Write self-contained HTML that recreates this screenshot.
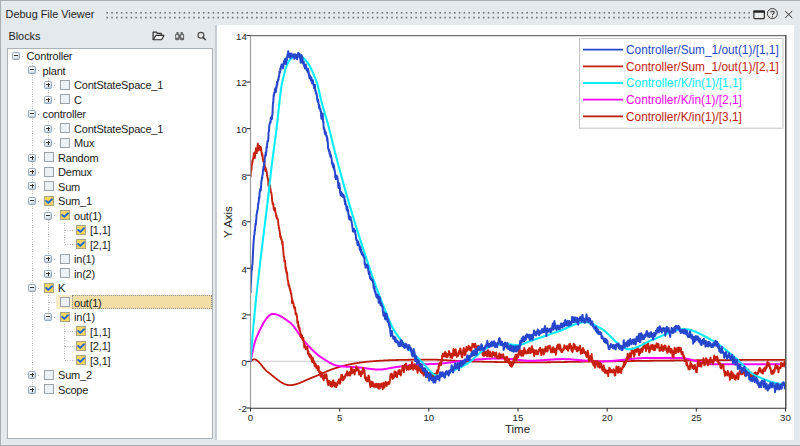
<!DOCTYPE html>
<html><head><meta charset="utf-8"><style>
html,body{margin:0;padding:0;}
body{width:800px;height:446px;position:relative;overflow:hidden;background:#e4e9ed;font-family:"Liberation Sans",sans-serif;color:#1e1e1e;}
.abs{position:absolute;}
#topb{position:absolute;left:0;top:0;width:800px;height:1.2px;background:#a9aeb3;}
#leftb{position:absolute;left:0;top:0;width:1.2px;height:446px;background:#a9aeb3;}
#botb{position:absolute;left:0;top:445px;width:800px;height:1px;background:#a9aeb3;}
#title{position:absolute;left:5.6px;top:8.3px;font-size:10.9px;line-height:13px;white-space:nowrap;}

#blocks{position:absolute;left:8.4px;top:30px;font-size:10.9px;line-height:13px;}
#tree{position:absolute;left:7px;top:48px;width:204px;height:389px;background:#fff;border:1px solid #aab2b8;}
#sep{position:absolute;left:214.6px;top:25px;width:2px;height:415px;background:#c5cbd0;}
#plot{position:absolute;left:217px;top:25px;width:577px;height:415px;background:#fff;}
.tt{position:absolute;font-size:11px;line-height:13px;white-space:nowrap;letter-spacing:-0.2px;color:#1a1a1a;}
.exp{position:absolute;width:6px;height:6px;border:1px solid #93a6ba;border-radius:1.5px;background:linear-gradient(#ffffff 30%,#cfdbe8);box-shadow:inset -0.5px -0.5px 0 #b4c4d4;}
.exp .mh{position:absolute;left:1.2px;top:2.4px;width:3.6px;height:1px;background:#333;}
.exp .mv{position:absolute;left:2.5px;top:1.1px;width:1px;height:3.6px;background:#333;}
.cb{position:absolute;width:8px;height:8px;border:1px solid #9aa3aa;background:#eef1f4;}
.cb.chk{background:#f6d660;border-color:#a6a286;}
.cb svg{position:absolute;left:-1px;top:-1px;}
.vl{position:absolute;width:1px;background-image:linear-gradient(#a8a8a8 50%,transparent 50%);background-size:1px 2.4px;}
.hl{position:absolute;height:1px;background-image:linear-gradient(90deg,#a8a8a8 50%,transparent 50%);background-size:2.4px 1px;}
.hlrow{position:absolute;background:#f8ebc8;}
.hlsel{position:absolute;box-sizing:border-box;background:#f2dea6;border:1px dotted #8a8c90;}
.chart{position:absolute;left:0;top:0;}
</style></head><body>
<div id="topb"></div><div id="leftb"></div><div id="botb"></div>
<div id="title">Debug File Viewer</div>
<svg class="abs" style="left:0;top:0" width="800" height="25"><g fill="#707478"><rect x="106.40" y="12.0" width="1.6" height="1.6"/><rect x="106.40" y="16.8" width="1.6" height="1.6"/><rect x="111.23" y="12.0" width="1.6" height="1.6"/><rect x="111.23" y="16.8" width="1.6" height="1.6"/><rect x="116.05" y="12.0" width="1.6" height="1.6"/><rect x="116.05" y="16.8" width="1.6" height="1.6"/><rect x="120.88" y="12.0" width="1.6" height="1.6"/><rect x="120.88" y="16.8" width="1.6" height="1.6"/><rect x="125.71" y="12.0" width="1.6" height="1.6"/><rect x="125.71" y="16.8" width="1.6" height="1.6"/><rect x="130.53" y="12.0" width="1.6" height="1.6"/><rect x="130.53" y="16.8" width="1.6" height="1.6"/><rect x="135.36" y="12.0" width="1.6" height="1.6"/><rect x="135.36" y="16.8" width="1.6" height="1.6"/><rect x="140.19" y="12.0" width="1.6" height="1.6"/><rect x="140.19" y="16.8" width="1.6" height="1.6"/><rect x="145.02" y="12.0" width="1.6" height="1.6"/><rect x="145.02" y="16.8" width="1.6" height="1.6"/><rect x="149.84" y="12.0" width="1.6" height="1.6"/><rect x="149.84" y="16.8" width="1.6" height="1.6"/><rect x="154.67" y="12.0" width="1.6" height="1.6"/><rect x="154.67" y="16.8" width="1.6" height="1.6"/><rect x="159.50" y="12.0" width="1.6" height="1.6"/><rect x="159.50" y="16.8" width="1.6" height="1.6"/><rect x="164.32" y="12.0" width="1.6" height="1.6"/><rect x="164.32" y="16.8" width="1.6" height="1.6"/><rect x="169.15" y="12.0" width="1.6" height="1.6"/><rect x="169.15" y="16.8" width="1.6" height="1.6"/><rect x="173.98" y="12.0" width="1.6" height="1.6"/><rect x="173.98" y="16.8" width="1.6" height="1.6"/><rect x="178.81" y="12.0" width="1.6" height="1.6"/><rect x="178.81" y="16.8" width="1.6" height="1.6"/><rect x="183.63" y="12.0" width="1.6" height="1.6"/><rect x="183.63" y="16.8" width="1.6" height="1.6"/><rect x="188.46" y="12.0" width="1.6" height="1.6"/><rect x="188.46" y="16.8" width="1.6" height="1.6"/><rect x="193.29" y="12.0" width="1.6" height="1.6"/><rect x="193.29" y="16.8" width="1.6" height="1.6"/><rect x="198.11" y="12.0" width="1.6" height="1.6"/><rect x="198.11" y="16.8" width="1.6" height="1.6"/><rect x="202.94" y="12.0" width="1.6" height="1.6"/><rect x="202.94" y="16.8" width="1.6" height="1.6"/><rect x="207.77" y="12.0" width="1.6" height="1.6"/><rect x="207.77" y="16.8" width="1.6" height="1.6"/><rect x="212.59" y="12.0" width="1.6" height="1.6"/><rect x="212.59" y="16.8" width="1.6" height="1.6"/><rect x="217.42" y="12.0" width="1.6" height="1.6"/><rect x="217.42" y="16.8" width="1.6" height="1.6"/><rect x="222.25" y="12.0" width="1.6" height="1.6"/><rect x="222.25" y="16.8" width="1.6" height="1.6"/><rect x="227.07" y="12.0" width="1.6" height="1.6"/><rect x="227.07" y="16.8" width="1.6" height="1.6"/><rect x="231.90" y="12.0" width="1.6" height="1.6"/><rect x="231.90" y="16.8" width="1.6" height="1.6"/><rect x="236.73" y="12.0" width="1.6" height="1.6"/><rect x="236.73" y="16.8" width="1.6" height="1.6"/><rect x="241.56" y="12.0" width="1.6" height="1.6"/><rect x="241.56" y="16.8" width="1.6" height="1.6"/><rect x="246.38" y="12.0" width="1.6" height="1.6"/><rect x="246.38" y="16.8" width="1.6" height="1.6"/><rect x="251.21" y="12.0" width="1.6" height="1.6"/><rect x="251.21" y="16.8" width="1.6" height="1.6"/><rect x="256.04" y="12.0" width="1.6" height="1.6"/><rect x="256.04" y="16.8" width="1.6" height="1.6"/><rect x="260.86" y="12.0" width="1.6" height="1.6"/><rect x="260.86" y="16.8" width="1.6" height="1.6"/><rect x="265.69" y="12.0" width="1.6" height="1.6"/><rect x="265.69" y="16.8" width="1.6" height="1.6"/><rect x="270.52" y="12.0" width="1.6" height="1.6"/><rect x="270.52" y="16.8" width="1.6" height="1.6"/><rect x="275.35" y="12.0" width="1.6" height="1.6"/><rect x="275.35" y="16.8" width="1.6" height="1.6"/><rect x="280.17" y="12.0" width="1.6" height="1.6"/><rect x="280.17" y="16.8" width="1.6" height="1.6"/><rect x="285.00" y="12.0" width="1.6" height="1.6"/><rect x="285.00" y="16.8" width="1.6" height="1.6"/><rect x="289.83" y="12.0" width="1.6" height="1.6"/><rect x="289.83" y="16.8" width="1.6" height="1.6"/><rect x="294.65" y="12.0" width="1.6" height="1.6"/><rect x="294.65" y="16.8" width="1.6" height="1.6"/><rect x="299.48" y="12.0" width="1.6" height="1.6"/><rect x="299.48" y="16.8" width="1.6" height="1.6"/><rect x="304.31" y="12.0" width="1.6" height="1.6"/><rect x="304.31" y="16.8" width="1.6" height="1.6"/><rect x="309.13" y="12.0" width="1.6" height="1.6"/><rect x="309.13" y="16.8" width="1.6" height="1.6"/><rect x="313.96" y="12.0" width="1.6" height="1.6"/><rect x="313.96" y="16.8" width="1.6" height="1.6"/><rect x="318.79" y="12.0" width="1.6" height="1.6"/><rect x="318.79" y="16.8" width="1.6" height="1.6"/><rect x="323.62" y="12.0" width="1.6" height="1.6"/><rect x="323.62" y="16.8" width="1.6" height="1.6"/><rect x="328.44" y="12.0" width="1.6" height="1.6"/><rect x="328.44" y="16.8" width="1.6" height="1.6"/><rect x="333.27" y="12.0" width="1.6" height="1.6"/><rect x="333.27" y="16.8" width="1.6" height="1.6"/><rect x="338.10" y="12.0" width="1.6" height="1.6"/><rect x="338.10" y="16.8" width="1.6" height="1.6"/><rect x="342.92" y="12.0" width="1.6" height="1.6"/><rect x="342.92" y="16.8" width="1.6" height="1.6"/><rect x="347.75" y="12.0" width="1.6" height="1.6"/><rect x="347.75" y="16.8" width="1.6" height="1.6"/><rect x="352.58" y="12.0" width="1.6" height="1.6"/><rect x="352.58" y="16.8" width="1.6" height="1.6"/><rect x="357.40" y="12.0" width="1.6" height="1.6"/><rect x="357.40" y="16.8" width="1.6" height="1.6"/><rect x="362.23" y="12.0" width="1.6" height="1.6"/><rect x="362.23" y="16.8" width="1.6" height="1.6"/><rect x="367.06" y="12.0" width="1.6" height="1.6"/><rect x="367.06" y="16.8" width="1.6" height="1.6"/><rect x="371.88" y="12.0" width="1.6" height="1.6"/><rect x="371.88" y="16.8" width="1.6" height="1.6"/><rect x="376.71" y="12.0" width="1.6" height="1.6"/><rect x="376.71" y="16.8" width="1.6" height="1.6"/><rect x="381.54" y="12.0" width="1.6" height="1.6"/><rect x="381.54" y="16.8" width="1.6" height="1.6"/><rect x="386.37" y="12.0" width="1.6" height="1.6"/><rect x="386.37" y="16.8" width="1.6" height="1.6"/><rect x="391.19" y="12.0" width="1.6" height="1.6"/><rect x="391.19" y="16.8" width="1.6" height="1.6"/><rect x="396.02" y="12.0" width="1.6" height="1.6"/><rect x="396.02" y="16.8" width="1.6" height="1.6"/><rect x="400.85" y="12.0" width="1.6" height="1.6"/><rect x="400.85" y="16.8" width="1.6" height="1.6"/><rect x="405.67" y="12.0" width="1.6" height="1.6"/><rect x="405.67" y="16.8" width="1.6" height="1.6"/><rect x="410.50" y="12.0" width="1.6" height="1.6"/><rect x="410.50" y="16.8" width="1.6" height="1.6"/><rect x="415.33" y="12.0" width="1.6" height="1.6"/><rect x="415.33" y="16.8" width="1.6" height="1.6"/><rect x="420.15" y="12.0" width="1.6" height="1.6"/><rect x="420.15" y="16.8" width="1.6" height="1.6"/><rect x="424.98" y="12.0" width="1.6" height="1.6"/><rect x="424.98" y="16.8" width="1.6" height="1.6"/><rect x="429.81" y="12.0" width="1.6" height="1.6"/><rect x="429.81" y="16.8" width="1.6" height="1.6"/><rect x="434.64" y="12.0" width="1.6" height="1.6"/><rect x="434.64" y="16.8" width="1.6" height="1.6"/><rect x="439.46" y="12.0" width="1.6" height="1.6"/><rect x="439.46" y="16.8" width="1.6" height="1.6"/><rect x="444.29" y="12.0" width="1.6" height="1.6"/><rect x="444.29" y="16.8" width="1.6" height="1.6"/><rect x="449.12" y="12.0" width="1.6" height="1.6"/><rect x="449.12" y="16.8" width="1.6" height="1.6"/><rect x="453.94" y="12.0" width="1.6" height="1.6"/><rect x="453.94" y="16.8" width="1.6" height="1.6"/><rect x="458.77" y="12.0" width="1.6" height="1.6"/><rect x="458.77" y="16.8" width="1.6" height="1.6"/><rect x="463.60" y="12.0" width="1.6" height="1.6"/><rect x="463.60" y="16.8" width="1.6" height="1.6"/><rect x="468.42" y="12.0" width="1.6" height="1.6"/><rect x="468.42" y="16.8" width="1.6" height="1.6"/><rect x="473.25" y="12.0" width="1.6" height="1.6"/><rect x="473.25" y="16.8" width="1.6" height="1.6"/><rect x="478.08" y="12.0" width="1.6" height="1.6"/><rect x="478.08" y="16.8" width="1.6" height="1.6"/><rect x="482.91" y="12.0" width="1.6" height="1.6"/><rect x="482.91" y="16.8" width="1.6" height="1.6"/><rect x="487.73" y="12.0" width="1.6" height="1.6"/><rect x="487.73" y="16.8" width="1.6" height="1.6"/><rect x="492.56" y="12.0" width="1.6" height="1.6"/><rect x="492.56" y="16.8" width="1.6" height="1.6"/><rect x="497.39" y="12.0" width="1.6" height="1.6"/><rect x="497.39" y="16.8" width="1.6" height="1.6"/><rect x="502.21" y="12.0" width="1.6" height="1.6"/><rect x="502.21" y="16.8" width="1.6" height="1.6"/><rect x="507.04" y="12.0" width="1.6" height="1.6"/><rect x="507.04" y="16.8" width="1.6" height="1.6"/><rect x="511.87" y="12.0" width="1.6" height="1.6"/><rect x="511.87" y="16.8" width="1.6" height="1.6"/><rect x="516.70" y="12.0" width="1.6" height="1.6"/><rect x="516.70" y="16.8" width="1.6" height="1.6"/><rect x="521.52" y="12.0" width="1.6" height="1.6"/><rect x="521.52" y="16.8" width="1.6" height="1.6"/><rect x="526.35" y="12.0" width="1.6" height="1.6"/><rect x="526.35" y="16.8" width="1.6" height="1.6"/><rect x="531.18" y="12.0" width="1.6" height="1.6"/><rect x="531.18" y="16.8" width="1.6" height="1.6"/><rect x="536.00" y="12.0" width="1.6" height="1.6"/><rect x="536.00" y="16.8" width="1.6" height="1.6"/><rect x="540.83" y="12.0" width="1.6" height="1.6"/><rect x="540.83" y="16.8" width="1.6" height="1.6"/><rect x="545.66" y="12.0" width="1.6" height="1.6"/><rect x="545.66" y="16.8" width="1.6" height="1.6"/><rect x="550.48" y="12.0" width="1.6" height="1.6"/><rect x="550.48" y="16.8" width="1.6" height="1.6"/><rect x="555.31" y="12.0" width="1.6" height="1.6"/><rect x="555.31" y="16.8" width="1.6" height="1.6"/><rect x="560.14" y="12.0" width="1.6" height="1.6"/><rect x="560.14" y="16.8" width="1.6" height="1.6"/><rect x="564.97" y="12.0" width="1.6" height="1.6"/><rect x="564.97" y="16.8" width="1.6" height="1.6"/><rect x="569.79" y="12.0" width="1.6" height="1.6"/><rect x="569.79" y="16.8" width="1.6" height="1.6"/><rect x="574.62" y="12.0" width="1.6" height="1.6"/><rect x="574.62" y="16.8" width="1.6" height="1.6"/><rect x="579.45" y="12.0" width="1.6" height="1.6"/><rect x="579.45" y="16.8" width="1.6" height="1.6"/><rect x="584.27" y="12.0" width="1.6" height="1.6"/><rect x="584.27" y="16.8" width="1.6" height="1.6"/><rect x="589.10" y="12.0" width="1.6" height="1.6"/><rect x="589.10" y="16.8" width="1.6" height="1.6"/><rect x="593.93" y="12.0" width="1.6" height="1.6"/><rect x="593.93" y="16.8" width="1.6" height="1.6"/><rect x="598.75" y="12.0" width="1.6" height="1.6"/><rect x="598.75" y="16.8" width="1.6" height="1.6"/><rect x="603.58" y="12.0" width="1.6" height="1.6"/><rect x="603.58" y="16.8" width="1.6" height="1.6"/><rect x="608.41" y="12.0" width="1.6" height="1.6"/><rect x="608.41" y="16.8" width="1.6" height="1.6"/><rect x="613.24" y="12.0" width="1.6" height="1.6"/><rect x="613.24" y="16.8" width="1.6" height="1.6"/><rect x="618.06" y="12.0" width="1.6" height="1.6"/><rect x="618.06" y="16.8" width="1.6" height="1.6"/><rect x="622.89" y="12.0" width="1.6" height="1.6"/><rect x="622.89" y="16.8" width="1.6" height="1.6"/><rect x="627.72" y="12.0" width="1.6" height="1.6"/><rect x="627.72" y="16.8" width="1.6" height="1.6"/><rect x="632.54" y="12.0" width="1.6" height="1.6"/><rect x="632.54" y="16.8" width="1.6" height="1.6"/><rect x="637.37" y="12.0" width="1.6" height="1.6"/><rect x="637.37" y="16.8" width="1.6" height="1.6"/><rect x="642.20" y="12.0" width="1.6" height="1.6"/><rect x="642.20" y="16.8" width="1.6" height="1.6"/><rect x="647.02" y="12.0" width="1.6" height="1.6"/><rect x="647.02" y="16.8" width="1.6" height="1.6"/><rect x="651.85" y="12.0" width="1.6" height="1.6"/><rect x="651.85" y="16.8" width="1.6" height="1.6"/><rect x="656.68" y="12.0" width="1.6" height="1.6"/><rect x="656.68" y="16.8" width="1.6" height="1.6"/><rect x="661.50" y="12.0" width="1.6" height="1.6"/><rect x="661.50" y="16.8" width="1.6" height="1.6"/><rect x="666.33" y="12.0" width="1.6" height="1.6"/><rect x="666.33" y="16.8" width="1.6" height="1.6"/><rect x="671.16" y="12.0" width="1.6" height="1.6"/><rect x="671.16" y="16.8" width="1.6" height="1.6"/><rect x="675.99" y="12.0" width="1.6" height="1.6"/><rect x="675.99" y="16.8" width="1.6" height="1.6"/><rect x="680.81" y="12.0" width="1.6" height="1.6"/><rect x="680.81" y="16.8" width="1.6" height="1.6"/><rect x="685.64" y="12.0" width="1.6" height="1.6"/><rect x="685.64" y="16.8" width="1.6" height="1.6"/><rect x="690.47" y="12.0" width="1.6" height="1.6"/><rect x="690.47" y="16.8" width="1.6" height="1.6"/><rect x="695.29" y="12.0" width="1.6" height="1.6"/><rect x="695.29" y="16.8" width="1.6" height="1.6"/><rect x="700.12" y="12.0" width="1.6" height="1.6"/><rect x="700.12" y="16.8" width="1.6" height="1.6"/><rect x="704.95" y="12.0" width="1.6" height="1.6"/><rect x="704.95" y="16.8" width="1.6" height="1.6"/><rect x="709.77" y="12.0" width="1.6" height="1.6"/><rect x="709.77" y="16.8" width="1.6" height="1.6"/><rect x="714.60" y="12.0" width="1.6" height="1.6"/><rect x="714.60" y="16.8" width="1.6" height="1.6"/><rect x="719.43" y="12.0" width="1.6" height="1.6"/><rect x="719.43" y="16.8" width="1.6" height="1.6"/><rect x="724.26" y="12.0" width="1.6" height="1.6"/><rect x="724.26" y="16.8" width="1.6" height="1.6"/><rect x="729.08" y="12.0" width="1.6" height="1.6"/><rect x="729.08" y="16.8" width="1.6" height="1.6"/><rect x="733.91" y="12.0" width="1.6" height="1.6"/><rect x="733.91" y="16.8" width="1.6" height="1.6"/><rect x="738.74" y="12.0" width="1.6" height="1.6"/><rect x="738.74" y="16.8" width="1.6" height="1.6"/><rect x="743.56" y="12.0" width="1.6" height="1.6"/><rect x="743.56" y="16.8" width="1.6" height="1.6"/><rect x="748.39" y="12.0" width="1.6" height="1.6"/><rect x="748.39" y="16.8" width="1.6" height="1.6"/></g></svg>
<svg class="abs" style="left:752px;top:8.4px" width="48" height="14" viewBox="0 0 48 14">
 <rect x="1.85" y="3.1" width="10.5" height="7.5" rx="0.8" fill="#eaeef1" stroke="#2e2e2e" stroke-width="1.2"/>
 <rect x="1.3" y="2.5" width="11.6" height="2.2" rx="0.5" fill="#222"/>
 <circle cx="20.4" cy="5.6" r="5.0" fill="none" stroke="#3a3a3a" stroke-width="1.0"/>
 <path d="M18.6,4.4 C18.6,2.9 22.2,2.7 22.2,4.5 C22.2,5.6 20.4,5.8 20.4,7.2" fill="none" stroke="#2a2a2a" stroke-width="1.05"/>
 <rect x="19.85" y="8.1" width="1.1" height="1.1" fill="#2a2a2a"/>
 <path d="M33.2,3.1 L40.2,9.9 M40.2,3.1 L33.2,9.9" stroke="#333" stroke-width="1.0"/>
</svg>
<div id="blocks">Blocks</div>
<svg class="abs" style="left:150px;top:29px" width="62" height="14" viewBox="0 0 62 14">
 <path d="M3.1,6.6 L3.1,3.1 L6.5,3.1 L7.3,4.4 L11.3,4.4 L11.3,6.4" fill="none" stroke="#2c2c2c" stroke-width="1.15" stroke-linejoin="round"/>
 <path d="M3.1,10.7 L11.6,10.7 L13.9,6.4 L6,6.4 Z" fill="#f2f4f6" stroke="#2c2c2c" stroke-width="1.15" stroke-linejoin="round"/>
 <path d="M3.1,6 L3.1,10.7" stroke="#2c2c2c" stroke-width="1.15"/>
 <g fill="#6a6a6a">
  <rect x="25.1" y="4.8" width="4.2" height="6.4" rx="1"/>
  <rect x="29.9" y="4.8" width="4.2" height="6.4" rx="1"/>
  <rect x="26.4" y="3" width="2.3" height="3" rx="0.6"/>
  <rect x="30.6" y="3" width="2.3" height="3" rx="0.6"/>
  <rect x="28.8" y="5.8" width="1.6" height="3.6"/>
 </g>
 <ellipse cx="27.1" cy="7.4" rx="1" ry="1.3" fill="#f4f6f8"/>
 <ellipse cx="32.1" cy="7.4" rx="1" ry="1.3" fill="#f4f6f8"/>
 <circle cx="50.9" cy="6.3" r="2.9" fill="none" stroke="#484848" stroke-width="1.15"/>
 <path d="M53,8.4 L55.2,10.5" stroke="#404040" stroke-width="1.7" stroke-linecap="round"/>
</svg>
<div id="tree"></div>
<div class="hl" style="left:22.0px;top:56px;width:1.2px"></div><div class="vl" style="left:31.5px;top:63.0px;height:7.2px"></div><div class="hl" style="left:38.0px;top:70px;width:1.2px"></div><div class="vl" style="left:47.5px;top:77.5px;height:7.2px"></div><div class="hl" style="left:54.0px;top:85px;width:1.2px"></div><div class="vl" style="left:47.5px;top:84.8px;height:14.5px"></div><div class="hl" style="left:54.0px;top:99px;width:1.2px"></div><div class="vl" style="left:31.5px;top:70.3px;height:43.5px"></div><div class="hl" style="left:38.0px;top:114px;width:1.2px"></div><div class="vl" style="left:47.5px;top:121.1px;height:7.2px"></div><div class="hl" style="left:54.0px;top:128px;width:1.2px"></div><div class="vl" style="left:47.5px;top:128.3px;height:14.5px"></div><div class="hl" style="left:54.0px;top:143px;width:1.2px"></div><div class="vl" style="left:31.5px;top:113.8px;height:43.5px"></div><div class="hl" style="left:38.0px;top:157px;width:1.2px"></div><div class="vl" style="left:31.5px;top:157.3px;height:14.5px"></div><div class="hl" style="left:38.0px;top:172px;width:1.2px"></div><div class="vl" style="left:31.5px;top:171.8px;height:14.5px"></div><div class="hl" style="left:38.0px;top:186px;width:1.2px"></div><div class="vl" style="left:31.5px;top:186.3px;height:14.5px"></div><div class="hl" style="left:38.0px;top:201px;width:1.2px"></div><div class="vl" style="left:47.5px;top:208.1px;height:7.2px"></div><div class="hl" style="left:54.0px;top:215px;width:1.2px"></div><div class="vl" style="left:63.5px;top:222.6px;height:7.2px"></div><div class="hl" style="left:65.0px;top:230px;width:10.5px"></div><div class="vl" style="left:63.5px;top:229.8px;height:14.5px"></div><div class="hl" style="left:65.0px;top:244px;width:10.5px"></div><div class="vl" style="left:47.5px;top:215.3px;height:43.5px"></div><div class="hl" style="left:54.0px;top:259px;width:1.2px"></div><div class="vl" style="left:47.5px;top:258.8px;height:14.5px"></div><div class="hl" style="left:54.0px;top:273px;width:1.2px"></div><div class="vl" style="left:31.5px;top:200.8px;height:87.0px"></div><div class="hl" style="left:38.0px;top:288px;width:1.2px"></div><div class="vl" style="left:47.5px;top:295.1px;height:7.2px"></div><div class="hl" style="left:49.0px;top:302px;width:10.5px"></div><div class="vl" style="left:47.5px;top:302.3px;height:14.5px"></div><div class="hl" style="left:54.0px;top:317px;width:1.2px"></div><div class="vl" style="left:63.5px;top:324.1px;height:7.2px"></div><div class="hl" style="left:65.0px;top:331px;width:10.5px"></div><div class="vl" style="left:63.5px;top:331.3px;height:14.5px"></div><div class="hl" style="left:65.0px;top:346px;width:10.5px"></div><div class="vl" style="left:63.5px;top:345.8px;height:14.5px"></div><div class="hl" style="left:65.0px;top:360px;width:10.5px"></div><div class="vl" style="left:31.5px;top:287.8px;height:87.0px"></div><div class="hl" style="left:38.0px;top:375px;width:1.2px"></div><div class="vl" style="left:31.5px;top:374.8px;height:14.5px"></div><div class="hl" style="left:38.0px;top:389px;width:1.2px"></div>
<div class="exp" style="left:12px;top:52px"><i class="mh"></i></div><div class="tt" style="left:26.6px;top:50.2px">Controller</div><div class="exp" style="left:28px;top:66px"><i class="mh"></i></div><div class="tt" style="left:42.6px;top:64.7px">plant</div><div class="exp" style="left:44px;top:81px"><i class="mh"></i><i class="mv"></i></div><div class="cb" style="left:59.6px;top:80px"></div><div class="tt" style="left:74.0px;top:79.2px">ContStateSpace_1</div><div class="exp" style="left:44px;top:96px"><i class="mh"></i><i class="mv"></i></div><div class="cb" style="left:59.6px;top:94px"></div><div class="tt" style="left:74.0px;top:93.7px">C</div><div class="exp" style="left:28px;top:110px"><i class="mh"></i></div><div class="tt" style="left:42.6px;top:108.2px">controller</div><div class="exp" style="left:44px;top:125px"><i class="mh"></i><i class="mv"></i></div><div class="cb" style="left:59.6px;top:123px"></div><div class="tt" style="left:74.0px;top:122.7px">ContStateSpace_1</div><div class="exp" style="left:44px;top:139px"><i class="mh"></i><i class="mv"></i></div><div class="cb" style="left:59.6px;top:138px"></div><div class="tt" style="left:74.0px;top:137.2px">Mux</div><div class="exp" style="left:28px;top:154px"><i class="mh"></i><i class="mv"></i></div><div class="cb" style="left:43.6px;top:152px"></div><div class="tt" style="left:58.0px;top:151.7px">Random</div><div class="exp" style="left:28px;top:168px"><i class="mh"></i><i class="mv"></i></div><div class="cb" style="left:43.6px;top:167px"></div><div class="tt" style="left:58.0px;top:166.2px">Demux</div><div class="exp" style="left:28px;top:182px"><i class="mh"></i><i class="mv"></i></div><div class="cb" style="left:43.6px;top:181px"></div><div class="tt" style="left:58.0px;top:180.7px">Sum</div><div class="exp" style="left:28px;top:197px"><i class="mh"></i></div><div class="cb chk" style="left:43.6px;top:196px"><svg width="10" height="10" viewBox="0 0 10 10"><path d="M2.2,5 L4.3,6.9 L8,3.3" fill="none" stroke="#1f66d6" stroke-width="1.9" stroke-linecap="round" stroke-linejoin="round"/></svg></div><div class="tt" style="left:58.0px;top:195.2px">Sum_1</div><div class="exp" style="left:44px;top:212px"><i class="mh"></i></div><div class="cb chk" style="left:59.6px;top:210px"><svg width="10" height="10" viewBox="0 0 10 10"><path d="M2.2,5 L4.3,6.9 L8,3.3" fill="none" stroke="#1f66d6" stroke-width="1.9" stroke-linecap="round" stroke-linejoin="round"/></svg></div><div class="tt" style="left:74.0px;top:209.7px">out(1)</div><div class="cb chk" style="left:75.6px;top:225px"><svg width="10" height="10" viewBox="0 0 10 10"><path d="M2.2,5 L4.3,6.9 L8,3.3" fill="none" stroke="#1f66d6" stroke-width="1.9" stroke-linecap="round" stroke-linejoin="round"/></svg></div><div class="tt" style="left:90.0px;top:224.2px">[1,1]</div><div class="cb chk" style="left:75.6px;top:239px"><svg width="10" height="10" viewBox="0 0 10 10"><path d="M2.2,5 L4.3,6.9 L8,3.3" fill="none" stroke="#1f66d6" stroke-width="1.9" stroke-linecap="round" stroke-linejoin="round"/></svg></div><div class="tt" style="left:90.0px;top:238.7px">[2,1]</div><div class="exp" style="left:44px;top:255px"><i class="mh"></i><i class="mv"></i></div><div class="cb" style="left:59.6px;top:254px"></div><div class="tt" style="left:74.0px;top:253.2px">in(1)</div><div class="exp" style="left:44px;top:270px"><i class="mh"></i><i class="mv"></i></div><div class="cb" style="left:59.6px;top:268px"></div><div class="tt" style="left:74.0px;top:267.7px">in(2)</div><div class="exp" style="left:28px;top:284px"><i class="mh"></i></div><div class="cb chk" style="left:43.6px;top:283px"><svg width="10" height="10" viewBox="0 0 10 10"><path d="M2.2,5 L4.3,6.9 L8,3.3" fill="none" stroke="#1f66d6" stroke-width="1.9" stroke-linecap="round" stroke-linejoin="round"/></svg></div><div class="tt" style="left:58.0px;top:282.2px">K</div><div class="hlrow" style="left:56px;top:295.1px;width:156.3px;height:14.3px"></div><div class="hlsel" style="left:71.8px;top:295.1px;width:140.5px;height:14.3px"></div><div class="cb" style="left:59.6px;top:297px"></div><div class="tt" style="left:74.0px;top:296.7px">out(1)</div><div class="exp" style="left:44px;top:313px"><i class="mh"></i></div><div class="cb chk" style="left:59.6px;top:312px"><svg width="10" height="10" viewBox="0 0 10 10"><path d="M2.2,5 L4.3,6.9 L8,3.3" fill="none" stroke="#1f66d6" stroke-width="1.9" stroke-linecap="round" stroke-linejoin="round"/></svg></div><div class="tt" style="left:74.0px;top:311.2px">in(1)</div><div class="cb chk" style="left:75.6px;top:326px"><svg width="10" height="10" viewBox="0 0 10 10"><path d="M2.2,5 L4.3,6.9 L8,3.3" fill="none" stroke="#1f66d6" stroke-width="1.9" stroke-linecap="round" stroke-linejoin="round"/></svg></div><div class="tt" style="left:90.0px;top:325.7px">[1,1]</div><div class="cb chk" style="left:75.6px;top:341px"><svg width="10" height="10" viewBox="0 0 10 10"><path d="M2.2,5 L4.3,6.9 L8,3.3" fill="none" stroke="#1f66d6" stroke-width="1.9" stroke-linecap="round" stroke-linejoin="round"/></svg></div><div class="tt" style="left:90.0px;top:340.2px">[2,1]</div><div class="cb chk" style="left:75.6px;top:355px"><svg width="10" height="10" viewBox="0 0 10 10"><path d="M2.2,5 L4.3,6.9 L8,3.3" fill="none" stroke="#1f66d6" stroke-width="1.9" stroke-linecap="round" stroke-linejoin="round"/></svg></div><div class="tt" style="left:90.0px;top:354.7px">[3,1]</div><div class="exp" style="left:28px;top:371px"><i class="mh"></i><i class="mv"></i></div><div class="cb" style="left:43.6px;top:370px"></div><div class="tt" style="left:58.0px;top:369.2px">Sum_2</div><div class="exp" style="left:28px;top:386px"><i class="mh"></i><i class="mv"></i></div><div class="cb" style="left:43.6px;top:384px"></div><div class="tt" style="left:58.0px;top:383.7px">Scope</div>
<div id="sep"></div>
<div id="plot"></div>
<svg class="chart" width="800" height="446" viewBox="0 0 800 446">
<defs><clipPath id="pc"><rect x="250.5" y="35.5" width="535" height="372.5"/></clipPath></defs>
<line x1="250.5" y1="361.44" x2="785.5" y2="361.44" stroke="#d4d4d4" stroke-width="1.2"/>
<g clip-path="url(#pc)" fill="none" stroke-linejoin="round">
<path d="M250.50,361.44 L250.95,361.04 L251.39,360.66 L251.84,360.30 L252.28,359.99 L252.73,359.72 L253.18,359.52 L253.62,359.39 L254.07,359.34 L254.52,359.37 L254.96,359.46 L255.41,359.60 L255.85,359.79 L256.30,360.03 L256.75,360.31 L257.19,360.63 L257.64,360.99 L258.09,361.39 L258.53,361.81 L258.98,362.26 L259.42,362.74 L259.87,363.23 L260.32,363.75 L260.76,364.28 L261.21,364.82 L261.66,365.36 L262.10,365.92 L262.55,366.47 L262.99,367.02 L263.44,367.57 L263.89,368.10 L264.33,368.63 L264.78,369.14 L265.22,369.63 L265.67,370.10 L266.12,370.54 L266.56,370.96 L267.01,371.34 L267.46,371.69 L267.90,372.03 L268.35,372.37 L268.79,372.71 L269.24,373.06 L269.69,373.42 L270.13,373.77 L270.58,374.13 L271.03,374.49 L271.47,374.86 L271.92,375.22 L272.36,375.59 L272.81,375.96 L273.26,376.32 L273.70,376.69 L274.15,377.05 L274.60,377.42 L275.04,377.78 L275.49,378.13 L275.93,378.49 L276.38,378.84 L276.83,379.19 L277.27,379.53 L277.72,379.87 L278.16,380.20 L278.61,380.52 L279.06,380.84 L279.50,381.15 L279.95,381.46 L280.40,381.75 L280.84,382.04 L281.29,382.32 L281.73,382.59 L282.18,382.84 L282.63,383.09 L283.07,383.33 L283.52,383.55 L283.97,383.76 L284.41,383.96 L284.86,384.15 L285.30,384.32 L285.75,384.48 L286.20,384.62 L286.64,384.75 L287.09,384.87 L287.54,384.96 L287.98,385.04 L288.43,385.10 L288.87,385.15 L289.32,385.18 L289.77,385.18 L290.21,385.18 L290.66,385.16 L291.10,385.13 L291.55,385.09 L292.00,385.04 L292.44,384.99 L292.89,384.92 L293.34,384.84 L293.78,384.76 L294.23,384.66 L294.67,384.56 L295.12,384.45 L295.57,384.33 L296.01,384.21 L296.46,384.07 L296.91,383.94 L297.35,383.79 L297.80,383.64 L298.24,383.48 L298.69,383.32 L299.14,383.16 L299.58,382.99 L300.03,382.81 L300.47,382.63 L300.92,382.45 L301.37,382.26 L301.81,382.07 L302.26,381.88 L302.71,381.69 L303.15,381.49 L303.60,381.29 L304.04,381.09 L304.49,380.89 L304.94,380.69 L305.38,380.49 L305.83,380.28 L306.28,380.08 L306.72,379.88 L307.17,379.68 L307.61,379.48 L308.06,379.28 L308.51,379.09 L308.95,378.89 L309.40,378.70 L309.85,378.51 L310.29,378.32 L310.74,378.14 L311.18,377.96 L311.63,377.79 L312.08,377.62 L312.52,377.45 L312.97,377.28 L313.41,377.11 L313.86,376.94 L314.31,376.76 L314.75,376.58 L315.20,376.40 L315.65,376.22 L316.09,376.04 L316.54,375.85 L316.98,375.66 L317.43,375.47 L317.88,375.28 L318.32,375.09 L318.77,374.90 L319.22,374.70 L319.66,374.51 L320.11,374.31 L320.55,374.12 L321.00,373.92 L321.45,373.72 L321.89,373.53 L322.34,373.33 L322.79,373.13 L323.23,372.93 L323.68,372.74 L324.12,372.54 L324.57,372.35 L325.02,372.15 L325.46,371.96 L325.91,371.77 L326.35,371.58 L326.80,371.39 L327.25,371.20 L327.69,371.01 L328.14,370.83 L328.59,370.65 L329.03,370.46 L329.48,370.29 L329.92,370.11 L330.37,369.94 L330.82,369.77 L331.26,369.60 L331.71,369.43 L332.16,369.27 L332.60,369.11 L333.05,368.96 L333.49,368.81 L333.94,368.66 L334.39,368.51 L334.83,368.37 L335.28,368.23 L335.73,368.09 L336.17,367.96 L336.62,367.82 L337.06,367.68 L337.51,367.55 L337.96,367.41 L338.40,367.28 L338.85,367.14 L339.29,367.01 L339.74,366.88 L340.19,366.75 L340.63,366.62 L341.08,366.49 L341.53,366.37 L341.97,366.24 L342.42,366.12 L342.86,366.00 L343.31,365.88 L343.76,365.76 L344.20,365.64 L344.65,365.52 L345.10,365.41 L345.54,365.30 L345.99,365.19 L346.43,365.08 L346.88,364.97 L347.33,364.86 L347.77,364.76 L348.22,364.66 L348.67,364.56 L349.11,364.46 L349.56,364.37 L350.00,364.27 L350.45,364.18 L350.90,364.10 L351.34,364.01 L351.79,363.93 L352.23,363.84 L352.68,363.77 L353.13,363.69 L353.57,363.61 L354.02,363.54 L354.47,363.46 L354.91,363.39 L355.36,363.32 L355.80,363.25 L356.25,363.17 L356.70,363.10 L357.14,363.03 L357.59,362.97 L358.04,362.90 L358.48,362.83 L358.93,362.77 L359.37,362.70 L359.82,362.64 L360.27,362.58 L360.71,362.52 L361.16,362.46 L361.61,362.40 L362.05,362.34 L362.50,362.28 L362.94,362.22 L363.39,362.17 L363.84,362.11 L364.28,362.06 L364.73,362.01 L365.17,361.96 L365.62,361.91 L366.07,361.86 L366.51,361.81 L366.96,361.77 L367.41,361.72 L367.85,361.68 L368.30,361.63 L368.74,361.59 L369.19,361.55 L369.64,361.51 L370.08,361.47 L370.53,361.44 L370.98,361.40 L371.42,361.36 L371.87,361.33 L372.31,361.29 L372.76,361.26 L373.21,361.22 L373.65,361.19 L374.10,361.15 L374.55,361.12 L374.99,361.09 L375.44,361.05 L375.88,361.02 L376.33,360.99 L376.78,360.96 L377.22,360.92 L377.67,360.89 L378.11,360.86 L378.56,360.83 L379.01,360.80 L379.45,360.77 L379.90,360.74 L380.35,360.71 L380.79,360.68 L381.24,360.65 L381.68,360.63 L382.13,360.60 L382.58,360.57 L383.02,360.54 L383.47,360.52 L383.92,360.49 L384.36,360.47 L384.81,360.44 L385.25,360.42 L385.70,360.39 L386.15,360.37 L386.59,360.35 L387.04,360.33 L387.48,360.31 L387.93,360.29 L388.38,360.27 L388.82,360.25 L389.27,360.23 L389.72,360.21 L390.16,360.19 L390.61,360.17 L391.05,360.16 L391.50,360.14 L391.95,360.13 L392.39,360.11 L392.84,360.10 L393.29,360.08 L393.73,360.07 L394.18,360.06 L394.62,360.05 L395.07,360.04 L395.52,360.03 L395.96,360.02 L396.41,360.01 L396.86,360.00 L397.30,359.99 L397.75,359.98 L398.19,359.97 L398.64,359.96 L399.09,359.95 L399.53,359.94 L399.98,359.93 L400.42,359.92 L400.87,359.91 L401.32,359.90 L401.76,359.89 L402.21,359.88 L402.66,359.87 L403.10,359.86 L403.55,359.86 L403.99,359.85 L404.44,359.84 L404.89,359.83 L405.33,359.82 L405.78,359.81 L406.23,359.81 L406.67,359.80 L407.12,359.79 L407.56,359.78 L408.01,359.77 L408.46,359.77 L408.90,359.76 L409.35,359.75 L409.80,359.74 L410.24,359.74 L410.69,359.73 L411.13,359.72 L411.58,359.72 L412.03,359.71 L412.47,359.70 L412.92,359.70 L413.36,359.69 L413.81,359.68 L414.26,359.68 L414.70,359.67 L415.15,359.67 L415.60,359.66 L416.04,359.66 L416.49,359.65 L416.93,359.64 L417.38,359.64 L417.83,359.64 L418.27,359.63 L418.72,359.63 L419.17,359.62 L419.61,359.62 L420.06,359.61 L420.50,359.61 L420.95,359.61 L421.40,359.60 L421.84,359.60 L422.29,359.60 L422.74,359.59 L423.18,359.59 L423.63,359.59 L424.07,359.59 L424.52,359.58 L424.97,359.58 L425.41,359.58 L425.86,359.58 L426.30,359.58 L426.75,359.58 L427.20,359.58 L427.64,359.58 L428.09,359.58 L428.54,359.58 L428.98,359.58 L429.43,359.58 L429.87,359.58 L430.32,359.58 L430.77,359.58 L431.21,359.59 L431.66,359.60 L432.11,359.60 L432.55,359.61 L433.00,359.62 L433.44,359.63 L433.89,359.64 L434.34,359.65 L434.78,359.66 L435.23,359.68 L435.68,359.69 L436.12,359.71 L436.57,359.72 L437.01,359.74 L437.46,359.75 L437.91,359.77 L438.35,359.79 L438.80,359.81 L439.24,359.83 L439.69,359.85 L440.14,359.87 L440.58,359.89 L441.03,359.91 L441.48,359.93 L441.92,359.96 L442.37,359.98 L442.81,360.00 L443.26,360.03 L443.71,360.05 L444.15,360.08 L444.60,360.10 L445.05,360.13 L445.49,360.15 L445.94,360.18 L446.38,360.20 L446.83,360.23 L447.28,360.26 L447.72,360.28 L448.17,360.31 L448.62,360.34 L449.06,360.37 L449.51,360.40 L449.95,360.42 L450.40,360.45 L450.85,360.48 L451.29,360.51 L451.74,360.53 L452.18,360.56 L452.63,360.59 L453.08,360.62 L453.52,360.65 L453.97,360.67 L454.42,360.70 L454.86,360.73 L455.31,360.76 L455.75,360.78 L456.20,360.81 L456.65,360.84 L457.09,360.87 L457.54,360.89 L457.99,360.92 L458.43,360.94 L458.88,360.97 L459.32,360.99 L459.77,361.02 L460.22,361.04 L460.66,361.07 L461.11,361.09 L461.56,361.11 L462.00,361.14 L462.45,361.16 L462.89,361.18 L463.34,361.20 L463.79,361.22 L464.23,361.24 L464.68,361.26 L465.12,361.28 L465.57,361.30 L466.02,361.32 L466.46,361.33 L466.91,361.35 L467.36,361.37 L467.80,361.38 L468.25,361.39 L468.69,361.41 L469.14,361.42 L469.59,361.43 L470.03,361.44 L470.48,361.45 L470.93,361.46 L471.37,361.47 L471.82,361.48 L472.26,361.49 L472.71,361.51 L473.16,361.52 L473.60,361.53 L474.05,361.54 L474.49,361.55 L474.94,361.56 L475.39,361.57 L475.83,361.58 L476.28,361.59 L476.73,361.60 L477.17,361.61 L477.62,361.62 L478.06,361.63 L478.51,361.64 L478.96,361.65 L479.40,361.66 L479.85,361.67 L480.30,361.68 L480.74,361.69 L481.19,361.70 L481.63,361.71 L482.08,361.72 L482.53,361.73 L482.97,361.74 L483.42,361.75 L483.87,361.76 L484.31,361.77 L484.76,361.78 L485.20,361.79 L485.65,361.80 L486.10,361.81 L486.54,361.82 L486.99,361.83 L487.43,361.84 L487.88,361.85 L488.33,361.86 L488.77,361.87 L489.22,361.87 L489.67,361.88 L490.11,361.89 L490.56,361.90 L491.00,361.91 L491.45,361.92 L491.90,361.93 L492.34,361.94 L492.79,361.95 L493.24,361.96 L493.68,361.96 L494.13,361.97 L494.57,361.98 L495.02,361.99 L495.47,362.00 L495.91,362.01 L496.36,362.01 L496.81,362.02 L497.25,362.03 L497.70,362.04 L498.14,362.05 L498.59,362.06 L499.04,362.06 L499.48,362.07 L499.93,362.08 L500.37,362.09 L500.82,362.09 L501.27,362.10 L501.71,362.11 L502.16,362.12 L502.61,362.12 L503.05,362.13 L503.50,362.14 L503.94,362.14 L504.39,362.15 L504.84,362.16 L505.28,362.16 L505.73,362.17 L506.18,362.18 L506.62,362.18 L507.07,362.19 L507.51,362.20 L507.96,362.20 L508.41,362.21 L508.85,362.22 L509.30,362.22 L509.75,362.23 L510.19,362.23 L510.64,362.24 L511.08,362.24 L511.53,362.25 L511.98,362.25 L512.42,362.26 L512.87,362.26 L513.31,362.27 L513.76,362.27 L514.21,362.28 L514.65,362.28 L515.10,362.29 L515.55,362.29 L515.99,362.30 L516.44,362.30 L516.88,362.31 L517.33,362.31 L517.78,362.31 L518.22,362.32 L518.67,362.32 L519.12,362.32 L519.56,362.33 L520.01,362.33 L520.45,362.33 L520.90,362.34 L521.35,362.34 L521.79,362.34 L522.24,362.34 L522.69,362.35 L523.13,362.35 L523.58,362.35 L524.02,362.35 L524.47,362.36 L524.92,362.36 L525.36,362.36 L525.81,362.36 L526.25,362.36 L526.70,362.36 L527.15,362.36 L527.59,362.37 L528.04,362.37 L528.49,362.37 L528.93,362.37 L529.38,362.37 L529.82,362.37 L530.27,362.37 L530.72,362.37 L531.16,362.37 L531.61,362.37 L532.06,362.37 L532.50,362.37 L532.95,362.37 L533.39,362.37 L533.84,362.36 L534.29,362.36 L534.73,362.36 L535.18,362.36 L535.63,362.36 L536.07,362.36 L536.52,362.36 L536.96,362.35 L537.41,362.35 L537.86,362.35 L538.30,362.35 L538.75,362.34 L539.19,362.34 L539.64,362.34 L540.09,362.33 L540.53,362.33 L540.98,362.33 L541.43,362.33 L541.87,362.32 L542.32,362.32 L542.76,362.31 L543.21,362.31 L543.66,362.31 L544.10,362.30 L544.55,362.30 L545.00,362.29 L545.44,362.29 L545.89,362.29 L546.33,362.28 L546.78,362.28 L547.23,362.27 L547.67,362.27 L548.12,362.26 L548.57,362.26 L549.01,362.25 L549.46,362.25 L549.90,362.24 L550.35,362.24 L550.80,362.23 L551.24,362.22 L551.69,362.22 L552.13,362.21 L552.58,362.21 L553.03,362.20 L553.47,362.20 L553.92,362.19 L554.37,362.18 L554.81,362.18 L555.26,362.17 L555.70,362.16 L556.15,362.16 L556.60,362.15 L557.04,362.14 L557.49,362.14 L557.94,362.13 L558.38,362.12 L558.83,362.12 L559.27,362.11 L559.72,362.10 L560.17,362.10 L560.61,362.09 L561.06,362.08 L561.51,362.08 L561.95,362.07 L562.40,362.06 L562.84,362.05 L563.29,362.05 L563.74,362.04 L564.18,362.03 L564.63,362.02 L565.07,362.02 L565.52,362.01 L565.97,362.00 L566.41,361.99 L566.86,361.99 L567.31,361.98 L567.75,361.97 L568.20,361.96 L568.64,361.96 L569.09,361.95 L569.54,361.94 L569.98,361.93 L570.43,361.92 L570.88,361.92 L571.32,361.91 L571.77,361.90 L572.21,361.89 L572.66,361.88 L573.11,361.88 L573.55,361.87 L574.00,361.86 L574.44,361.85 L574.89,361.85 L575.34,361.84 L575.78,361.83 L576.23,361.82 L576.68,361.81 L577.12,361.81 L577.57,361.80 L578.01,361.79 L578.46,361.78 L578.91,361.77 L579.35,361.77 L579.80,361.76 L580.25,361.75 L580.69,361.74 L581.14,361.73 L581.58,361.73 L582.03,361.72 L582.48,361.71 L582.92,361.70 L583.37,361.70 L583.82,361.69 L584.26,361.68 L584.71,361.67 L585.15,361.66 L585.60,361.66 L586.05,361.65 L586.49,361.64 L586.94,361.63 L587.38,361.63 L587.83,361.62 L588.28,361.61 L588.72,361.60 L589.17,361.60 L589.62,361.59 L590.06,361.58 L590.51,361.58 L590.95,361.57 L591.40,361.56 L591.85,361.55 L592.29,361.55 L592.74,361.54 L593.19,361.53 L593.63,361.53 L594.08,361.52 L594.52,361.51 L594.97,361.51 L595.42,361.50 L595.86,361.49 L596.31,361.49 L596.76,361.48 L597.20,361.48 L597.65,361.47 L598.09,361.46 L598.54,361.46 L598.99,361.45 L599.43,361.45 L599.88,361.44 L600.32,361.43 L600.77,361.43 L601.22,361.42 L601.66,361.42 L602.11,361.41 L602.56,361.41 L603.00,361.40 L603.45,361.39 L603.89,361.39 L604.34,361.38 L604.79,361.38 L605.23,361.37 L605.68,361.36 L606.13,361.36 L606.57,361.35 L607.02,361.35 L607.46,361.34 L607.91,361.34 L608.36,361.33 L608.80,361.32 L609.25,361.32 L609.70,361.31 L610.14,361.31 L610.59,361.30 L611.03,361.29 L611.48,361.29 L611.93,361.28 L612.37,361.28 L612.82,361.27 L613.26,361.26 L613.71,361.26 L614.16,361.25 L614.60,361.25 L615.05,361.24 L615.50,361.23 L615.94,361.23 L616.39,361.22 L616.83,361.22 L617.28,361.21 L617.73,361.20 L618.17,361.20 L618.62,361.19 L619.07,361.18 L619.51,361.18 L619.96,361.17 L620.40,361.17 L620.85,361.16 L621.30,361.15 L621.74,361.15 L622.19,361.14 L622.64,361.14 L623.08,361.13 L623.53,361.12 L623.97,361.12 L624.42,361.11 L624.87,361.11 L625.31,361.10 L625.76,361.09 L626.20,361.09 L626.65,361.08 L627.10,361.07 L627.54,361.07 L627.99,361.06 L628.44,361.06 L628.88,361.05 L629.33,361.04 L629.77,361.04 L630.22,361.03 L630.67,361.03 L631.11,361.02 L631.56,361.01 L632.01,361.01 L632.45,361.00 L632.90,361.00 L633.34,360.99 L633.79,360.98 L634.24,360.98 L634.68,360.97 L635.13,360.96 L635.58,360.96 L636.02,360.95 L636.47,360.95 L636.91,360.94 L637.36,360.93 L637.81,360.93 L638.25,360.92 L638.70,360.92 L639.14,360.91 L639.59,360.90 L640.04,360.90 L640.48,360.89 L640.93,360.89 L641.38,360.88 L641.82,360.87 L642.27,360.87 L642.71,360.86 L643.16,360.86 L643.61,360.85 L644.05,360.84 L644.50,360.84 L644.95,360.83 L645.39,360.83 L645.84,360.82 L646.28,360.81 L646.73,360.81 L647.18,360.80 L647.62,360.80 L648.07,360.79 L648.52,360.79 L648.96,360.78 L649.41,360.77 L649.85,360.77 L650.30,360.76 L650.75,360.76 L651.19,360.75 L651.64,360.74 L652.08,360.74 L652.53,360.73 L652.98,360.73 L653.42,360.72 L653.87,360.72 L654.32,360.71 L654.76,360.70 L655.21,360.70 L655.65,360.69 L656.10,360.69 L656.55,360.68 L656.99,360.68 L657.44,360.67 L657.89,360.67 L658.33,360.66 L658.78,360.65 L659.22,360.65 L659.67,360.64 L660.12,360.64 L660.56,360.63 L661.01,360.63 L661.45,360.62 L661.90,360.62 L662.35,360.61 L662.79,360.61 L663.24,360.60 L663.69,360.59 L664.13,360.59 L664.58,360.58 L665.02,360.58 L665.47,360.57 L665.92,360.57 L666.36,360.56 L666.81,360.56 L667.26,360.55 L667.70,360.55 L668.15,360.54 L668.59,360.54 L669.04,360.53 L669.49,360.53 L669.93,360.52 L670.38,360.52 L670.83,360.51 L671.27,360.51 L671.72,360.50 L672.16,360.50 L672.61,360.49 L673.06,360.49 L673.50,360.48 L673.95,360.48 L674.39,360.47 L674.84,360.47 L675.29,360.46 L675.73,360.46 L676.18,360.45 L676.63,360.45 L677.07,360.44 L677.52,360.44 L677.96,360.44 L678.41,360.43 L678.86,360.43 L679.30,360.42 L679.75,360.42 L680.20,360.41 L680.64,360.41 L681.09,360.40 L681.53,360.40 L681.98,360.40 L682.43,360.39 L682.87,360.39 L683.32,360.38 L683.77,360.38 L684.21,360.37 L684.66,360.37 L685.10,360.37 L685.55,360.36 L686.00,360.36 L686.44,360.35 L686.89,360.35 L687.33,360.35 L687.78,360.34 L688.23,360.34 L688.67,360.33 L689.12,360.33 L689.57,360.33 L690.01,360.32 L690.46,360.32 L690.90,360.32 L691.35,360.31 L691.80,360.31 L692.24,360.30 L692.69,360.30 L693.14,360.30 L693.58,360.29 L694.03,360.29 L694.47,360.29 L694.92,360.28 L695.37,360.28 L695.81,360.28 L696.26,360.27 L696.71,360.27 L697.15,360.27 L697.60,360.26 L698.04,360.26 L698.49,360.26 L698.94,360.25 L699.38,360.25 L699.83,360.25 L700.27,360.24 L700.72,360.24 L701.17,360.24 L701.61,360.24 L702.06,360.23 L702.51,360.23 L702.95,360.23 L703.40,360.22 L703.84,360.22 L704.29,360.22 L704.74,360.21 L705.18,360.21 L705.63,360.21 L706.08,360.20 L706.52,360.20 L706.97,360.20 L707.41,360.19 L707.86,360.19 L708.31,360.19 L708.75,360.18 L709.20,360.18 L709.65,360.18 L710.09,360.18 L710.54,360.17 L710.98,360.17 L711.43,360.17 L711.88,360.16 L712.32,360.16 L712.77,360.16 L713.21,360.15 L713.66,360.15 L714.11,360.15 L714.55,360.15 L715.00,360.14 L715.45,360.14 L715.89,360.14 L716.34,360.13 L716.78,360.13 L717.23,360.13 L717.68,360.12 L718.12,360.12 L718.57,360.12 L719.02,360.12 L719.46,360.11 L719.91,360.11 L720.35,360.11 L720.80,360.10 L721.25,360.10 L721.69,360.10 L722.14,360.09 L722.59,360.09 L723.03,360.09 L723.48,360.09 L723.92,360.08 L724.37,360.08 L724.82,360.08 L725.26,360.07 L725.71,360.07 L726.15,360.07 L726.60,360.07 L727.05,360.06 L727.49,360.06 L727.94,360.06 L728.39,360.05 L728.83,360.05 L729.28,360.05 L729.72,360.05 L730.17,360.04 L730.62,360.04 L731.06,360.04 L731.51,360.04 L731.96,360.03 L732.40,360.03 L732.85,360.03 L733.29,360.03 L733.74,360.02 L734.19,360.02 L734.63,360.02 L735.08,360.01 L735.53,360.01 L735.97,360.01 L736.42,360.01 L736.86,360.00 L737.31,360.00 L737.76,360.00 L738.20,360.00 L738.65,359.99 L739.09,359.99 L739.54,359.99 L739.99,359.99 L740.43,359.98 L740.88,359.98 L741.33,359.98 L741.77,359.98 L742.22,359.97 L742.66,359.97 L743.11,359.97 L743.56,359.97 L744.00,359.96 L744.45,359.96 L744.90,359.96 L745.34,359.96 L745.79,359.95 L746.23,359.95 L746.68,359.95 L747.13,359.95 L747.57,359.95 L748.02,359.94 L748.46,359.94 L748.91,359.94 L749.36,359.94 L749.80,359.93 L750.25,359.93 L750.70,359.93 L751.14,359.93 L751.59,359.93 L752.03,359.92 L752.48,359.92 L752.93,359.92 L753.37,359.92 L753.82,359.92 L754.27,359.91 L754.71,359.91 L755.16,359.91 L755.60,359.91 L756.05,359.90 L756.50,359.90 L756.94,359.90 L757.39,359.90 L757.84,359.90 L758.28,359.89 L758.73,359.89 L759.17,359.89 L759.62,359.89 L760.07,359.89 L760.51,359.89 L760.96,359.88 L761.40,359.88 L761.85,359.88 L762.30,359.88 L762.74,359.88 L763.19,359.87 L763.64,359.87 L764.08,359.87 L764.53,359.87 L764.97,359.87 L765.42,359.87 L765.87,359.86 L766.31,359.86 L766.76,359.86 L767.21,359.86 L767.65,359.86 L768.10,359.86 L768.54,359.85 L768.99,359.85 L769.44,359.85 L769.88,359.85 L770.33,359.85 L770.78,359.85 L771.22,359.85 L771.67,359.84 L772.11,359.84 L772.56,359.84 L773.01,359.84 L773.45,359.84 L773.90,359.84 L774.34,359.84 L774.79,359.83 L775.24,359.83 L775.68,359.83 L776.13,359.83 L776.58,359.83 L777.02,359.83 L777.47,359.83 L777.91,359.83 L778.36,359.82 L778.81,359.82 L779.25,359.82 L779.70,359.82 L780.15,359.82 L780.59,359.82 L781.04,359.82 L781.48,359.82 L781.93,359.82 L782.38,359.81 L782.82,359.81 L783.27,359.81 L783.72,359.81 L784.16,359.81 L784.61,359.81 L785.05,359.81 L785.50,359.81" stroke="#bf180a" stroke-width="1.8"/>
<path d="M250.50,361.44 L250.95,359.31 L251.39,357.16 L251.84,355.03 L252.28,352.91 L252.73,350.84 L253.18,348.83 L253.62,346.90 L254.07,345.06 L254.52,343.34 L254.96,341.75 L255.41,340.31 L255.85,339.03 L256.30,337.94 L256.75,336.91 L257.19,335.89 L257.64,334.88 L258.09,333.88 L258.53,332.90 L258.98,331.92 L259.42,330.96 L259.87,330.01 L260.32,329.08 L260.76,328.17 L261.21,327.28 L261.66,326.40 L262.10,325.54 L262.55,324.71 L262.99,323.90 L263.44,323.11 L263.89,322.35 L264.33,321.61 L264.78,320.90 L265.22,320.22 L265.67,319.56 L266.12,318.94 L266.56,318.35 L267.01,317.79 L267.46,317.26 L267.90,316.77 L268.35,316.31 L268.79,315.89 L269.24,315.51 L269.69,315.17 L270.13,314.87 L270.58,314.60 L271.03,314.38 L271.47,314.21 L271.92,314.07 L272.36,313.99 L272.81,313.95 L273.26,313.95 L273.70,313.97 L274.15,314.01 L274.60,314.06 L275.04,314.13 L275.49,314.22 L275.93,314.32 L276.38,314.44 L276.83,314.58 L277.27,314.72 L277.72,314.88 L278.16,315.05 L278.61,315.24 L279.06,315.44 L279.50,315.65 L279.95,315.86 L280.40,316.09 L280.84,316.33 L281.29,316.58 L281.73,316.84 L282.18,317.10 L282.63,317.38 L283.07,317.65 L283.52,317.94 L283.97,318.23 L284.41,318.53 L284.86,318.83 L285.30,319.14 L285.75,319.45 L286.20,319.77 L286.64,320.09 L287.09,320.41 L287.54,320.73 L287.98,321.05 L288.43,321.38 L288.87,321.70 L289.32,322.03 L289.77,322.35 L290.21,322.69 L290.66,323.07 L291.10,323.47 L291.55,323.90 L292.00,324.37 L292.44,324.85 L292.89,325.36 L293.34,325.89 L293.78,326.45 L294.23,327.02 L294.67,327.61 L295.12,328.21 L295.57,328.83 L296.01,329.46 L296.46,330.10 L296.91,330.75 L297.35,331.41 L297.80,332.07 L298.24,332.74 L298.69,333.40 L299.14,334.07 L299.58,334.74 L300.03,335.40 L300.47,336.06 L300.92,336.72 L301.37,337.36 L301.81,338.00 L302.26,338.62 L302.71,339.23 L303.15,339.83 L303.60,340.41 L304.04,340.97 L304.49,341.51 L304.94,342.03 L305.38,342.53 L305.83,343.02 L306.28,343.50 L306.72,343.98 L307.17,344.46 L307.61,344.94 L308.06,345.42 L308.51,345.89 L308.95,346.37 L309.40,346.84 L309.85,347.31 L310.29,347.77 L310.74,348.23 L311.18,348.69 L311.63,349.14 L312.08,349.59 L312.52,350.03 L312.97,350.47 L313.41,350.90 L313.86,351.33 L314.31,351.75 L314.75,352.17 L315.20,352.58 L315.65,352.98 L316.09,353.38 L316.54,353.76 L316.98,354.14 L317.43,354.52 L317.88,354.88 L318.32,355.23 L318.77,355.58 L319.22,355.92 L319.66,356.25 L320.11,356.56 L320.55,356.87 L321.00,357.17 L321.45,357.46 L321.89,357.75 L322.34,358.04 L322.79,358.33 L323.23,358.63 L323.68,358.92 L324.12,359.21 L324.57,359.50 L325.02,359.79 L325.46,360.07 L325.91,360.36 L326.35,360.64 L326.80,360.92 L327.25,361.19 L327.69,361.47 L328.14,361.74 L328.59,362.00 L329.03,362.26 L329.48,362.51 L329.92,362.76 L330.37,363.01 L330.82,363.24 L331.26,363.47 L331.71,363.70 L332.16,363.91 L332.60,364.12 L333.05,364.33 L333.49,364.52 L333.94,364.70 L334.39,364.88 L334.83,365.04 L335.28,365.20 L335.73,365.35 L336.17,365.48 L336.62,365.61 L337.06,365.72 L337.51,365.82 L337.96,365.91 L338.40,365.99 L338.85,366.06 L339.29,366.11 L339.74,366.16 L340.19,366.21 L340.63,366.25 L341.08,366.29 L341.53,366.33 L341.97,366.37 L342.42,366.41 L342.86,366.44 L343.31,366.48 L343.76,366.51 L344.20,366.54 L344.65,366.56 L345.10,366.59 L345.54,366.62 L345.99,366.64 L346.43,366.67 L346.88,366.69 L347.33,366.71 L347.77,366.74 L348.22,366.76 L348.67,366.78 L349.11,366.80 L349.56,366.82 L350.00,366.84 L350.45,366.86 L350.90,366.89 L351.34,366.91 L351.79,366.93 L352.23,366.95 L352.68,366.97 L353.13,367.00 L353.57,367.02 L354.02,367.05 L354.47,367.07 L354.91,367.10 L355.36,367.13 L355.80,367.16 L356.25,367.19 L356.70,367.22 L357.14,367.26 L357.59,367.29 L358.04,367.33 L358.48,367.38 L358.93,367.42 L359.37,367.47 L359.82,367.51 L360.27,367.56 L360.71,367.62 L361.16,367.67 L361.61,367.73 L362.05,367.78 L362.50,367.84 L362.94,367.90 L363.39,367.96 L363.84,368.02 L364.28,368.08 L364.73,368.14 L365.17,368.21 L365.62,368.27 L366.07,368.33 L366.51,368.40 L366.96,368.46 L367.41,368.52 L367.85,368.58 L368.30,368.64 L368.74,368.70 L369.19,368.76 L369.64,368.82 L370.08,368.88 L370.53,368.94 L370.98,368.99 L371.42,369.05 L371.87,369.10 L372.31,369.15 L372.76,369.20 L373.21,369.24 L373.65,369.29 L374.10,369.33 L374.55,369.37 L374.99,369.40 L375.44,369.43 L375.88,369.47 L376.33,369.49 L376.78,369.52 L377.22,369.54 L377.67,369.55 L378.11,369.57 L378.56,369.58 L379.01,369.58 L379.45,369.59 L379.90,369.58 L380.35,369.57 L380.79,369.55 L381.24,369.52 L381.68,369.49 L382.13,369.45 L382.58,369.40 L383.02,369.35 L383.47,369.30 L383.92,369.23 L384.36,369.17 L384.81,369.10 L385.25,369.03 L385.70,368.95 L386.15,368.87 L386.59,368.79 L387.04,368.70 L387.48,368.62 L387.93,368.53 L388.38,368.44 L388.82,368.35 L389.27,368.26 L389.72,368.17 L390.16,368.08 L390.61,367.99 L391.05,367.91 L391.50,367.82 L391.95,367.74 L392.39,367.66 L392.84,367.58 L393.29,367.50 L393.73,367.43 L394.18,367.36 L394.62,367.30 L395.07,367.24 L395.52,367.18 L395.96,367.13 L396.41,367.07 L396.86,367.01 L397.30,366.95 L397.75,366.89 L398.19,366.83 L398.64,366.77 L399.09,366.71 L399.53,366.65 L399.98,366.59 L400.42,366.53 L400.87,366.47 L401.32,366.42 L401.76,366.36 L402.21,366.30 L402.66,366.24 L403.10,366.18 L403.55,366.12 L403.99,366.06 L404.44,366.01 L404.89,365.95 L405.33,365.89 L405.78,365.84 L406.23,365.78 L406.67,365.73 L407.12,365.67 L407.56,365.62 L408.01,365.56 L408.46,365.51 L408.90,365.46 L409.35,365.41 L409.80,365.36 L410.24,365.30 L410.69,365.26 L411.13,365.21 L411.58,365.16 L412.03,365.11 L412.47,365.07 L412.92,365.02 L413.36,364.98 L413.81,364.93 L414.26,364.89 L414.70,364.85 L415.15,364.81 L415.60,364.77 L416.04,364.74 L416.49,364.70 L416.93,364.66 L417.38,364.63 L417.83,364.60 L418.27,364.57 L418.72,364.54 L419.17,364.51 L419.61,364.48 L420.06,364.46 L420.50,364.43 L420.95,364.41 L421.40,364.39 L421.84,364.37 L422.29,364.34 L422.74,364.33 L423.18,364.31 L423.63,364.29 L424.07,364.27 L424.52,364.25 L424.97,364.24 L425.41,364.22 L425.86,364.21 L426.30,364.19 L426.75,364.18 L427.20,364.16 L427.64,364.15 L428.09,364.14 L428.54,364.12 L428.98,364.11 L429.43,364.10 L429.87,364.08 L430.32,364.07 L430.77,364.05 L431.21,364.04 L431.66,364.02 L432.11,364.01 L432.55,363.99 L433.00,363.98 L433.44,363.96 L433.89,363.95 L434.34,363.93 L434.78,363.91 L435.23,363.89 L435.68,363.87 L436.12,363.85 L436.57,363.83 L437.01,363.81 L437.46,363.78 L437.91,363.76 L438.35,363.73 L438.80,363.70 L439.24,363.67 L439.69,363.64 L440.14,363.60 L440.58,363.57 L441.03,363.53 L441.48,363.49 L441.92,363.45 L442.37,363.41 L442.81,363.37 L443.26,363.32 L443.71,363.27 L444.15,363.23 L444.60,363.18 L445.05,363.13 L445.49,363.07 L445.94,363.02 L446.38,362.97 L446.83,362.91 L447.28,362.86 L447.72,362.80 L448.17,362.74 L448.62,362.69 L449.06,362.63 L449.51,362.57 L449.95,362.51 L450.40,362.45 L450.85,362.39 L451.29,362.32 L451.74,362.26 L452.18,362.20 L452.63,362.14 L453.08,362.07 L453.52,362.01 L453.97,361.95 L454.42,361.89 L454.86,361.82 L455.31,361.76 L455.75,361.70 L456.20,361.63 L456.65,361.57 L457.09,361.51 L457.54,361.44 L457.99,361.38 L458.43,361.32 L458.88,361.26 L459.32,361.20 L459.77,361.14 L460.22,361.08 L460.66,361.02 L461.11,360.96 L461.56,360.90 L462.00,360.85 L462.45,360.79 L462.89,360.74 L463.34,360.68 L463.79,360.63 L464.23,360.58 L464.68,360.53 L465.12,360.48 L465.57,360.43 L466.02,360.38 L466.46,360.34 L466.91,360.29 L467.36,360.25 L467.80,360.21 L468.25,360.17 L468.69,360.13 L469.14,360.09 L469.59,360.06 L470.03,360.03 L470.48,359.99 L470.93,359.96 L471.37,359.93 L471.82,359.89 L472.26,359.86 L472.71,359.83 L473.16,359.79 L473.60,359.76 L474.05,359.73 L474.49,359.69 L474.94,359.66 L475.39,359.63 L475.83,359.59 L476.28,359.56 L476.73,359.53 L477.17,359.49 L477.62,359.46 L478.06,359.43 L478.51,359.39 L478.96,359.36 L479.40,359.33 L479.85,359.30 L480.30,359.26 L480.74,359.23 L481.19,359.20 L481.63,359.17 L482.08,359.14 L482.53,359.11 L482.97,359.08 L483.42,359.05 L483.87,359.02 L484.31,358.99 L484.76,358.96 L485.20,358.94 L485.65,358.91 L486.10,358.88 L486.54,358.86 L486.99,358.83 L487.43,358.80 L487.88,358.78 L488.33,358.76 L488.77,358.73 L489.22,358.71 L489.67,358.69 L490.11,358.67 L490.56,358.65 L491.00,358.63 L491.45,358.61 L491.90,358.59 L492.34,358.57 L492.79,358.55 L493.24,358.54 L493.68,358.52 L494.13,358.51 L494.57,358.50 L495.02,358.48 L495.47,358.47 L495.91,358.46 L496.36,358.45 L496.81,358.44 L497.25,358.43 L497.70,358.43 L498.14,358.42 L498.59,358.42 L499.04,358.41 L499.48,358.41 L499.93,358.41 L500.37,358.41 L500.82,358.41 L501.27,358.42 L501.71,358.43 L502.16,358.44 L502.61,358.45 L503.05,358.47 L503.50,358.49 L503.94,358.51 L504.39,358.53 L504.84,358.56 L505.28,358.59 L505.73,358.62 L506.18,358.65 L506.62,358.68 L507.07,358.72 L507.51,358.75 L507.96,358.79 L508.41,358.83 L508.85,358.87 L509.30,358.92 L509.75,358.96 L510.19,359.01 L510.64,359.05 L511.08,359.10 L511.53,359.15 L511.98,359.20 L512.42,359.24 L512.87,359.29 L513.31,359.34 L513.76,359.40 L514.21,359.45 L514.65,359.50 L515.10,359.55 L515.55,359.60 L515.99,359.65 L516.44,359.70 L516.88,359.75 L517.33,359.80 L517.78,359.85 L518.22,359.90 L518.67,359.95 L519.12,360.00 L519.56,360.05 L520.01,360.10 L520.45,360.14 L520.90,360.19 L521.35,360.23 L521.79,360.27 L522.24,360.32 L522.69,360.36 L523.13,360.39 L523.58,360.43 L524.02,360.47 L524.47,360.50 L524.92,360.53 L525.36,360.56 L525.81,360.59 L526.25,360.62 L526.70,360.64 L527.15,360.66 L527.59,360.68 L528.04,360.70 L528.49,360.71 L528.93,360.72 L529.38,360.73 L529.82,360.74 L530.27,360.74 L530.72,360.74 L531.16,360.74 L531.61,360.73 L532.06,360.73 L532.50,360.72 L532.95,360.71 L533.39,360.70 L533.84,360.69 L534.29,360.68 L534.73,360.66 L535.18,360.64 L535.63,360.63 L536.07,360.61 L536.52,360.59 L536.96,360.57 L537.41,360.54 L537.86,360.52 L538.30,360.50 L538.75,360.47 L539.19,360.44 L539.64,360.42 L540.09,360.39 L540.53,360.36 L540.98,360.33 L541.43,360.30 L541.87,360.27 L542.32,360.24 L542.76,360.21 L543.21,360.17 L543.66,360.14 L544.10,360.11 L544.55,360.07 L545.00,360.04 L545.44,360.01 L545.89,359.97 L546.33,359.94 L546.78,359.91 L547.23,359.87 L547.67,359.84 L548.12,359.80 L548.57,359.77 L549.01,359.74 L549.46,359.70 L549.90,359.67 L550.35,359.64 L550.80,359.61 L551.24,359.58 L551.69,359.55 L552.13,359.51 L552.58,359.49 L553.03,359.46 L553.47,359.43 L553.92,359.40 L554.37,359.38 L554.81,359.35 L555.26,359.33 L555.70,359.30 L556.15,359.28 L556.60,359.26 L557.04,359.24 L557.49,359.22 L557.94,359.20 L558.38,359.19 L558.83,359.17 L559.27,359.16 L559.72,359.15 L560.17,359.14 L560.61,359.13 L561.06,359.12 L561.51,359.11 L561.95,359.11 L562.40,359.11 L562.84,359.11 L563.29,359.11 L563.74,359.12 L564.18,359.12 L564.63,359.13 L565.07,359.14 L565.52,359.15 L565.97,359.16 L566.41,359.18 L566.86,359.19 L567.31,359.21 L567.75,359.23 L568.20,359.25 L568.64,359.27 L569.09,359.30 L569.54,359.32 L569.98,359.35 L570.43,359.37 L570.88,359.40 L571.32,359.43 L571.77,359.46 L572.21,359.49 L572.66,359.52 L573.11,359.56 L573.55,359.59 L574.00,359.63 L574.44,359.66 L574.89,359.70 L575.34,359.74 L575.78,359.77 L576.23,359.81 L576.68,359.85 L577.12,359.89 L577.57,359.93 L578.01,359.97 L578.46,360.01 L578.91,360.05 L579.35,360.09 L579.80,360.13 L580.25,360.17 L580.69,360.22 L581.14,360.26 L581.58,360.30 L582.03,360.34 L582.48,360.38 L582.92,360.42 L583.37,360.46 L583.82,360.51 L584.26,360.55 L584.71,360.59 L585.15,360.63 L585.60,360.67 L586.05,360.71 L586.49,360.74 L586.94,360.78 L587.38,360.82 L587.83,360.86 L588.28,360.89 L588.72,360.93 L589.17,360.96 L589.62,361.00 L590.06,361.03 L590.51,361.06 L590.95,361.09 L591.40,361.12 L591.85,361.15 L592.29,361.18 L592.74,361.21 L593.19,361.23 L593.63,361.26 L594.08,361.28 L594.52,361.30 L594.97,361.32 L595.42,361.34 L595.86,361.36 L596.31,361.37 L596.76,361.39 L597.20,361.40 L597.65,361.41 L598.09,361.42 L598.54,361.43 L598.99,361.43 L599.43,361.44 L599.88,361.44 L600.32,361.44 L600.77,361.44 L601.22,361.43 L601.66,361.43 L602.11,361.42 L602.56,361.41 L603.00,361.40 L603.45,361.39 L603.89,361.37 L604.34,361.36 L604.79,361.34 L605.23,361.32 L605.68,361.30 L606.13,361.28 L606.57,361.26 L607.02,361.24 L607.46,361.21 L607.91,361.19 L608.36,361.16 L608.80,361.13 L609.25,361.10 L609.70,361.07 L610.14,361.04 L610.59,361.01 L611.03,360.97 L611.48,360.94 L611.93,360.90 L612.37,360.87 L612.82,360.83 L613.26,360.79 L613.71,360.75 L614.16,360.71 L614.60,360.67 L615.05,360.63 L615.50,360.59 L615.94,360.55 L616.39,360.50 L616.83,360.46 L617.28,360.41 L617.73,360.37 L618.17,360.32 L618.62,360.28 L619.07,360.23 L619.51,360.19 L619.96,360.14 L620.40,360.09 L620.85,360.04 L621.30,360.00 L621.74,359.95 L622.19,359.90 L622.64,359.85 L623.08,359.80 L623.53,359.75 L623.97,359.71 L624.42,359.66 L624.87,359.61 L625.31,359.56 L625.76,359.51 L626.20,359.46 L626.65,359.42 L627.10,359.37 L627.54,359.32 L627.99,359.27 L628.44,359.23 L628.88,359.18 L629.33,359.13 L629.77,359.09 L630.22,359.04 L630.67,359.00 L631.11,358.95 L631.56,358.91 L632.01,358.86 L632.45,358.82 L632.90,358.78 L633.34,358.74 L633.79,358.69 L634.24,358.65 L634.68,358.61 L635.13,358.58 L635.58,358.54 L636.02,358.50 L636.47,358.46 L636.91,358.43 L637.36,358.40 L637.81,358.36 L638.25,358.33 L638.70,358.30 L639.14,358.27 L639.59,358.24 L640.04,358.21 L640.48,358.18 L640.93,358.16 L641.38,358.13 L641.82,358.11 L642.27,358.09 L642.71,358.07 L643.16,358.05 L643.61,358.03 L644.05,358.02 L644.50,358.00 L644.95,357.99 L645.39,357.98 L645.84,357.97 L646.28,357.96 L646.73,357.95 L647.18,357.95 L647.62,357.95 L648.07,357.95 L648.52,357.95 L648.96,357.95 L649.41,357.95 L649.85,357.95 L650.30,357.95 L650.75,357.95 L651.19,357.95 L651.64,357.95 L652.08,357.95 L652.53,357.95 L652.98,357.95 L653.42,357.95 L653.87,357.95 L654.32,357.95 L654.76,357.95 L655.21,357.95 L655.65,357.95 L656.10,357.95 L656.55,357.95 L656.99,357.95 L657.44,357.95 L657.89,357.95 L658.33,357.95 L658.78,357.95 L659.22,357.95 L659.67,357.95 L660.12,357.95 L660.56,357.95 L661.01,357.95 L661.45,357.95 L661.90,357.95 L662.35,357.95 L662.79,357.95 L663.24,357.95 L663.69,357.95 L664.13,357.95 L664.58,357.95 L665.02,357.95 L665.47,357.95 L665.92,357.95 L666.36,357.95 L666.81,357.95 L667.26,357.95 L667.70,357.95 L668.15,357.95 L668.59,357.95 L669.04,357.95 L669.49,357.95 L669.93,357.95 L670.38,357.95 L670.83,357.95 L671.27,357.95 L671.72,357.95 L672.16,357.95 L672.61,357.95 L673.06,357.95 L673.50,357.95 L673.95,357.95 L674.39,357.95 L674.84,357.95 L675.29,357.95 L675.73,357.95 L676.18,357.95 L676.63,357.95 L677.07,357.95 L677.52,357.95 L677.96,357.95 L678.41,357.95 L678.86,357.95 L679.30,357.95 L679.75,357.97 L680.20,357.99 L680.64,358.01 L681.09,358.04 L681.53,358.07 L681.98,358.11 L682.43,358.16 L682.87,358.21 L683.32,358.26 L683.77,358.32 L684.21,358.38 L684.66,358.44 L685.10,358.51 L685.55,358.59 L686.00,358.66 L686.44,358.74 L686.89,358.82 L687.33,358.91 L687.78,359.00 L688.23,359.09 L688.67,359.19 L689.12,359.29 L689.57,359.39 L690.01,359.49 L690.46,359.59 L690.90,359.70 L691.35,359.81 L691.80,359.91 L692.24,360.03 L692.69,360.14 L693.14,360.25 L693.58,360.37 L694.03,360.48 L694.47,360.60 L694.92,360.72 L695.37,360.83 L695.81,360.95 L696.26,361.07 L696.71,361.19 L697.15,361.30 L697.60,361.42 L698.04,361.54 L698.49,361.66 L698.94,361.77 L699.38,361.89 L699.83,362.00 L700.27,362.11 L700.72,362.22 L701.17,362.33 L701.61,362.44 L702.06,362.55 L702.51,362.65 L702.95,362.76 L703.40,362.86 L703.84,362.96 L704.29,363.05 L704.74,363.15 L705.18,363.24 L705.63,363.32 L706.08,363.41 L706.52,363.49 L706.97,363.57 L707.41,363.64 L707.86,363.71 L708.31,363.78 L708.75,363.84 L709.20,363.90 L709.65,363.95 L710.09,364.00 L710.54,364.05 L710.98,364.09 L711.43,364.13 L711.88,364.16 L712.32,364.18 L712.77,364.20 L713.21,364.22 L713.66,364.23 L714.11,364.23 L714.55,364.23 L715.00,364.23 L715.45,364.23 L715.89,364.23 L716.34,364.23 L716.78,364.23 L717.23,364.23 L717.68,364.23 L718.12,364.23 L718.57,364.23 L719.02,364.23 L719.46,364.23 L719.91,364.23 L720.35,364.23 L720.80,364.23 L721.25,364.23 L721.69,364.23 L722.14,364.23 L722.59,364.23 L723.03,364.23 L723.48,364.23 L723.92,364.23 L724.37,364.23 L724.82,364.23 L725.26,364.23 L725.71,364.23 L726.15,364.23 L726.60,364.23 L727.05,364.23 L727.49,364.23 L727.94,364.23 L728.39,364.23 L728.83,364.23 L729.28,364.23 L729.72,364.23 L730.17,364.23 L730.62,364.23 L731.06,364.23 L731.51,364.23 L731.96,364.23 L732.40,364.23 L732.85,364.23 L733.29,364.23 L733.74,364.23 L734.19,364.23 L734.63,364.23 L735.08,364.23 L735.53,364.23 L735.97,364.23 L736.42,364.23 L736.86,364.23 L737.31,364.23 L737.76,364.23 L738.20,364.23 L738.65,364.23 L739.09,364.23 L739.54,364.23 L739.99,364.23 L740.43,364.23 L740.88,364.23 L741.33,364.23 L741.77,364.23 L742.22,364.23 L742.66,364.23 L743.11,364.23 L743.56,364.23 L744.00,364.23 L744.45,364.23 L744.90,364.23 L745.34,364.23 L745.79,364.23 L746.23,364.23 L746.68,364.23 L747.13,364.23 L747.57,364.23 L748.02,364.23 L748.46,364.23 L748.91,364.23 L749.36,364.23 L749.80,364.23 L750.25,364.23 L750.70,364.23 L751.14,364.23 L751.59,364.23 L752.03,364.23 L752.48,364.23 L752.93,364.23 L753.37,364.23 L753.82,364.23 L754.27,364.23 L754.71,364.23 L755.16,364.23 L755.60,364.23 L756.05,364.23 L756.50,364.23 L756.94,364.23 L757.39,364.23 L757.84,364.23 L758.28,364.23 L758.73,364.23 L759.17,364.23 L759.62,364.23 L760.07,364.23 L760.51,364.23 L760.96,364.23 L761.40,364.23 L761.85,364.23 L762.30,364.23 L762.74,364.23 L763.19,364.23 L763.64,364.23 L764.08,364.23 L764.53,364.23 L764.97,364.23 L765.42,364.23 L765.87,364.23 L766.31,364.23 L766.76,364.23 L767.21,364.23 L767.65,364.23 L768.10,364.23 L768.54,364.23 L768.99,364.23 L769.44,364.23 L769.88,364.23 L770.33,364.23 L770.78,364.23 L771.22,364.23 L771.67,364.23 L772.11,364.23 L772.56,364.23 L773.01,364.23 L773.45,364.23 L773.90,364.23 L774.34,364.23 L774.79,364.23 L775.24,364.23 L775.68,364.23 L776.13,364.23 L776.58,364.23 L777.02,364.23 L777.47,364.23 L777.91,364.23 L778.36,364.23 L778.81,364.23 L779.25,364.23 L779.70,364.23 L780.15,364.23 L780.59,364.23 L781.04,364.23 L781.48,364.23 L781.93,364.23 L782.38,364.23 L782.82,364.23 L783.27,364.23 L783.72,364.23 L784.16,364.23 L784.61,364.23 L785.05,364.23 L785.50,364.23" stroke="#ff00ff" stroke-width="2"/>
<path d="M250.50,177.14 L250.72,175.10 L250.95,170.89 L251.17,170.03 L251.39,170.32 L251.62,166.86 L251.84,164.86 L252.06,164.73 L252.28,160.83 L252.51,162.57 L252.73,160.21 L252.95,158.87 L253.18,158.61 L253.40,157.04 L253.62,155.29 L253.85,153.16 L254.07,155.68 L254.29,154.18 L254.51,154.64 L254.74,157.09 L254.96,158.04 L255.18,152.01 L255.41,153.05 L255.63,151.33 L255.85,148.13 L256.08,149.87 L256.30,151.06 L256.52,150.11 L256.74,153.14 L256.97,148.68 L257.19,148.44 L257.41,148.27 L257.64,144.87 L257.86,143.79 L258.08,148.33 L258.31,147.96 L258.53,150.62 L258.75,148.84 L258.97,148.37 L259.20,149.64 L259.42,145.92 L259.64,146.56 L259.87,146.98 L260.09,147.12 L260.31,149.34 L260.54,147.75 L260.76,146.98 L260.98,150.75 L261.20,148.28 L261.43,151.70 L261.65,152.48 L261.87,154.92 L262.10,153.17 L262.32,156.13 L262.54,154.85 L262.77,159.15 L262.99,159.42 L263.21,161.20 L263.43,160.44 L263.66,162.20 L263.88,162.46 L264.10,160.55 L264.33,161.80 L264.55,164.61 L264.77,165.02 L265.00,169.69 L265.22,167.41 L265.44,171.00 L265.66,167.82 L265.89,169.89 L266.11,170.71 L266.33,169.92 L266.56,171.45 L266.78,171.92 L267.00,175.69 L267.23,174.86 L267.45,177.24 L267.67,178.13 L267.89,179.79 L268.12,178.95 L268.34,184.69 L268.56,186.03 L268.79,186.69 L269.01,186.04 L269.23,185.64 L269.46,186.04 L269.68,187.37 L269.90,185.61 L270.12,185.55 L270.35,190.00 L270.57,189.00 L270.79,192.21 L271.02,192.26 L271.24,192.47 L271.46,193.24 L271.69,195.25 L271.91,197.03 L272.13,200.78 L272.35,201.09 L272.58,203.94 L272.80,203.17 L273.02,203.66 L273.25,203.33 L273.47,206.06 L273.69,208.96 L273.92,207.75 L274.14,210.26 L274.36,208.67 L274.59,210.73 L274.81,210.63 L275.03,208.11 L275.25,211.05 L275.48,212.24 L275.70,213.36 L275.92,213.83 L276.15,216.64 L276.37,215.76 L276.59,215.47 L276.82,218.59 L277.04,218.72 L277.26,217.95 L277.48,218.24 L277.71,218.84 L277.93,219.37 L278.15,220.76 L278.38,224.95 L278.60,225.32 L278.82,227.24 L279.05,228.78 L279.27,228.45 L279.49,231.02 L279.71,231.28 L279.94,233.08 L280.16,236.87 L280.38,236.52 L280.61,237.44 L280.83,236.27 L281.05,239.26 L281.28,239.36 L281.50,238.83 L281.72,240.76 L281.94,240.97 L282.17,243.38 L282.39,244.56 L282.61,241.91 L282.84,246.25 L283.06,248.68 L283.28,250.80 L283.51,253.48 L283.73,256.70 L283.95,257.25 L284.17,256.79 L284.40,261.48 L284.62,260.80 L284.84,260.51 L285.07,261.14 L285.29,262.86 L285.51,268.80 L285.74,268.22 L285.96,267.34 L286.18,271.74 L286.40,270.12 L286.63,273.33 L286.85,272.12 L287.07,272.50 L287.30,275.17 L287.52,278.83 L287.74,280.37 L287.97,280.93 L288.19,281.05 L288.41,285.29 L288.63,284.04 L288.86,285.67 L289.08,286.78 L289.30,285.43 L289.53,288.10 L289.75,288.93 L289.97,288.37 L290.20,290.60 L290.42,289.90 L290.64,291.52 L290.86,293.66 L291.09,293.46 L291.31,293.30 L291.53,296.99 L291.76,297.21 L291.98,302.97 L292.20,301.90 L292.43,300.05 L292.65,300.71 L292.87,301.81 L293.09,302.15 L293.32,302.38 L293.54,304.50 L293.76,306.10 L293.99,306.76 L294.21,306.81 L294.43,308.61 L294.66,306.91 L294.88,307.33 L295.10,307.52 L295.32,310.49 L295.55,314.41 L295.77,313.66 L295.99,313.00 L296.22,313.87 L296.44,313.53 L296.66,315.23 L296.89,317.12 L297.11,317.81 L297.33,322.88 L297.56,320.64 L297.78,321.32 L298.00,321.48 L298.22,326.12 L298.45,327.32 L298.67,324.85 L298.89,327.97 L299.12,328.94 L299.34,328.56 L299.56,327.71 L299.79,330.93 L300.01,330.70 L300.23,331.36 L300.45,332.48 L300.68,336.87 L300.90,333.94 L301.12,336.22 L301.35,336.93 L301.57,337.01 L301.79,338.36 L302.02,335.28 L302.24,338.45 L302.46,337.56 L302.68,340.14 L302.91,338.63 L303.13,337.66 L303.35,338.28 L303.58,342.76 L303.80,342.24 L304.02,343.01 L304.25,347.65 L304.47,347.13 L304.69,345.43 L304.91,345.03 L305.14,346.60 L305.36,346.31 L305.58,346.91 L305.81,349.08 L306.03,348.13 L306.25,348.46 L306.48,347.68 L306.70,348.44 L306.92,349.13 L307.14,348.59 L307.37,346.62 L307.59,350.63 L307.81,351.86 L308.04,353.79 L308.26,351.06 L308.48,351.20 L308.71,355.10 L308.93,355.32 L309.15,355.95 L309.37,354.47 L309.60,355.42 L309.82,354.20 L310.04,357.33 L310.27,354.59 L310.49,356.65 L310.71,355.19 L310.94,355.77 L311.16,356.30 L311.38,359.36 L311.60,359.82 L311.83,360.49 L312.05,361.94 L312.27,359.95 L312.50,357.63 L312.72,357.53 L312.94,361.69 L313.17,359.11 L313.39,361.10 L313.61,362.47 L313.83,363.13 L314.06,361.13 L314.28,361.64 L314.50,364.90 L314.73,366.36 L314.95,365.80 L315.17,363.74 L315.40,363.53 L315.62,366.61 L315.84,366.66 L316.06,364.92 L316.29,367.86 L316.51,367.74 L316.73,367.49 L316.96,368.33 L317.18,367.94 L317.40,368.70 L317.63,369.96 L317.85,369.99 L318.07,365.96 L318.29,370.17 L318.52,367.18 L318.74,366.87 L318.96,370.63 L319.19,372.39 L319.41,371.83 L319.63,373.21 L319.86,373.29 L320.08,373.79 L320.30,371.73 L320.53,375.84 L320.75,372.40 L320.97,376.87 L321.19,372.83 L321.42,375.15 L321.64,372.45 L321.86,375.16 L322.09,373.41 L322.31,373.53 L322.53,375.13 L322.76,375.29 L322.98,378.68 L323.20,377.55 L323.42,376.86 L323.65,380.20 L323.87,376.81 L324.09,378.39 L324.32,378.14 L324.54,377.01 L324.76,374.41 L324.99,377.45 L325.21,377.33 L325.43,377.67 L325.65,378.02 L325.88,375.67 L326.10,375.92 L326.32,374.19 L326.55,375.18 L326.77,377.42 L326.99,378.10 L327.22,380.56 L327.44,382.03 L327.66,382.06 L327.88,382.51 L328.11,384.93 L328.33,384.42 L328.55,381.75 L328.78,380.72 L329.00,384.59 L329.22,384.34 L329.45,380.83 L329.67,382.10 L329.89,382.93 L330.11,382.56 L330.34,382.53 L330.56,386.12 L330.78,382.09 L331.01,382.10 L331.23,384.89 L331.45,385.25 L331.68,386.68 L331.90,385.33 L332.12,386.62 L332.34,384.19 L332.57,381.46 L332.79,382.50 L333.01,380.55 L333.24,383.37 L333.46,380.35 L333.68,384.54 L333.91,384.99 L334.13,383.38 L334.35,385.67 L334.57,386.33 L334.80,386.01 L335.02,382.51 L335.24,386.26 L335.47,386.68 L335.69,383.32 L335.91,384.54 L336.14,386.57 L336.36,387.21 L336.58,383.76 L336.80,383.89 L337.03,384.48 L337.25,385.25 L337.47,384.90 L337.70,381.68 L337.92,382.34 L338.14,383.17 L338.37,382.63 L338.59,380.14 L338.81,379.51 L339.03,379.87 L339.26,379.50 L339.48,382.13 L339.70,382.61 L339.93,383.91 L340.15,383.48 L340.37,382.77 L340.60,378.04 L340.82,379.20 L341.04,377.72 L341.26,375.01 L341.49,376.73 L341.71,377.41 L341.93,374.66 L342.16,375.22 L342.38,379.00 L342.60,380.44 L342.83,379.80 L343.05,379.59 L343.27,380.11 L343.49,378.16 L343.72,377.32 L343.94,376.64 L344.16,379.00 L344.39,376.47 L344.61,378.21 L344.83,377.33 L345.06,377.07 L345.28,377.04 L345.50,374.34 L345.73,376.00 L345.95,374.58 L346.17,373.60 L346.39,373.56 L346.62,373.69 L346.84,373.40 L347.06,371.30 L347.29,374.65 L347.51,374.79 L347.73,375.45 L347.96,372.74 L348.18,372.47 L348.40,373.92 L348.62,373.96 L348.85,375.32 L349.07,374.91 L349.29,374.60 L349.52,374.12 L349.74,372.27 L349.96,371.86 L350.19,375.57 L350.41,373.31 L350.63,373.54 L350.85,370.22 L351.08,367.10 L351.30,367.91 L351.52,369.79 L351.75,373.44 L351.97,370.85 L352.19,371.80 L352.42,372.55 L352.64,369.56 L352.86,372.71 L353.08,372.07 L353.31,369.38 L353.53,372.84 L353.75,372.64 L353.98,371.41 L354.20,371.01 L354.42,371.97 L354.65,374.43 L354.87,372.68 L355.09,369.73 L355.31,370.25 L355.54,369.85 L355.76,370.13 L355.98,368.94 L356.21,366.24 L356.43,370.86 L356.65,368.91 L356.88,367.24 L357.10,367.91 L357.32,369.56 L357.54,367.75 L357.77,370.17 L357.99,368.75 L358.21,370.61 L358.44,368.86 L358.66,370.24 L358.88,372.06 L359.11,374.67 L359.33,372.67 L359.55,371.11 L359.77,373.06 L360.00,371.79 L360.22,373.66 L360.44,374.81 L360.67,372.98 L360.89,376.38 L361.11,373.33 L361.34,374.54 L361.56,371.39 L361.78,371.32 L362.00,371.20 L362.23,374.15 L362.45,373.73 L362.67,372.54 L362.90,369.58 L363.12,367.89 L363.34,370.45 L363.57,369.50 L363.79,371.05 L364.01,370.99 L364.23,369.99 L364.46,370.76 L364.68,372.29 L364.90,377.97 L365.13,377.59 L365.35,376.29 L365.57,378.78 L365.80,380.10 L366.02,378.29 L366.24,377.69 L366.46,380.58 L366.69,378.77 L366.91,380.91 L367.13,381.39 L367.36,380.23 L367.58,381.25 L367.80,377.60 L368.03,378.16 L368.25,377.83 L368.47,375.36 L368.70,377.47 L368.92,379.35 L369.14,376.24 L369.36,381.10 L369.59,382.39 L369.81,382.18 L370.03,385.98 L370.26,383.54 L370.48,387.14 L370.70,386.67 L370.93,381.52 L371.15,383.21 L371.37,381.66 L371.59,382.50 L371.82,383.43 L372.04,386.04 L372.26,382.26 L372.49,384.44 L372.71,385.07 L372.93,382.25 L373.16,386.10 L373.38,385.18 L373.60,386.52 L373.82,385.15 L374.05,385.61 L374.27,384.20 L374.49,386.81 L374.72,385.42 L374.94,385.96 L375.16,387.05 L375.39,386.77 L375.61,386.04 L375.83,384.00 L376.05,385.51 L376.28,384.37 L376.50,383.76 L376.72,385.85 L376.95,386.62 L377.17,387.17 L377.39,384.16 L377.62,384.66 L377.84,385.99 L378.06,387.18 L378.28,387.23 L378.51,388.64 L378.73,383.71 L378.95,384.96 L379.18,384.08 L379.40,387.40 L379.62,385.27 L379.85,388.44 L380.07,384.77 L380.29,385.69 L380.51,385.99 L380.74,384.49 L380.96,385.29 L381.18,383.34 L381.41,385.35 L381.63,385.20 L381.85,386.01 L382.08,387.20 L382.30,386.68 L382.52,388.91 L382.74,389.19 L382.97,387.19 L383.19,383.02 L383.41,382.83 L383.64,383.45 L383.86,385.30 L384.08,387.48 L384.31,387.49 L384.53,386.65 L384.75,385.28 L384.97,385.93 L385.20,382.98 L385.42,382.31 L385.64,381.65 L385.87,383.79 L386.09,383.31 L386.31,385.18 L386.54,383.56 L386.76,386.01 L386.98,383.74 L387.20,384.77 L387.43,382.81 L387.65,383.79 L387.87,384.56 L388.10,382.56 L388.32,382.48 L388.54,381.94 L388.77,383.73 L388.99,381.86 L389.21,382.77 L389.43,383.86 L389.66,381.98 L389.88,379.62 L390.10,379.60 L390.33,375.99 L390.55,374.33 L390.77,377.35 L391.00,376.31 L391.22,375.71 L391.44,373.80 L391.67,373.96 L391.89,373.84 L392.11,377.06 L392.33,377.31 L392.56,379.00 L392.78,376.93 L393.00,377.20 L393.23,378.47 L393.45,375.24 L393.67,377.86 L393.90,377.15 L394.12,374.24 L394.34,372.39 L394.56,371.35 L394.79,373.80 L395.01,375.83 L395.23,373.70 L395.46,375.96 L395.68,371.80 L395.90,374.20 L396.13,375.76 L396.35,376.17 L396.57,373.77 L396.79,373.88 L397.02,377.15 L397.24,372.96 L397.46,372.80 L397.69,373.98 L397.91,373.77 L398.13,372.24 L398.36,370.56 L398.58,371.73 L398.80,372.41 L399.02,372.84 L399.25,370.52 L399.47,374.27 L399.69,370.03 L399.92,372.47 L400.14,371.68 L400.36,373.23 L400.59,371.72 L400.81,375.45 L401.03,374.53 L401.25,372.18 L401.48,370.97 L401.70,370.78 L401.92,369.95 L402.15,370.20 L402.37,367.93 L402.59,366.17 L402.82,365.86 L403.04,368.21 L403.26,366.42 L403.48,367.49 L403.71,371.15 L403.93,372.22 L404.15,368.45 L404.38,367.03 L404.60,367.17 L404.82,364.60 L405.05,366.11 L405.27,365.43 L405.49,367.17 L405.71,365.77 L405.94,363.44 L406.16,367.72 L406.38,368.49 L406.61,369.95 L406.83,368.55 L407.05,368.54 L407.28,368.98 L407.50,366.99 L407.72,367.08 L407.94,366.54 L408.17,366.38 L408.39,366.91 L408.61,369.33 L408.84,369.64 L409.06,367.06 L409.28,368.46 L409.51,366.81 L409.73,365.30 L409.95,365.50 L410.17,367.57 L410.40,368.00 L410.62,369.09 L410.84,367.07 L411.07,366.59 L411.29,368.22 L411.51,365.79 L411.74,364.60 L411.96,361.65 L412.18,363.54 L412.40,362.55 L412.63,367.66 L412.85,368.17 L413.07,369.74 L413.30,368.67 L413.52,368.92 L413.74,366.35 L413.97,365.98 L414.19,367.21 L414.41,365.42 L414.64,364.19 L414.86,366.85 L415.08,365.87 L415.30,368.57 L415.53,366.30 L415.75,367.73 L415.97,365.33 L416.20,369.41 L416.42,368.02 L416.64,366.17 L416.87,368.37 L417.09,369.10 L417.31,370.86 L417.53,372.76 L417.76,372.02 L417.98,369.30 L418.20,368.96 L418.43,369.52 L418.65,366.25 L418.87,364.67 L419.10,364.84 L419.32,369.56 L419.54,370.44 L419.76,367.51 L419.99,370.60 L420.21,367.84 L420.43,368.12 L420.66,367.25 L420.88,371.89 L421.10,368.89 L421.33,369.58 L421.55,372.64 L421.77,370.40 L421.99,373.18 L422.22,368.70 L422.44,370.66 L422.66,369.34 L422.89,369.50 L423.11,373.81 L423.33,370.90 L423.56,375.46 L423.78,375.67 L424.00,374.16 L424.22,374.70 L424.45,372.41 L424.67,374.02 L424.89,371.50 L425.12,370.34 L425.34,368.99 L425.56,371.33 L425.79,372.09 L426.01,371.62 L426.23,372.25 L426.45,371.66 L426.68,373.40 L426.90,374.01 L427.12,374.68 L427.35,372.97 L427.57,373.98 L427.79,377.18 L428.02,376.31 L428.24,376.77 L428.46,374.91 L428.68,375.14 L428.91,375.93 L429.13,373.82 L429.35,372.78 L429.58,374.06 L429.80,372.17 L430.02,376.35 L430.25,377.30 L430.47,374.83 L430.69,376.03 L430.91,375.93 L431.14,376.25 L431.36,379.44 L431.58,378.58 L431.81,378.84 L432.03,378.17 L432.25,376.76 L432.48,373.34 L432.70,375.62 L432.92,375.09 L433.14,375.09 L433.37,374.65 L433.59,377.45 L433.81,374.48 L434.04,376.78 L434.26,374.84 L434.48,374.42 L434.71,373.86 L434.93,373.92 L435.15,373.86 L435.37,376.77 L435.60,375.79 L435.82,374.23 L436.04,375.52 L436.27,372.77 L436.49,373.07 L436.71,372.47 L436.94,371.88 L437.16,370.28 L437.38,374.29 L437.61,372.87 L437.83,372.03 L438.05,370.79 L438.27,371.27 L438.50,366.34 L438.72,369.19 L438.94,366.41 L439.17,363.35 L439.39,364.22 L439.61,364.47 L439.84,363.66 L440.06,362.61 L440.28,362.94 L440.50,362.48 L440.73,363.35 L440.95,365.39 L441.17,361.76 L441.40,360.54 L441.62,360.87 L441.84,361.21 L442.07,355.81 L442.29,357.12 L442.51,356.44 L442.73,356.90 L442.96,353.69 L443.18,354.41 L443.40,355.75 L443.63,354.98 L443.85,354.51 L444.07,354.95 L444.30,354.03 L444.52,352.74 L444.74,356.35 L444.96,352.13 L445.19,351.98 L445.41,355.19 L445.63,352.39 L445.86,353.53 L446.08,354.48 L446.30,357.11 L446.53,355.17 L446.75,353.58 L446.97,354.56 L447.19,357.18 L447.42,354.44 L447.64,356.16 L447.86,356.61 L448.09,355.24 L448.31,355.49 L448.53,353.80 L448.76,355.26 L448.98,350.83 L449.20,354.90 L449.42,353.93 L449.65,354.20 L449.87,353.77 L450.09,354.92 L450.32,353.40 L450.54,357.65 L450.76,354.35 L450.99,356.98 L451.21,353.72 L451.43,356.04 L451.65,356.96 L451.88,354.03 L452.10,358.14 L452.32,355.94 L452.55,354.71 L452.77,356.31 L452.99,353.96 L453.22,351.08 L453.44,348.94 L453.66,349.43 L453.88,352.02 L454.11,352.50 L454.33,352.07 L454.55,355.32 L454.78,351.32 L455.00,350.53 L455.22,352.21 L455.45,349.66 L455.67,349.29 L455.89,350.63 L456.11,354.51 L456.34,355.59 L456.56,355.66 L456.78,356.92 L457.01,355.75 L457.23,354.83 L457.45,355.42 L457.68,353.43 L457.90,354.73 L458.12,354.46 L458.34,355.78 L458.57,351.86 L458.79,352.91 L459.01,351.09 L459.24,350.67 L459.46,353.74 L459.68,350.37 L459.91,350.07 L460.13,348.35 L460.35,351.49 L460.58,349.02 L460.80,350.07 L461.02,352.27 L461.24,354.66 L461.47,353.11 L461.69,356.71 L461.91,355.85 L462.14,357.58 L462.36,356.27 L462.58,356.03 L462.81,353.36 L463.03,351.71 L463.25,349.95 L463.47,349.94 L463.70,347.90 L463.92,348.93 L464.14,350.84 L464.37,351.36 L464.59,351.99 L464.81,355.23 L465.04,353.40 L465.26,354.67 L465.48,354.51 L465.70,352.05 L465.93,349.16 L466.15,349.58 L466.37,347.07 L466.60,350.89 L466.82,351.17 L467.04,350.65 L467.27,350.32 L467.49,350.05 L467.71,348.77 L467.93,347.63 L468.16,347.80 L468.38,348.08 L468.60,345.68 L468.83,349.00 L469.05,349.23 L469.27,348.79 L469.50,349.76 L469.72,346.95 L469.94,349.32 L470.16,347.66 L470.39,349.08 L470.61,350.58 L470.83,347.63 L471.06,347.72 L471.28,351.01 L471.50,347.31 L471.73,347.05 L471.95,347.60 L472.17,346.05 L472.39,343.82 L472.62,346.22 L472.84,344.52 L473.06,345.14 L473.29,345.26 L473.51,346.85 L473.73,343.97 L473.96,345.70 L474.18,345.56 L474.40,346.25 L474.62,347.79 L474.85,345.59 L475.07,346.61 L475.29,343.66 L475.52,345.66 L475.74,347.20 L475.96,346.67 L476.19,347.93 L476.41,346.20 L476.63,349.65 L476.85,346.91 L477.08,350.40 L477.30,349.36 L477.52,348.28 L477.75,346.21 L477.97,346.83 L478.19,347.43 L478.42,347.38 L478.64,345.80 L478.86,349.46 L479.08,347.67 L479.31,349.99 L479.53,348.45 L479.75,347.33 L479.98,348.32 L480.20,348.90 L480.42,348.64 L480.65,349.16 L480.87,350.94 L481.09,350.57 L481.31,350.42 L481.54,352.05 L481.76,349.64 L481.98,350.21 L482.21,351.74 L482.43,352.41 L482.65,355.08 L482.88,352.97 L483.10,355.80 L483.32,355.28 L483.55,354.37 L483.77,353.13 L483.99,351.73 L484.21,355.91 L484.44,355.56 L484.66,355.46 L484.88,354.33 L485.11,354.71 L485.33,355.07 L485.55,355.13 L485.78,352.78 L486.00,351.33 L486.22,351.48 L486.44,352.90 L486.67,355.40 L486.89,356.18 L487.11,356.34 L487.34,354.67 L487.56,352.10 L487.78,352.71 L488.01,350.12 L488.23,352.12 L488.45,351.55 L488.67,354.59 L488.90,354.46 L489.12,356.51 L489.34,354.07 L489.57,351.66 L489.79,355.28 L490.01,351.50 L490.24,354.10 L490.46,353.00 L490.68,356.40 L490.90,355.18 L491.13,353.93 L491.35,354.20 L491.57,354.27 L491.80,353.40 L492.02,356.86 L492.24,354.28 L492.47,355.10 L492.69,352.34 L492.91,351.80 L493.13,354.26 L493.36,355.27 L493.58,353.47 L493.80,353.69 L494.03,354.38 L494.25,353.38 L494.47,352.92 L494.70,355.03 L494.92,355.59 L495.14,356.87 L495.36,354.89 L495.59,355.66 L495.81,353.33 L496.03,353.98 L496.26,352.55 L496.48,353.96 L496.70,356.64 L496.93,357.26 L497.15,357.92 L497.37,358.35 L497.59,356.32 L497.82,356.96 L498.04,357.53 L498.26,357.36 L498.49,355.95 L498.71,358.27 L498.93,356.42 L499.16,354.01 L499.38,353.35 L499.60,354.66 L499.82,354.95 L500.05,356.77 L500.27,356.81 L500.49,358.17 L500.72,356.98 L500.94,354.45 L501.16,354.36 L501.39,357.14 L501.61,357.54 L501.83,355.87 L502.05,355.00 L502.28,356.43 L502.50,354.69 L502.72,357.04 L502.95,357.34 L503.17,354.20 L503.39,355.20 L503.62,357.91 L503.84,356.78 L504.06,357.83 L504.28,357.45 L504.51,358.80 L504.73,358.93 L504.95,358.36 L505.18,361.15 L505.40,359.33 L505.62,357.18 L505.85,360.36 L506.07,358.86 L506.29,358.33 L506.52,357.57 L506.74,358.53 L506.96,356.64 L507.18,360.34 L507.41,360.03 L507.63,361.31 L507.85,361.19 L508.08,359.79 L508.30,362.80 L508.52,358.77 L508.75,359.33 L508.97,362.26 L509.19,359.18 L509.41,362.95 L509.64,362.24 L509.86,364.67 L510.08,365.41 L510.31,363.87 L510.53,362.29 L510.75,366.04 L510.98,365.68 L511.20,364.92 L511.42,363.51 L511.64,366.88 L511.87,364.78 L512.09,366.05 L512.31,365.77 L512.54,363.43 L512.76,365.14 L512.98,362.71 L513.21,364.10 L513.43,361.07 L513.65,358.36 L513.87,362.49 L514.10,362.57 L514.32,360.50 L514.54,358.58 L514.77,359.72 L514.99,357.00 L515.21,358.96 L515.44,354.86 L515.66,357.98 L515.88,355.63 L516.10,358.22 L516.33,356.59 L516.55,360.53 L516.77,358.66 L517.00,354.70 L517.22,354.60 L517.44,356.03 L517.67,356.96 L517.89,354.35 L518.11,357.20 L518.33,356.14 L518.56,355.58 L518.78,351.88 L519.00,350.07 L519.23,352.96 L519.45,349.50 L519.67,349.62 L519.90,352.87 L520.12,352.09 L520.34,352.21 L520.56,354.65 L520.79,350.60 L521.01,354.83 L521.23,355.86 L521.46,354.46 L521.68,355.82 L521.90,354.01 L522.13,353.51 L522.35,354.82 L522.57,352.61 L522.79,350.61 L523.02,354.76 L523.24,355.78 L523.46,351.77 L523.69,354.05 L523.91,351.25 L524.13,347.90 L524.36,348.72 L524.58,352.75 L524.80,353.53 L525.02,351.79 L525.25,350.77 L525.47,350.33 L525.69,353.39 L525.92,352.53 L526.14,352.57 L526.36,353.45 L526.59,351.94 L526.81,352.68 L527.03,353.31 L527.25,351.61 L527.48,353.38 L527.70,351.24 L527.92,349.81 L528.15,351.66 L528.37,353.09 L528.59,353.14 L528.82,349.10 L529.04,348.25 L529.26,347.99 L529.48,350.99 L529.71,350.64 L529.93,348.83 L530.15,351.91 L530.38,353.17 L530.60,350.72 L530.82,350.23 L531.05,352.58 L531.27,349.28 L531.49,347.67 L531.72,346.63 L531.94,346.16 L532.16,347.57 L532.38,351.77 L532.61,351.41 L532.83,352.12 L533.05,350.09 L533.28,350.70 L533.50,349.44 L533.72,353.88 L533.95,355.33 L534.17,356.01 L534.39,354.62 L534.61,350.51 L534.84,351.14 L535.06,352.66 L535.28,351.39 L535.51,351.37 L535.73,352.74 L535.95,353.66 L536.18,350.19 L536.40,351.00 L536.62,353.80 L536.84,352.29 L537.07,354.34 L537.29,353.43 L537.51,352.27 L537.74,353.14 L537.96,354.33 L538.18,351.63 L538.41,352.73 L538.63,349.76 L538.85,351.04 L539.07,349.63 L539.30,350.10 L539.52,350.08 L539.74,348.83 L539.97,348.66 L540.19,347.66 L540.41,351.51 L540.64,348.90 L540.86,351.09 L541.08,353.92 L541.30,354.96 L541.53,354.13 L541.75,353.11 L541.97,351.98 L542.20,350.28 L542.42,349.87 L542.64,349.23 L542.87,349.90 L543.09,350.66 L543.31,350.54 L543.53,351.74 L543.76,354.67 L543.98,352.89 L544.20,353.42 L544.43,351.85 L544.65,352.68 L544.87,348.36 L545.10,350.11 L545.32,348.91 L545.54,350.17 L545.76,346.75 L545.99,347.15 L546.21,347.45 L546.43,351.28 L546.66,350.98 L546.88,348.50 L547.10,348.61 L547.33,351.62 L547.55,349.36 L547.77,350.69 L547.99,346.72 L548.22,346.48 L548.44,346.00 L548.66,346.38 L548.89,347.60 L549.11,347.33 L549.33,345.99 L549.56,347.46 L549.78,345.71 L550.00,348.73 L550.22,349.20 L550.45,346.98 L550.67,350.52 L550.89,350.61 L551.12,352.25 L551.34,348.89 L551.56,351.43 L551.79,352.27 L552.01,350.15 L552.23,349.68 L552.45,352.33 L552.68,351.98 L552.90,347.90 L553.12,347.11 L553.35,348.87 L553.57,348.17 L553.79,351.92 L554.02,350.25 L554.24,352.08 L554.46,351.25 L554.69,350.95 L554.91,348.58 L555.13,349.17 L555.35,351.21 L555.58,351.21 L555.80,354.72 L556.02,353.69 L556.25,352.91 L556.47,350.09 L556.69,347.60 L556.92,349.56 L557.14,345.77 L557.36,348.09 L557.58,348.47 L557.81,347.55 L558.03,344.41 L558.25,347.74 L558.48,346.49 L558.70,348.17 L558.92,347.93 L559.15,348.81 L559.37,349.69 L559.59,348.61 L559.81,344.40 L560.04,346.45 L560.26,345.66 L560.48,346.70 L560.71,349.61 L560.93,349.10 L561.15,351.57 L561.38,351.92 L561.60,349.36 L561.82,351.55 L562.04,352.03 L562.27,351.30 L562.49,351.79 L562.71,349.40 L562.94,349.70 L563.16,350.15 L563.38,348.41 L563.61,350.01 L563.83,348.69 L564.05,347.24 L564.27,345.30 L564.50,347.54 L564.72,346.89 L564.94,346.06 L565.17,347.11 L565.39,347.07 L565.61,348.37 L565.84,347.80 L566.06,347.44 L566.28,347.28 L566.50,346.47 L566.73,349.07 L566.95,348.47 L567.17,345.85 L567.40,349.42 L567.62,347.08 L567.84,349.43 L568.07,350.87 L568.29,347.63 L568.51,348.74 L568.73,349.03 L568.96,346.33 L569.18,344.30 L569.40,344.96 L569.63,345.18 L569.85,347.50 L570.07,343.66 L570.30,344.98 L570.52,348.42 L570.74,347.14 L570.96,348.53 L571.19,345.97 L571.41,349.59 L571.63,350.75 L571.86,347.47 L572.08,350.40 L572.30,351.50 L572.53,351.99 L572.75,351.22 L572.97,349.15 L573.19,348.82 L573.42,345.57 L573.64,343.71 L573.86,346.86 L574.09,347.48 L574.31,344.48 L574.53,345.41 L574.76,344.95 L574.98,348.68 L575.20,346.22 L575.42,348.51 L575.65,349.25 L575.87,348.53 L576.09,346.62 L576.32,347.26 L576.54,347.81 L576.76,351.10 L576.99,350.38 L577.21,351.42 L577.43,350.66 L577.66,347.35 L577.88,350.79 L578.10,347.42 L578.32,347.56 L578.55,350.27 L578.77,349.69 L578.99,347.95 L579.22,348.76 L579.44,347.64 L579.66,346.78 L579.89,349.12 L580.11,345.79 L580.33,347.38 L580.55,350.83 L580.78,353.70 L581.00,352.84 L581.22,351.35 L581.45,351.26 L581.67,349.82 L581.89,350.99 L582.12,350.21 L582.34,349.30 L582.56,353.11 L582.78,349.51 L583.01,347.89 L583.23,351.38 L583.45,349.94 L583.68,349.10 L583.90,350.08 L584.12,351.34 L584.35,351.38 L584.57,353.20 L584.79,351.98 L585.01,351.57 L585.24,352.19 L585.46,352.76 L585.68,353.49 L585.91,354.59 L586.13,355.07 L586.35,356.42 L586.58,355.94 L586.80,357.03 L587.02,354.22 L587.24,351.87 L587.47,353.32 L587.69,350.77 L587.91,352.66 L588.14,352.72 L588.36,353.37 L588.58,359.38 L588.81,359.56 L589.03,361.33 L589.25,361.24 L589.47,357.90 L589.70,360.49 L589.92,357.47 L590.14,356.32 L590.37,359.22 L590.59,358.31 L590.81,360.56 L591.04,356.79 L591.26,355.52 L591.48,355.56 L591.70,354.08 L591.93,356.90 L592.15,358.40 L592.37,362.80 L592.60,360.55 L592.82,363.73 L593.04,362.86 L593.27,364.26 L593.49,365.58 L593.71,363.40 L593.93,360.62 L594.16,361.53 L594.38,364.44 L594.60,363.64 L594.83,363.22 L595.05,367.71 L595.27,367.20 L595.50,362.43 L595.72,362.57 L595.94,361.28 L596.16,363.21 L596.39,362.27 L596.61,364.23 L596.83,364.20 L597.06,362.01 L597.28,361.07 L597.50,363.39 L597.73,366.49 L597.95,366.65 L598.17,362.69 L598.39,363.85 L598.62,364.29 L598.84,364.38 L599.06,362.32 L599.29,365.35 L599.51,367.53 L599.73,367.48 L599.96,367.70 L600.18,362.92 L600.40,364.39 L600.63,363.98 L600.85,365.83 L601.07,365.25 L601.29,363.63 L601.52,364.66 L601.74,367.57 L601.96,369.18 L602.19,366.69 L602.41,370.09 L602.63,370.41 L602.86,370.70 L603.08,368.71 L603.30,366.58 L603.52,367.35 L603.75,365.55 L603.97,368.20 L604.19,367.75 L604.42,371.63 L604.64,371.57 L604.86,372.81 L605.09,372.48 L605.31,369.48 L605.53,371.47 L605.75,370.52 L605.98,371.96 L606.20,370.09 L606.42,373.37 L606.65,372.94 L606.87,371.28 L607.09,373.19 L607.32,371.37 L607.54,370.61 L607.76,373.80 L607.98,373.39 L608.21,376.08 L608.43,372.08 L608.65,372.58 L608.88,369.58 L609.10,370.03 L609.32,367.60 L609.55,369.19 L609.77,368.14 L609.99,369.17 L610.21,370.99 L610.44,372.40 L610.66,371.49 L610.88,370.39 L611.11,369.79 L611.33,370.12 L611.55,370.68 L611.78,371.26 L612.00,372.53 L612.22,371.59 L612.44,372.60 L612.67,370.77 L612.89,371.14 L613.11,369.92 L613.34,372.05 L613.56,371.66 L613.78,369.26 L614.01,370.93 L614.23,372.73 L614.45,370.24 L614.67,375.48 L614.90,371.68 L615.12,371.94 L615.34,375.19 L615.57,370.41 L615.79,370.30 L616.01,371.65 L616.24,368.58 L616.46,366.41 L616.68,369.54 L616.90,368.21 L617.13,369.57 L617.35,367.33 L617.57,371.96 L617.80,372.77 L618.02,372.76 L618.24,368.58 L618.47,370.66 L618.69,366.61 L618.91,370.90 L619.13,369.39 L619.36,371.56 L619.58,371.99 L619.80,372.26 L620.03,370.33 L620.25,371.46 L620.47,370.52 L620.70,368.20 L620.92,369.85 L621.14,373.06 L621.36,371.85 L621.59,369.53 L621.81,369.73 L622.03,369.56 L622.26,368.78 L622.48,367.46 L622.70,366.21 L622.93,366.76 L623.15,367.45 L623.37,367.22 L623.60,365.99 L623.82,362.93 L624.04,366.27 L624.26,365.93 L624.49,365.42 L624.71,362.82 L624.93,364.96 L625.16,363.44 L625.38,363.42 L625.60,363.01 L625.83,362.85 L626.05,360.37 L626.27,361.90 L626.49,361.50 L626.72,357.45 L626.94,358.70 L627.16,358.06 L627.39,358.15 L627.61,353.77 L627.83,355.55 L628.06,356.34 L628.28,358.81 L628.50,354.69 L628.72,357.72 L628.95,354.89 L629.17,354.59 L629.39,356.26 L629.62,357.20 L629.84,353.20 L630.06,357.30 L630.29,356.61 L630.51,355.62 L630.73,355.65 L630.95,357.10 L631.18,355.67 L631.40,353.94 L631.62,350.19 L631.85,348.97 L632.07,352.21 L632.29,348.35 L632.52,350.49 L632.74,351.50 L632.96,351.13 L633.18,353.46 L633.41,350.84 L633.63,351.39 L633.85,354.31 L634.08,356.54 L634.30,353.98 L634.52,352.53 L634.75,355.05 L634.97,349.16 L635.19,349.45 L635.41,350.20 L635.64,348.05 L635.86,348.77 L636.08,351.08 L636.31,350.15 L636.53,351.77 L636.75,349.97 L636.98,351.53 L637.20,350.26 L637.42,347.59 L637.64,346.94 L637.87,347.43 L638.09,347.20 L638.31,349.42 L638.54,351.91 L638.76,352.64 L638.98,355.29 L639.21,355.17 L639.43,353.48 L639.65,350.65 L639.87,349.60 L640.10,353.21 L640.32,349.55 L640.54,349.89 L640.77,352.45 L640.99,350.22 L641.21,350.98 L641.44,348.43 L641.66,350.28 L641.88,350.44 L642.10,350.14 L642.33,351.87 L642.55,349.44 L642.77,349.13 L643.00,349.99 L643.22,346.11 L643.44,345.80 L643.67,343.31 L643.89,343.29 L644.11,347.57 L644.33,344.22 L644.56,344.70 L644.78,345.44 L645.00,347.87 L645.23,345.31 L645.45,347.89 L645.67,349.19 L645.90,348.02 L646.12,351.16 L646.34,348.77 L646.57,349.40 L646.79,347.76 L647.01,344.63 L647.23,347.68 L647.46,345.12 L647.68,343.71 L647.90,343.98 L648.13,342.21 L648.35,345.64 L648.57,347.90 L648.80,349.41 L649.02,351.53 L649.24,352.30 L649.46,352.40 L649.69,351.65 L649.91,350.82 L650.13,348.26 L650.36,349.07 L650.58,345.63 L650.80,346.95 L651.03,345.29 L651.25,346.10 L651.47,345.35 L651.69,345.26 L651.92,347.89 L652.14,348.55 L652.36,349.08 L652.59,344.91 L652.81,348.46 L653.03,345.42 L653.26,346.98 L653.48,346.74 L653.70,350.20 L653.92,345.81 L654.15,349.21 L654.37,345.68 L654.59,349.45 L654.82,345.69 L655.04,350.14 L655.26,349.52 L655.49,347.48 L655.71,347.66 L655.93,346.81 L656.15,344.84 L656.38,345.82 L656.60,343.45 L656.82,343.28 L657.05,345.23 L657.27,345.77 L657.49,347.61 L657.72,346.41 L657.94,345.41 L658.16,343.84 L658.38,345.92 L658.61,344.31 L658.83,347.66 L659.05,347.40 L659.28,347.44 L659.50,350.87 L659.72,347.84 L659.95,347.80 L660.17,350.82 L660.39,348.13 L660.61,349.18 L660.84,350.16 L661.06,349.60 L661.28,349.21 L661.51,344.85 L661.73,345.11 L661.95,346.11 L662.18,349.75 L662.40,348.06 L662.62,350.52 L662.84,349.21 L663.07,351.02 L663.29,346.72 L663.51,349.53 L663.74,347.93 L663.96,350.05 L664.18,348.94 L664.41,345.67 L664.63,345.39 L664.85,345.60 L665.07,346.79 L665.30,346.23 L665.52,345.85 L665.74,347.21 L665.97,348.12 L666.19,350.06 L666.41,350.12 L666.64,348.10 L666.86,351.26 L667.08,350.69 L667.30,352.81 L667.53,352.06 L667.75,352.80 L667.97,349.03 L668.20,347.63 L668.42,348.86 L668.64,346.14 L668.87,346.13 L669.09,346.54 L669.31,348.29 L669.54,351.48 L669.76,349.82 L669.98,351.40 L670.20,350.31 L670.43,352.32 L670.65,352.66 L670.87,348.71 L671.10,350.76 L671.32,350.16 L671.54,349.09 L671.77,352.01 L671.99,350.07 L672.21,351.37 L672.43,356.26 L672.66,354.32 L672.88,356.45 L673.10,356.21 L673.33,356.58 L673.55,356.87 L673.77,355.00 L674.00,353.86 L674.22,349.94 L674.44,349.76 L674.66,347.71 L674.89,351.12 L675.11,348.76 L675.33,349.77 L675.56,351.22 L675.78,350.44 L676.00,353.13 L676.23,350.39 L676.45,352.13 L676.67,350.32 L676.89,349.29 L677.12,351.13 L677.34,347.62 L677.56,351.58 L677.79,348.41 L678.01,348.80 L678.23,350.21 L678.46,352.07 L678.68,350.19 L678.90,350.10 L679.12,347.43 L679.35,348.12 L679.57,350.75 L679.79,348.99 L680.02,351.07 L680.24,348.79 L680.46,350.59 L680.69,349.02 L680.91,348.08 L681.13,352.45 L681.35,352.00 L681.58,354.27 L681.80,353.51 L682.02,353.17 L682.25,354.61 L682.47,353.25 L682.69,352.02 L682.92,353.60 L683.14,355.78 L683.36,354.92 L683.58,356.92 L683.81,356.58 L684.03,355.84 L684.25,358.07 L684.48,357.64 L684.70,361.13 L684.92,359.50 L685.15,360.08 L685.37,360.27 L685.59,360.33 L685.81,360.79 L686.04,359.65 L686.26,363.71 L686.48,365.03 L686.71,364.59 L686.93,362.16 L687.15,364.76 L687.38,364.66 L687.60,366.62 L687.82,366.16 L688.04,366.12 L688.27,367.41 L688.49,369.40 L688.71,367.16 L688.94,366.50 L689.16,367.96 L689.38,368.97 L689.61,366.41 L689.83,369.41 L690.05,367.16 L690.27,364.20 L690.50,362.20 L690.72,364.47 L690.94,366.30 L691.17,363.76 L691.39,365.96 L691.61,365.90 L691.84,365.97 L692.06,365.27 L692.28,367.97 L692.51,368.05 L692.73,365.16 L692.95,368.17 L693.17,366.64 L693.40,366.10 L693.62,366.94 L693.84,368.98 L694.07,366.30 L694.29,366.36 L694.51,366.76 L694.74,365.59 L694.96,364.99 L695.18,367.97 L695.40,367.11 L695.63,369.00 L695.85,369.04 L696.07,371.94 L696.30,371.74 L696.52,371.68 L696.74,372.30 L696.97,370.60 L697.19,367.54 L697.41,365.76 L697.63,362.87 L697.86,362.95 L698.08,362.54 L698.30,360.57 L698.53,361.26 L698.75,364.61 L698.97,366.00 L699.20,364.35 L699.42,366.42 L699.64,362.76 L699.86,364.14 L700.09,363.57 L700.31,363.55 L700.53,363.76 L700.76,365.42 L700.98,366.43 L701.20,366.71 L701.43,366.55 L701.65,362.82 L701.87,363.52 L702.09,363.41 L702.32,363.66 L702.54,363.24 L702.76,362.79 L702.99,360.61 L703.21,360.73 L703.43,358.30 L703.66,361.83 L703.88,362.27 L704.10,362.81 L704.32,365.40 L704.55,365.08 L704.77,364.41 L704.99,364.65 L705.22,362.89 L705.44,363.20 L705.66,360.90 L705.89,358.14 L706.11,362.21 L706.33,358.43 L706.55,359.14 L706.78,360.20 L707.00,363.54 L707.22,360.76 L707.45,360.61 L707.67,364.17 L707.89,365.42 L708.12,365.11 L708.34,363.92 L708.56,363.33 L708.78,363.75 L709.01,362.96 L709.23,362.49 L709.45,360.99 L709.68,359.72 L709.90,363.68 L710.12,358.86 L710.35,358.47 L710.57,357.61 L710.79,359.60 L711.01,360.58 L711.24,361.90 L711.46,361.70 L711.68,361.54 L711.91,361.20 L712.13,360.52 L712.35,362.33 L712.58,362.33 L712.80,361.42 L713.02,363.75 L713.24,360.26 L713.47,360.69 L713.69,362.04 L713.91,358.19 L714.14,355.62 L714.36,355.52 L714.58,357.82 L714.81,356.94 L715.03,357.16 L715.25,356.95 L715.47,358.94 L715.70,359.43 L715.92,358.66 L716.14,360.45 L716.37,356.88 L716.59,357.73 L716.81,358.17 L717.04,358.03 L717.26,356.48 L717.48,361.43 L717.71,358.25 L717.93,361.96 L718.15,361.69 L718.37,362.43 L718.60,363.52 L718.82,363.66 L719.04,362.52 L719.27,362.93 L719.49,362.61 L719.71,363.62 L719.94,363.12 L720.16,363.66 L720.38,367.07 L720.60,367.81 L720.83,364.22 L721.05,368.43 L721.27,368.46 L721.50,367.58 L721.72,365.93 L721.94,365.31 L722.17,365.00 L722.39,365.00 L722.61,364.88 L722.83,366.77 L723.06,364.51 L723.28,364.99 L723.50,365.51 L723.73,369.99 L723.95,370.23 L724.17,372.19 L724.40,371.27 L724.62,372.41 L724.84,375.74 L725.06,375.52 L725.29,371.64 L725.51,372.53 L725.73,374.21 L725.96,373.64 L726.18,373.97 L726.40,373.30 L726.63,372.91 L726.85,372.77 L727.07,375.46 L727.29,374.89 L727.52,371.45 L727.74,370.87 L727.96,373.91 L728.19,372.56 L728.41,372.08 L728.63,373.25 L728.86,373.40 L729.08,375.36 L729.30,376.47 L729.52,376.63 L729.75,377.17 L729.97,379.91 L730.19,377.67 L730.42,378.60 L730.64,374.00 L730.86,375.51 L731.09,371.91 L731.31,371.45 L731.53,372.70 L731.75,374.48 L731.98,374.17 L732.20,378.03 L732.42,376.22 L732.65,372.94 L732.87,374.62 L733.09,375.10 L733.32,375.58 L733.54,375.57 L733.76,377.25 L733.98,374.72 L734.21,378.43 L734.43,375.42 L734.65,378.96 L734.88,378.82 L735.10,377.77 L735.32,379.53 L735.55,379.73 L735.77,375.59 L735.99,375.83 L736.21,377.10 L736.44,376.41 L736.66,378.03 L736.88,377.25 L737.11,375.22 L737.33,373.77 L737.55,373.12 L737.78,375.69 L738.00,377.29 L738.22,379.17 L738.44,378.29 L738.67,375.93 L738.89,375.22 L739.11,373.43 L739.34,372.09 L739.56,373.78 L739.78,370.86 L740.01,372.94 L740.23,371.16 L740.45,373.78 L740.68,373.71 L740.90,372.04 L741.12,374.36 L741.34,371.62 L741.57,370.08 L741.79,371.88 L742.01,371.47 L742.24,372.33 L742.46,374.13 L742.68,373.40 L742.91,372.86 L743.13,369.60 L743.35,367.84 L743.57,371.48 L743.80,368.19 L744.02,368.48 L744.24,371.28 L744.47,370.40 L744.69,373.80 L744.91,375.64 L745.14,374.96 L745.36,370.88 L745.58,368.59 L745.80,370.08 L746.03,368.35 L746.25,372.32 L746.47,372.88 L746.70,370.17 L746.92,372.85 L747.14,371.45 L747.37,371.60 L747.59,372.00 L747.81,370.40 L748.03,370.72 L748.26,369.72 L748.48,370.87 L748.70,372.71 L748.93,375.57 L749.15,375.38 L749.37,377.62 L749.60,374.34 L749.82,375.10 L750.04,376.82 L750.26,373.43 L750.49,373.34 L750.71,372.36 L750.93,372.46 L751.16,375.38 L751.38,377.78 L751.60,378.19 L751.83,378.40 L752.05,377.00 L752.27,373.77 L752.49,377.30 L752.72,375.80 L752.94,375.40 L753.16,377.56 L753.39,374.92 L753.61,373.94 L753.83,373.80 L754.06,375.80 L754.28,372.98 L754.50,375.62 L754.72,376.42 L754.95,372.96 L755.17,373.07 L755.39,372.46 L755.62,375.79 L755.84,374.61 L756.06,375.50 L756.29,375.58 L756.51,377.05 L756.73,375.30 L756.95,373.81 L757.18,372.64 L757.40,372.75 L757.62,373.65 L757.85,373.68 L758.07,373.52 L758.29,371.81 L758.52,370.84 L758.74,371.30 L758.96,368.99 L759.18,370.47 L759.41,370.92 L759.63,368.07 L759.85,371.58 L760.08,368.72 L760.30,368.27 L760.52,371.57 L760.75,371.23 L760.97,370.17 L761.19,371.66 L761.41,372.69 L761.64,370.48 L761.86,372.48 L762.08,370.73 L762.31,372.63 L762.53,370.92 L762.75,370.48 L762.98,373.46 L763.20,369.24 L763.42,369.73 L763.65,369.28 L763.87,368.62 L764.09,369.77 L764.31,370.51 L764.54,367.76 L764.76,369.48 L764.98,367.69 L765.21,371.01 L765.43,368.49 L765.65,367.88 L765.88,367.18 L766.10,367.25 L766.32,368.61 L766.54,365.15 L766.77,367.48 L766.99,366.63 L767.21,363.17 L767.44,362.00 L767.66,363.70 L767.88,365.68 L768.11,363.72 L768.33,362.85 L768.55,362.80 L768.77,365.99 L769.00,363.45 L769.22,364.11 L769.44,364.63 L769.67,365.95 L769.89,367.43 L770.11,368.51 L770.34,368.78 L770.56,367.68 L770.78,370.34 L771.00,370.05 L771.23,373.46 L771.45,372.94 L771.67,373.88 L771.90,373.32 L772.12,373.02 L772.34,373.09 L772.57,373.08 L772.79,373.75 L773.01,370.48 L773.23,371.57 L773.46,373.50 L773.68,372.84 L773.90,369.75 L774.13,370.32 L774.35,371.23 L774.57,371.61 L774.80,368.72 L775.02,367.83 L775.24,367.59 L775.46,364.67 L775.69,365.79 L775.91,366.72 L776.13,368.40 L776.36,367.87 L776.58,367.78 L776.80,368.57 L777.03,368.28 L777.25,367.66 L777.47,365.70 L777.69,367.56 L777.92,369.04 L778.14,367.84 L778.36,372.31 L778.59,372.08 L778.81,368.94 L779.03,368.60 L779.26,367.39 L779.48,368.64 L779.70,368.22 L779.92,368.38 L780.15,368.23 L780.37,368.11 L780.59,367.92 L780.82,367.36 L781.04,363.04 L781.26,362.84 L781.49,364.17 L781.71,363.96 L781.93,366.01 L782.15,365.52 L782.38,365.59 L782.60,363.68 L782.82,365.24 L783.05,365.09 L783.27,366.22 L783.49,364.41 L783.72,363.14 L783.94,363.65 L784.16,364.54 L784.38,363.35 L784.61,361.73 L784.83,362.73 L785.05,364.41 L785.28,366.92 L785.50,366.73" stroke="#c8200f" stroke-width="1.9"/>
<path d="M250.50,361.44 L250.95,355.74 L251.39,350.13 L251.84,344.61 L252.28,339.21 L252.73,333.91 L253.18,328.75 L253.62,323.73 L254.07,318.85 L254.52,314.13 L254.96,309.57 L255.41,305.14 L255.85,300.83 L256.30,296.62 L256.75,292.51 L257.19,288.47 L257.64,284.50 L258.09,280.58 L258.53,276.71 L258.98,272.87 L259.42,269.04 L259.87,265.22 L260.32,261.40 L260.76,257.57 L261.21,253.79 L261.66,250.07 L262.10,246.40 L262.55,242.76 L262.99,239.16 L263.44,235.57 L263.89,232.00 L264.33,228.44 L264.78,224.88 L265.22,221.30 L265.67,217.71 L266.12,214.09 L266.56,210.44 L267.01,206.75 L267.46,203.01 L267.90,199.21 L268.35,195.30 L268.79,191.31 L269.24,187.27 L269.69,183.21 L270.13,179.20 L270.58,175.25 L271.03,171.42 L271.47,167.72 L271.92,164.12 L272.36,160.60 L272.81,157.13 L273.26,153.72 L273.70,150.33 L274.15,146.97 L274.60,143.60 L275.04,140.22 L275.49,136.81 L275.93,133.36 L276.38,129.85 L276.83,126.17 L277.27,122.26 L277.72,118.21 L278.16,114.05 L278.61,109.86 L279.06,105.70 L279.50,101.62 L279.95,97.68 L280.40,93.96 L280.84,90.50 L281.29,87.37 L281.73,84.63 L282.18,82.34 L282.63,80.39 L283.07,78.49 L283.52,76.65 L283.97,74.88 L284.41,73.17 L284.86,71.54 L285.30,69.99 L285.75,68.52 L286.20,67.15 L286.64,65.86 L287.09,64.68 L287.54,63.60 L287.98,62.62 L288.43,61.76 L288.87,61.02 L289.32,60.40 L289.77,59.91 L290.21,59.49 L290.66,59.07 L291.10,58.67 L291.55,58.28 L292.00,57.91 L292.44,57.56 L292.89,57.22 L293.34,56.90 L293.78,56.61 L294.23,56.33 L294.67,56.08 L295.12,55.85 L295.57,55.65 L296.01,55.48 L296.46,55.33 L296.91,55.22 L297.35,55.13 L297.80,55.08 L298.24,55.06 L298.69,55.08 L299.14,55.17 L299.58,55.30 L300.03,55.49 L300.47,55.73 L300.92,56.01 L301.37,56.32 L301.81,56.67 L302.26,57.04 L302.71,57.43 L303.15,57.85 L303.60,58.27 L304.04,58.71 L304.49,59.15 L304.94,59.58 L305.38,60.03 L305.83,60.50 L306.28,61.02 L306.72,61.57 L307.17,62.15 L307.61,62.77 L308.06,63.43 L308.51,64.11 L308.95,64.84 L309.40,65.59 L309.85,66.38 L310.29,67.19 L310.74,68.04 L311.18,68.92 L311.63,69.83 L312.08,70.77 L312.52,71.74 L312.97,72.74 L313.41,73.77 L313.86,74.83 L314.31,75.91 L314.75,77.02 L315.20,78.16 L315.65,79.32 L316.09,80.51 L316.54,81.72 L316.98,83.02 L317.43,84.53 L317.88,86.23 L318.32,88.07 L318.77,90.02 L319.22,92.02 L319.66,94.03 L320.11,96.02 L320.55,97.95 L321.00,99.76 L321.45,101.46 L321.89,103.11 L322.34,104.73 L322.79,106.33 L323.23,107.89 L323.68,109.44 L324.12,110.98 L324.57,112.50 L325.02,114.02 L325.46,115.54 L325.91,117.06 L326.35,118.59 L326.80,120.13 L327.25,121.69 L327.69,123.28 L328.14,124.88 L328.59,126.52 L329.03,128.20 L329.48,129.91 L329.92,131.69 L330.37,133.50 L330.82,135.35 L331.26,137.23 L331.71,139.11 L332.16,141.00 L332.60,142.87 L333.05,144.73 L333.49,146.56 L333.94,148.34 L334.39,150.08 L334.83,151.79 L335.28,153.49 L335.73,155.19 L336.17,156.89 L336.62,158.57 L337.06,160.26 L337.51,161.93 L337.96,163.60 L338.40,165.27 L338.85,166.92 L339.29,168.58 L339.74,170.22 L340.19,171.87 L340.63,173.50 L341.08,175.13 L341.53,176.75 L341.97,178.37 L342.42,179.98 L342.86,181.59 L343.31,183.19 L343.76,184.78 L344.20,186.37 L344.65,187.96 L345.10,189.53 L345.54,191.10 L345.99,192.67 L346.43,194.23 L346.88,195.78 L347.33,197.33 L347.77,198.87 L348.22,200.41 L348.67,201.94 L349.11,203.46 L349.56,204.98 L350.00,206.49 L350.45,208.00 L350.90,209.50 L351.34,211.00 L351.79,212.49 L352.23,213.97 L352.68,215.45 L353.13,216.92 L353.57,218.38 L354.02,219.84 L354.47,221.30 L354.91,222.75 L355.36,224.19 L355.80,225.62 L356.25,227.05 L356.70,228.48 L357.14,229.90 L357.59,231.31 L358.04,232.72 L358.48,234.13 L358.93,235.54 L359.37,236.94 L359.82,238.35 L360.27,239.74 L360.71,241.14 L361.16,242.53 L361.61,243.92 L362.05,245.31 L362.50,246.69 L362.94,248.07 L363.39,249.44 L363.84,250.81 L364.28,252.18 L364.73,253.55 L365.17,254.91 L365.62,256.26 L366.07,257.62 L366.51,258.96 L366.96,260.31 L367.41,261.65 L367.85,262.98 L368.30,264.31 L368.74,265.64 L369.19,266.96 L369.64,268.28 L370.08,269.59 L370.53,270.90 L370.98,272.20 L371.42,273.50 L371.87,274.79 L372.31,276.08 L372.76,277.36 L373.21,278.63 L373.65,279.90 L374.10,281.17 L374.55,282.43 L374.99,283.68 L375.44,284.93 L375.88,286.17 L376.33,287.40 L376.78,288.63 L377.22,289.85 L377.67,291.07 L378.11,292.28 L378.56,293.48 L379.01,294.68 L379.45,295.87 L379.90,297.05 L380.35,298.23 L380.79,299.40 L381.24,300.56 L381.68,301.72 L382.13,302.87 L382.58,304.01 L383.02,305.14 L383.47,306.27 L383.92,307.39 L384.36,308.50 L384.81,309.60 L385.25,310.70 L385.70,311.80 L386.15,312.91 L386.59,314.01 L387.04,315.11 L387.48,316.20 L387.93,317.29 L388.38,318.36 L388.82,319.43 L389.27,320.48 L389.72,321.51 L390.16,322.53 L390.61,323.52 L391.05,324.49 L391.50,325.44 L391.95,326.35 L392.39,327.24 L392.84,328.09 L393.29,328.91 L393.73,329.69 L394.18,330.44 L394.62,331.16 L395.07,331.86 L395.52,332.56 L395.96,333.23 L396.41,333.90 L396.86,334.55 L397.30,335.19 L397.75,335.82 L398.19,336.43 L398.64,337.04 L399.09,337.63 L399.53,338.21 L399.98,338.79 L400.42,339.35 L400.87,339.91 L401.32,340.46 L401.76,341.00 L402.21,341.53 L402.66,342.06 L403.10,342.58 L403.55,343.09 L403.99,343.60 L404.44,344.11 L404.89,344.61 L405.33,345.10 L405.78,345.60 L406.23,346.09 L406.67,346.57 L407.12,347.06 L407.56,347.54 L408.01,348.03 L408.46,348.51 L408.90,348.99 L409.35,349.48 L409.80,349.96 L410.24,350.45 L410.69,350.93 L411.13,351.41 L411.58,351.88 L412.03,352.35 L412.47,352.81 L412.92,353.27 L413.36,353.72 L413.81,354.17 L414.26,354.61 L414.70,355.05 L415.15,355.49 L415.60,355.92 L416.04,356.35 L416.49,356.78 L416.93,357.21 L417.38,357.63 L417.83,358.05 L418.27,358.47 L418.72,358.89 L419.17,359.31 L419.61,359.72 L420.06,360.14 L420.50,360.56 L420.95,360.98 L421.40,361.42 L421.84,361.88 L422.29,362.35 L422.74,362.83 L423.18,363.32 L423.63,363.82 L424.07,364.33 L424.52,364.84 L424.97,365.36 L425.41,365.88 L425.86,366.40 L426.30,366.92 L426.75,367.44 L427.20,367.95 L427.64,368.46 L428.09,368.97 L428.54,369.47 L428.98,369.96 L429.43,370.44 L429.87,370.90 L430.32,371.36 L430.77,371.80 L431.21,372.22 L431.66,372.63 L432.11,373.01 L432.55,373.38 L433.00,373.72 L433.44,374.04 L433.89,374.34 L434.34,374.61 L434.78,374.85 L435.23,375.06 L435.68,375.24 L436.12,375.39 L436.57,375.51 L437.01,375.59 L437.46,375.63 L437.91,375.64 L438.35,375.63 L438.80,375.60 L439.24,375.56 L439.69,375.51 L440.14,375.44 L440.58,375.36 L441.03,375.28 L441.48,375.18 L441.92,375.07 L442.37,374.95 L442.81,374.82 L443.26,374.68 L443.71,374.54 L444.15,374.39 L444.60,374.23 L445.05,374.06 L445.49,373.89 L445.94,373.71 L446.38,373.53 L446.83,373.34 L447.28,373.15 L447.72,372.96 L448.17,372.76 L448.62,372.56 L449.06,372.36 L449.51,372.16 L449.95,371.96 L450.40,371.76 L450.85,371.56 L451.29,371.36 L451.74,371.16 L452.18,370.97 L452.63,370.77 L453.08,370.58 L453.52,370.40 L453.97,370.22 L454.42,370.03 L454.86,369.85 L455.31,369.66 L455.75,369.47 L456.20,369.28 L456.65,369.08 L457.09,368.88 L457.54,368.68 L457.99,368.48 L458.43,368.27 L458.88,368.07 L459.32,367.85 L459.77,367.64 L460.22,367.42 L460.66,367.20 L461.11,366.98 L461.56,366.75 L462.00,366.52 L462.45,366.29 L462.89,366.05 L463.34,365.81 L463.79,365.57 L464.23,365.32 L464.68,365.07 L465.12,364.82 L465.57,364.56 L466.02,364.30 L466.46,364.04 L466.91,363.77 L467.36,363.50 L467.80,363.22 L468.25,362.94 L468.69,362.65 L469.14,362.37 L469.59,362.07 L470.03,361.75 L470.48,361.41 L470.93,361.06 L471.37,360.70 L471.82,360.32 L472.26,359.93 L472.71,359.54 L473.16,359.13 L473.60,358.72 L474.05,358.30 L474.49,357.87 L474.94,357.44 L475.39,357.01 L475.83,356.58 L476.28,356.15 L476.73,355.73 L477.17,355.30 L477.62,354.88 L478.06,354.47 L478.51,354.06 L478.96,353.67 L479.40,353.28 L479.85,352.90 L480.30,352.54 L480.74,352.19 L481.19,351.86 L481.63,351.54 L482.08,351.23 L482.53,350.93 L482.97,350.61 L483.42,350.30 L483.87,349.98 L484.31,349.66 L484.76,349.34 L485.20,349.02 L485.65,348.71 L486.10,348.40 L486.54,348.09 L486.99,347.80 L487.43,347.51 L487.88,347.23 L488.33,346.96 L488.77,346.71 L489.22,346.47 L489.67,346.24 L490.11,346.03 L490.56,345.83 L491.00,345.66 L491.45,345.51 L491.90,345.37 L492.34,345.26 L492.79,345.18 L493.24,345.11 L493.68,345.06 L494.13,345.00 L494.57,344.94 L495.02,344.89 L495.47,344.84 L495.91,344.79 L496.36,344.74 L496.81,344.69 L497.25,344.65 L497.70,344.60 L498.14,344.56 L498.59,344.52 L499.04,344.49 L499.48,344.45 L499.93,344.42 L500.37,344.39 L500.82,344.36 L501.27,344.33 L501.71,344.31 L502.16,344.29 L502.61,344.27 L503.05,344.25 L503.50,344.24 L503.94,344.23 L504.39,344.22 L504.84,344.21 L505.28,344.21 L505.73,344.21 L506.18,344.22 L506.62,344.23 L507.07,344.25 L507.51,344.27 L507.96,344.30 L508.41,344.34 L508.85,344.37 L509.30,344.41 L509.75,344.46 L510.19,344.50 L510.64,344.55 L511.08,344.60 L511.53,344.65 L511.98,344.70 L512.42,344.75 L512.87,344.80 L513.31,344.85 L513.76,344.89 L514.21,344.93 L514.65,344.98 L515.10,345.01 L515.55,345.05 L515.99,345.08 L516.44,345.10 L516.88,345.12 L517.33,345.13 L517.78,345.14 L518.22,345.14 L518.67,345.12 L519.12,345.08 L519.56,345.02 L520.01,344.94 L520.45,344.84 L520.90,344.73 L521.35,344.61 L521.79,344.47 L522.24,344.33 L522.69,344.17 L523.13,344.00 L523.58,343.83 L524.02,343.64 L524.47,343.46 L524.92,343.27 L525.36,343.07 L525.81,342.87 L526.25,342.68 L526.70,342.48 L527.15,342.29 L527.59,342.10 L528.04,341.91 L528.49,341.73 L528.93,341.55 L529.38,341.38 L529.82,341.22 L530.27,341.07 L530.72,340.92 L531.16,340.77 L531.61,340.62 L532.06,340.47 L532.50,340.32 L532.95,340.17 L533.39,340.01 L533.84,339.86 L534.29,339.71 L534.73,339.56 L535.18,339.40 L535.63,339.25 L536.07,339.10 L536.52,338.94 L536.96,338.79 L537.41,338.64 L537.86,338.48 L538.30,338.33 L538.75,338.18 L539.19,338.02 L539.64,337.87 L540.09,337.71 L540.53,337.56 L540.98,337.40 L541.43,337.25 L541.87,337.09 L542.32,336.94 L542.76,336.78 L543.21,336.63 L543.66,336.47 L544.10,336.32 L544.55,336.16 L545.00,336.01 L545.44,335.85 L545.89,335.70 L546.33,335.54 L546.78,335.39 L547.23,335.23 L547.67,335.08 L548.12,334.92 L548.57,334.77 L549.01,334.61 L549.46,334.46 L549.90,334.30 L550.35,334.15 L550.80,333.99 L551.24,333.84 L551.69,333.68 L552.13,333.53 L552.58,333.37 L553.03,333.22 L553.47,333.07 L553.92,332.91 L554.37,332.76 L554.81,332.60 L555.26,332.45 L555.70,332.30 L556.15,332.14 L556.60,331.99 L557.04,331.84 L557.49,331.68 L557.94,331.53 L558.38,331.38 L558.83,331.22 L559.27,331.06 L559.72,330.90 L560.17,330.73 L560.61,330.56 L561.06,330.38 L561.51,330.20 L561.95,330.02 L562.40,329.83 L562.84,329.64 L563.29,329.45 L563.74,329.26 L564.18,329.07 L564.63,328.87 L565.07,328.67 L565.52,328.47 L565.97,328.27 L566.41,328.07 L566.86,327.87 L567.31,327.67 L567.75,327.47 L568.20,327.26 L568.64,327.06 L569.09,326.86 L569.54,326.66 L569.98,326.47 L570.43,326.27 L570.88,326.07 L571.32,325.88 L571.77,325.69 L572.21,325.50 L572.66,325.31 L573.11,325.13 L573.55,324.95 L574.00,324.77 L574.44,324.60 L574.89,324.43 L575.34,324.26 L575.78,324.10 L576.23,323.94 L576.68,323.79 L577.12,323.64 L577.57,323.50 L578.01,323.36 L578.46,323.23 L578.91,323.11 L579.35,322.99 L579.80,322.87 L580.25,322.77 L580.69,322.67 L581.14,322.57 L581.58,322.49 L582.03,322.41 L582.48,322.34 L582.92,322.28 L583.37,322.23 L583.82,322.18 L584.26,322.15 L584.71,322.12 L585.15,322.10 L585.60,322.09 L586.05,322.10 L586.49,322.12 L586.94,322.16 L587.38,322.22 L587.83,322.29 L588.28,322.38 L588.72,322.49 L589.17,322.61 L589.62,322.75 L590.06,322.90 L590.51,323.06 L590.95,323.23 L591.40,323.41 L591.85,323.60 L592.29,323.81 L592.74,324.02 L593.19,324.23 L593.63,324.46 L594.08,324.69 L594.52,324.92 L594.97,325.16 L595.42,325.40 L595.86,325.65 L596.31,325.89 L596.76,326.14 L597.20,326.39 L597.65,326.63 L598.09,326.88 L598.54,327.12 L598.99,327.36 L599.43,327.60 L599.88,327.83 L600.32,328.06 L600.77,328.31 L601.22,328.57 L601.66,328.85 L602.11,329.14 L602.56,329.45 L603.00,329.77 L603.45,330.10 L603.89,330.44 L604.34,330.80 L604.79,331.16 L605.23,331.54 L605.68,331.93 L606.13,332.32 L606.57,332.72 L607.02,333.13 L607.46,333.55 L607.91,333.97 L608.36,334.40 L608.80,334.83 L609.25,335.27 L609.70,335.71 L610.14,336.16 L610.59,336.60 L611.03,337.05 L611.48,337.50 L611.93,337.95 L612.37,338.40 L612.82,338.85 L613.26,339.30 L613.71,339.74 L614.16,340.18 L614.60,340.62 L615.05,341.06 L615.50,341.49 L615.94,341.91 L616.39,342.33 L616.83,342.75 L617.28,343.15 L617.73,343.55 L618.17,343.94 L618.62,344.32 L619.07,344.69 L619.51,345.05 L619.96,345.40 L620.40,345.74 L620.85,346.06 L621.30,346.38 L621.74,346.68 L622.19,346.96 L622.64,347.23 L623.08,347.49 L623.53,347.72 L623.97,347.94 L624.42,348.15 L624.87,348.33 L625.31,348.50 L625.76,348.65 L626.20,348.78 L626.65,348.89 L627.10,348.97 L627.54,349.04 L627.99,349.08 L628.44,349.10 L628.88,349.10 L629.33,349.08 L629.77,349.05 L630.22,349.01 L630.67,348.96 L631.11,348.90 L631.56,348.83 L632.01,348.74 L632.45,348.65 L632.90,348.54 L633.34,348.43 L633.79,348.31 L634.24,348.18 L634.68,348.04 L635.13,347.89 L635.58,347.73 L636.02,347.57 L636.47,347.40 L636.91,347.23 L637.36,347.04 L637.81,346.86 L638.25,346.66 L638.70,346.46 L639.14,346.26 L639.59,346.05 L640.04,345.84 L640.48,345.62 L640.93,345.40 L641.38,345.18 L641.82,344.96 L642.27,344.73 L642.71,344.50 L643.16,344.27 L643.61,344.04 L644.05,343.81 L644.50,343.57 L644.95,343.34 L645.39,343.11 L645.84,342.87 L646.28,342.64 L646.73,342.41 L647.18,342.18 L647.62,341.96 L648.07,341.73 L648.52,341.51 L648.96,341.29 L649.41,341.08 L649.85,340.87 L650.30,340.66 L650.75,340.46 L651.19,340.26 L651.64,340.07 L652.08,339.88 L652.53,339.70 L652.98,339.53 L653.42,339.36 L653.87,339.20 L654.32,339.03 L654.76,338.86 L655.21,338.69 L655.65,338.51 L656.10,338.33 L656.55,338.15 L656.99,337.96 L657.44,337.78 L657.89,337.59 L658.33,337.40 L658.78,337.20 L659.22,337.01 L659.67,336.81 L660.12,336.61 L660.56,336.42 L661.01,336.22 L661.45,336.02 L661.90,335.81 L662.35,335.61 L662.79,335.41 L663.24,335.21 L663.69,335.01 L664.13,334.81 L664.58,334.61 L665.02,334.41 L665.47,334.21 L665.92,334.01 L666.36,333.82 L666.81,333.62 L667.26,333.43 L667.70,333.24 L668.15,333.05 L668.59,332.86 L669.04,332.68 L669.49,332.49 L669.93,332.31 L670.38,332.14 L670.83,331.96 L671.27,331.79 L671.72,331.63 L672.16,331.46 L672.61,331.30 L673.06,331.15 L673.50,331.00 L673.95,330.85 L674.39,330.71 L674.84,330.57 L675.29,330.44 L675.73,330.31 L676.18,330.18 L676.63,330.07 L677.07,329.96 L677.52,329.85 L677.96,329.75 L678.41,329.66 L678.86,329.57 L679.30,329.49 L679.75,329.41 L680.20,329.35 L680.64,329.29 L681.09,329.23 L681.53,329.19 L681.98,329.15 L682.43,329.12 L682.87,329.10 L683.32,329.08 L683.77,329.08 L684.21,329.08 L684.66,329.09 L685.10,329.11 L685.55,329.14 L686.00,329.18 L686.44,329.23 L686.89,329.28 L687.33,329.35 L687.78,329.42 L688.23,329.50 L688.67,329.59 L689.12,329.68 L689.57,329.78 L690.01,329.89 L690.46,330.01 L690.90,330.13 L691.35,330.26 L691.80,330.40 L692.24,330.54 L692.69,330.68 L693.14,330.84 L693.58,331.00 L694.03,331.16 L694.47,331.33 L694.92,331.51 L695.37,331.69 L695.81,331.87 L696.26,332.06 L696.71,332.26 L697.15,332.45 L697.60,332.66 L698.04,332.86 L698.49,333.07 L698.94,333.29 L699.38,333.50 L699.83,333.72 L700.27,333.95 L700.72,334.17 L701.17,334.40 L701.61,334.63 L702.06,334.87 L702.51,335.10 L702.95,335.34 L703.40,335.58 L703.84,335.82 L704.29,336.06 L704.74,336.30 L705.18,336.55 L705.63,336.79 L706.08,337.04 L706.52,337.28 L706.97,337.53 L707.41,337.78 L707.86,338.02 L708.31,338.27 L708.75,338.52 L709.20,338.76 L709.65,339.01 L710.09,339.25 L710.54,339.49 L710.98,339.74 L711.43,339.98 L711.88,340.22 L712.32,340.45 L712.77,340.69 L713.21,340.93 L713.66,341.19 L714.11,341.44 L714.55,341.71 L715.00,341.97 L715.45,342.25 L715.89,342.53 L716.34,342.81 L716.78,343.10 L717.23,343.40 L717.68,343.70 L718.12,344.01 L718.57,344.32 L719.02,344.63 L719.46,344.95 L719.91,345.27 L720.35,345.60 L720.80,345.93 L721.25,346.26 L721.69,346.60 L722.14,346.94 L722.59,347.28 L723.03,347.63 L723.48,347.98 L723.92,348.33 L724.37,348.69 L724.82,349.05 L725.26,349.41 L725.71,349.77 L726.15,350.13 L726.60,350.50 L727.05,350.86 L727.49,351.23 L727.94,351.60 L728.39,351.97 L728.83,352.34 L729.28,352.71 L729.72,353.09 L730.17,353.46 L730.62,353.83 L731.06,354.21 L731.51,354.58 L731.96,354.95 L732.40,355.32 L732.85,355.70 L733.29,356.07 L733.74,356.44 L734.19,356.81 L734.63,357.18 L735.08,357.55 L735.53,357.91 L735.97,358.28 L736.42,358.66 L736.86,359.05 L737.31,359.45 L737.76,359.86 L738.20,360.28 L738.65,360.71 L739.09,361.14 L739.54,361.58 L739.99,362.02 L740.43,362.47 L740.88,362.93 L741.33,363.38 L741.77,363.84 L742.22,364.30 L742.66,364.77 L743.11,365.23 L743.56,365.69 L744.00,366.15 L744.45,366.61 L744.90,367.07 L745.34,367.53 L745.79,367.98 L746.23,368.43 L746.68,368.87 L747.13,369.31 L747.57,369.74 L748.02,370.16 L748.46,370.58 L748.91,370.98 L749.36,371.38 L749.80,371.77 L750.25,372.15 L750.70,372.51 L751.14,372.87 L751.59,373.21 L752.03,373.54 L752.48,373.85 L752.93,374.15 L753.37,374.43 L753.82,374.70 L754.27,374.95 L754.71,375.18 L755.16,375.39 L755.60,375.60 L756.05,375.80 L756.50,376.00 L756.94,376.20 L757.39,376.40 L757.84,376.60 L758.28,376.80 L758.73,377.00 L759.17,377.20 L759.62,377.39 L760.07,377.59 L760.51,377.78 L760.96,377.97 L761.40,378.16 L761.85,378.35 L762.30,378.54 L762.74,378.72 L763.19,378.91 L763.64,379.09 L764.08,379.27 L764.53,379.45 L764.97,379.63 L765.42,379.80 L765.87,379.97 L766.31,380.14 L766.76,380.31 L767.21,380.47 L767.65,380.64 L768.10,380.80 L768.54,380.95 L768.99,381.11 L769.44,381.26 L769.88,381.41 L770.33,381.55 L770.78,381.70 L771.22,381.84 L771.67,381.97 L772.11,382.11 L772.56,382.24 L773.01,382.36 L773.45,382.49 L773.90,382.61 L774.34,382.72 L774.79,382.84 L775.24,382.95 L775.68,383.05 L776.13,383.15 L776.58,383.25 L777.02,383.34 L777.47,383.43 L777.91,383.52 L778.36,383.60 L778.81,383.67 L779.25,383.75 L779.70,383.81 L780.15,383.88 L780.59,383.94 L781.04,383.99 L781.48,384.04 L781.93,384.08 L782.38,384.12 L782.82,384.16 L783.27,384.19 L783.72,384.21 L784.16,384.23 L784.61,384.24 L785.05,384.25 L785.50,384.25" stroke="#00eeff" stroke-width="2.1"/>
<path d="M250.50,292.88 L250.72,286.89 L250.95,281.95 L251.17,278.88 L251.39,273.75 L251.62,268.06 L251.84,270.82 L252.06,266.40 L252.28,264.94 L252.51,263.16 L252.73,259.13 L252.95,254.00 L253.18,249.34 L253.40,244.62 L253.62,241.40 L253.85,238.99 L254.07,235.40 L254.29,235.03 L254.51,234.15 L254.74,230.09 L254.96,230.80 L255.18,228.27 L255.41,224.05 L255.63,225.29 L255.85,224.29 L256.08,220.75 L256.30,219.09 L256.52,214.87 L256.74,214.05 L256.97,212.56 L257.19,210.80 L257.41,210.39 L257.64,210.08 L257.86,207.78 L258.08,203.88 L258.31,204.39 L258.53,201.98 L258.75,202.31 L258.97,197.28 L259.20,199.12 L259.42,196.90 L259.64,192.17 L259.87,192.24 L260.09,189.49 L260.31,189.66 L260.54,188.48 L260.76,190.45 L260.98,186.74 L261.20,184.66 L261.43,180.64 L261.65,180.83 L261.87,177.86 L262.10,178.88 L262.32,176.13 L262.54,175.05 L262.77,174.30 L262.99,169.79 L263.21,170.59 L263.43,166.69 L263.66,167.27 L263.88,165.88 L264.10,164.19 L264.33,162.06 L264.55,162.19 L264.77,158.59 L265.00,157.43 L265.22,155.22 L265.44,156.12 L265.66,152.19 L265.89,155.45 L266.11,152.12 L266.33,151.92 L266.56,147.26 L266.78,146.39 L267.00,147.48 L267.23,143.12 L267.45,141.62 L267.67,140.72 L267.89,140.99 L268.12,141.26 L268.34,138.68 L268.56,132.48 L268.79,131.45 L269.01,130.80 L269.23,125.69 L269.46,125.18 L269.68,123.93 L269.90,123.38 L270.12,122.14 L270.35,122.23 L270.57,122.51 L270.79,117.83 L271.02,118.92 L271.24,117.98 L271.46,118.78 L271.69,116.56 L271.91,119.03 L272.13,115.80 L272.35,115.15 L272.58,112.09 L272.80,105.48 L273.02,104.13 L273.25,102.24 L273.47,98.99 L273.69,95.12 L273.92,96.04 L274.14,93.89 L274.36,92.50 L274.59,93.03 L274.81,91.34 L275.03,89.47 L275.25,88.54 L275.48,91.95 L275.70,88.05 L275.92,91.84 L276.15,87.55 L276.37,86.08 L276.59,87.69 L276.82,84.88 L277.04,81.94 L277.26,85.03 L277.48,81.97 L277.71,80.97 L277.93,81.50 L278.15,79.11 L278.38,79.75 L278.60,78.45 L278.82,76.61 L279.05,76.61 L279.27,75.11 L279.49,71.52 L279.71,72.33 L279.94,72.52 L280.16,72.15 L280.38,68.40 L280.61,70.00 L280.83,66.67 L281.05,67.85 L281.28,66.92 L281.50,64.51 L281.72,64.77 L281.94,65.48 L282.17,66.48 L282.39,64.62 L282.61,66.90 L282.84,64.56 L283.06,68.38 L283.28,66.26 L283.51,64.88 L283.73,61.88 L283.95,64.15 L284.17,60.81 L284.40,60.93 L284.62,60.33 L284.84,60.58 L285.07,59.05 L285.29,62.17 L285.51,62.24 L285.74,63.47 L285.96,64.20 L286.18,62.75 L286.40,58.42 L286.63,57.79 L286.85,60.17 L287.07,56.80 L287.30,56.18 L287.52,54.69 L287.74,53.61 L287.97,54.52 L288.19,51.30 L288.41,53.85 L288.63,53.51 L288.86,54.05 L289.08,56.69 L289.30,57.56 L289.53,55.92 L289.75,54.02 L289.97,53.63 L290.20,54.32 L290.42,57.95 L290.64,55.27 L290.86,56.32 L291.09,55.67 L291.31,56.41 L291.53,53.43 L291.76,56.40 L291.98,55.99 L292.20,56.12 L292.43,55.57 L292.65,56.21 L292.87,56.74 L293.09,54.86 L293.32,57.10 L293.54,54.55 L293.76,56.93 L293.99,55.22 L294.21,58.70 L294.43,57.50 L294.66,54.38 L294.88,55.79 L295.10,54.17 L295.32,54.60 L295.55,54.58 L295.77,56.47 L295.99,54.92 L296.22,57.96 L296.44,55.16 L296.66,55.09 L296.89,55.95 L297.11,59.29 L297.33,57.03 L297.56,56.04 L297.78,56.08 L298.00,53.42 L298.22,52.92 L298.45,55.70 L298.67,53.42 L298.89,53.48 L299.12,56.43 L299.34,53.71 L299.56,53.77 L299.79,57.93 L300.01,57.61 L300.23,58.89 L300.45,60.07 L300.68,62.64 L300.90,59.51 L301.12,58.34 L301.35,55.93 L301.57,55.10 L301.79,57.42 L302.02,56.60 L302.24,57.17 L302.46,58.13 L302.68,62.32 L302.91,63.55 L303.13,61.19 L303.35,63.82 L303.58,62.92 L303.80,61.82 L304.02,64.95 L304.25,66.22 L304.47,66.05 L304.69,65.66 L304.91,68.48 L305.14,67.15 L305.36,67.93 L305.58,65.18 L305.81,64.65 L306.03,67.45 L306.25,68.12 L306.48,67.91 L306.70,70.06 L306.92,70.46 L307.14,70.36 L307.37,69.87 L307.59,71.69 L307.81,68.72 L308.04,69.82 L308.26,71.69 L308.48,73.62 L308.71,71.45 L308.93,75.23 L309.15,76.16 L309.37,77.26 L309.60,78.42 L309.82,75.21 L310.04,78.43 L310.27,78.56 L310.49,76.66 L310.71,78.23 L310.94,80.75 L311.16,79.78 L311.38,77.60 L311.60,80.16 L311.83,79.38 L312.05,83.33 L312.27,81.23 L312.50,80.92 L312.72,80.10 L312.94,80.34 L313.17,82.06 L313.39,84.98 L313.61,84.79 L313.83,85.02 L314.06,88.09 L314.28,87.65 L314.50,86.25 L314.73,85.29 L314.95,85.05 L315.17,89.69 L315.40,91.10 L315.62,90.31 L315.84,92.94 L316.06,93.85 L316.29,93.10 L316.51,93.56 L316.73,94.52 L316.96,95.93 L317.18,99.08 L317.40,99.02 L317.63,101.73 L317.85,99.48 L318.07,99.97 L318.29,100.82 L318.52,103.14 L318.74,104.78 L318.96,105.78 L319.19,108.49 L319.41,105.55 L319.63,107.62 L319.86,108.89 L320.08,108.69 L320.30,108.74 L320.53,111.50 L320.75,110.75 L320.97,112.02 L321.19,116.28 L321.42,118.76 L321.64,116.50 L321.86,115.15 L322.09,118.12 L322.31,114.48 L322.53,113.54 L322.76,113.98 L322.98,119.77 L323.20,122.80 L323.42,121.59 L323.65,127.83 L323.87,128.99 L324.09,128.11 L324.32,129.58 L324.54,129.29 L324.76,133.10 L324.99,130.76 L325.21,134.48 L325.43,131.81 L325.65,134.59 L325.88,132.53 L326.10,135.21 L326.32,135.27 L326.55,136.59 L326.77,135.69 L326.99,137.83 L327.22,140.85 L327.44,138.30 L327.66,141.23 L327.88,143.61 L328.11,148.44 L328.33,148.55 L328.55,149.60 L328.78,150.30 L329.00,151.18 L329.22,149.88 L329.45,152.93 L329.67,154.01 L329.89,152.07 L330.11,154.75 L330.34,156.61 L330.56,154.48 L330.78,156.36 L331.01,155.47 L331.23,157.51 L331.45,158.07 L331.68,159.65 L331.90,161.92 L332.12,163.85 L332.34,162.70 L332.57,162.57 L332.79,166.02 L333.01,166.64 L333.24,167.33 L333.46,164.03 L333.68,164.95 L333.91,168.88 L334.13,166.01 L334.35,170.20 L334.57,169.99 L334.80,171.78 L335.02,171.85 L335.24,177.63 L335.47,177.44 L335.69,176.56 L335.91,179.07 L336.14,178.19 L336.36,177.25 L336.58,175.58 L336.80,176.25 L337.03,176.09 L337.25,176.95 L337.47,178.31 L337.70,179.28 L337.92,182.06 L338.14,183.79 L338.37,187.05 L338.59,187.91 L338.81,184.75 L339.03,186.85 L339.26,183.22 L339.48,185.48 L339.70,188.36 L339.93,187.59 L340.15,193.05 L340.37,192.62 L340.60,195.16 L340.82,191.44 L341.04,193.59 L341.26,193.01 L341.49,195.81 L341.71,193.58 L341.93,194.03 L342.16,194.40 L342.38,193.47 L342.60,196.45 L342.83,196.91 L343.05,195.74 L343.27,194.95 L343.49,196.89 L343.72,195.16 L343.94,197.59 L344.16,196.64 L344.39,196.53 L344.61,201.08 L344.83,199.55 L345.06,204.18 L345.28,200.97 L345.50,204.14 L345.73,205.01 L345.95,204.22 L346.17,206.10 L346.39,206.15 L346.62,209.78 L346.84,207.94 L347.06,208.27 L347.29,206.80 L347.51,211.22 L347.73,209.85 L347.96,209.80 L348.18,211.11 L348.40,214.66 L348.62,214.15 L348.85,217.67 L349.07,218.91 L349.29,216.27 L349.52,219.59 L349.74,218.34 L349.96,216.66 L350.19,216.73 L350.41,217.74 L350.63,217.11 L350.85,219.51 L351.08,220.05 L351.30,220.39 L351.52,221.76 L351.75,222.23 L351.97,223.97 L352.19,224.71 L352.42,227.47 L352.64,228.04 L352.86,231.32 L353.08,231.28 L353.31,229.30 L353.53,229.73 L353.75,230.43 L353.98,228.84 L354.20,231.90 L354.42,230.48 L354.65,230.66 L354.87,231.71 L355.09,230.38 L355.31,234.22 L355.54,234.27 L355.76,234.48 L355.98,238.09 L356.21,239.62 L356.43,239.49 L356.65,239.41 L356.88,240.01 L357.10,241.44 L357.32,243.73 L357.54,244.53 L357.77,245.30 L357.99,244.68 L358.21,241.60 L358.44,244.10 L358.66,243.55 L358.88,244.51 L359.11,245.00 L359.33,245.15 L359.55,246.85 L359.77,249.78 L360.00,249.99 L360.22,246.42 L360.44,247.94 L360.67,247.78 L360.89,252.04 L361.11,249.67 L361.34,252.98 L361.56,252.59 L361.78,254.34 L362.00,253.74 L362.23,252.52 L362.45,253.22 L362.67,255.22 L362.90,254.02 L363.12,255.58 L363.34,256.05 L363.57,255.36 L363.79,257.27 L364.01,257.56 L364.23,257.09 L364.46,258.69 L364.68,264.13 L364.90,262.78 L365.13,263.50 L365.35,265.69 L365.57,267.62 L365.80,264.98 L366.02,267.35 L366.24,265.84 L366.46,266.90 L366.69,265.04 L366.91,266.01 L367.13,264.59 L367.36,264.74 L367.58,265.25 L367.80,268.54 L368.03,266.43 L368.25,270.73 L368.47,271.62 L368.70,272.59 L368.92,274.05 L369.14,273.04 L369.36,272.09 L369.59,273.24 L369.81,276.78 L370.03,278.10 L370.26,278.08 L370.48,276.92 L370.70,279.10 L370.93,277.93 L371.15,279.63 L371.37,279.94 L371.59,279.35 L371.82,279.13 L372.04,280.59 L372.26,280.75 L372.49,279.88 L372.71,280.19 L372.93,282.85 L373.16,283.01 L373.38,283.83 L373.60,287.38 L373.82,288.17 L374.05,288.73 L374.27,288.95 L374.49,286.67 L374.72,291.83 L374.94,291.70 L375.16,292.27 L375.39,291.33 L375.61,294.18 L375.83,293.23 L376.05,295.75 L376.28,296.29 L376.50,294.46 L376.72,297.38 L376.95,295.41 L377.17,296.37 L377.39,296.33 L377.62,294.68 L377.84,298.24 L378.06,295.76 L378.28,297.22 L378.51,299.41 L378.73,302.67 L378.95,299.27 L379.18,298.47 L379.40,296.94 L379.62,299.74 L379.85,297.53 L380.07,299.37 L380.29,304.01 L380.51,303.60 L380.74,305.35 L380.96,302.37 L381.18,302.83 L381.41,303.31 L381.63,305.63 L381.85,305.61 L382.08,305.79 L382.30,306.99 L382.52,306.56 L382.74,309.66 L382.97,312.26 L383.19,312.57 L383.41,315.63 L383.64,312.78 L383.86,313.01 L384.08,314.18 L384.31,312.32 L384.53,313.23 L384.75,316.04 L384.97,318.48 L385.20,319.24 L385.42,319.40 L385.64,318.49 L385.87,316.93 L386.09,313.84 L386.31,316.39 L386.54,313.81 L386.76,315.67 L386.98,315.82 L387.20,318.83 L387.43,321.47 L387.65,318.43 L387.87,321.38 L388.10,322.18 L388.32,319.60 L388.54,321.00 L388.77,324.33 L388.99,325.21 L389.21,323.06 L389.43,326.82 L389.66,325.31 L389.88,328.71 L390.10,327.06 L390.33,332.43 L390.55,332.54 L390.77,335.89 L391.00,333.82 L391.22,331.93 L391.44,334.39 L391.67,332.85 L391.89,330.91 L392.11,332.73 L392.33,335.51 L392.56,335.44 L392.78,337.29 L393.00,335.89 L393.23,338.63 L393.45,336.72 L393.67,337.42 L393.90,336.79 L394.12,338.47 L394.34,337.19 L394.56,337.69 L394.79,339.40 L395.01,341.33 L395.23,337.15 L395.46,338.18 L395.68,340.75 L395.90,339.23 L396.13,342.41 L396.35,342.24 L396.57,340.50 L396.79,341.98 L397.02,341.95 L397.24,341.11 L397.46,341.77 L397.69,341.22 L397.91,341.76 L398.13,343.39 L398.36,345.11 L398.58,344.34 L398.80,346.12 L399.02,343.80 L399.25,342.76 L399.47,345.42 L399.69,343.87 L399.92,344.15 L400.14,345.93 L400.36,345.15 L400.59,340.89 L400.81,342.11 L401.03,340.05 L401.25,343.18 L401.48,341.14 L401.70,340.72 L401.92,341.42 L402.15,345.96 L402.37,343.96 L402.59,344.69 L402.82,342.73 L403.04,345.99 L403.26,345.68 L403.48,343.95 L403.71,346.23 L403.93,346.81 L404.15,344.57 L404.38,347.26 L404.60,348.15 L404.82,346.28 L405.05,347.32 L405.27,347.73 L405.49,345.58 L405.71,343.85 L405.94,345.42 L406.16,344.97 L406.38,346.66 L406.61,345.64 L406.83,344.86 L407.05,345.91 L407.28,345.33 L407.50,347.02 L407.72,349.43 L407.94,348.39 L408.17,349.02 L408.39,349.98 L408.61,346.92 L408.84,345.08 L409.06,347.63 L409.28,345.80 L409.51,345.49 L409.73,347.52 L409.95,348.49 L410.17,348.36 L410.40,347.89 L410.62,347.54 L410.84,348.51 L411.07,351.24 L411.29,348.84 L411.51,349.42 L411.74,354.37 L411.96,354.74 L412.18,355.84 L412.40,353.11 L412.63,352.89 L412.85,356.60 L413.07,354.54 L413.30,354.24 L413.52,352.04 L413.74,349.10 L413.97,352.48 L414.19,352.07 L414.41,351.79 L414.64,353.99 L414.86,355.71 L415.08,359.11 L415.30,361.11 L415.53,359.55 L415.75,355.56 L415.97,355.82 L416.20,358.93 L416.42,356.89 L416.64,360.62 L416.87,359.60 L417.09,363.77 L417.31,359.91 L417.53,362.94 L417.76,361.26 L417.98,360.10 L418.20,360.59 L418.43,361.72 L418.65,361.38 L418.87,360.78 L419.10,362.95 L419.32,363.86 L419.54,365.64 L419.76,364.78 L419.99,365.29 L420.21,363.93 L420.43,365.27 L420.66,366.90 L420.88,366.48 L421.10,365.21 L421.33,367.51 L421.55,366.55 L421.77,364.98 L421.99,367.27 L422.22,366.17 L422.44,367.06 L422.66,370.40 L422.89,368.30 L423.11,370.12 L423.33,370.73 L423.56,369.98 L423.78,369.89 L424.00,368.39 L424.22,371.38 L424.45,368.17 L424.67,369.14 L424.89,371.19 L425.12,368.48 L425.34,371.33 L425.56,375.46 L425.79,372.92 L426.01,377.14 L426.23,377.19 L426.45,375.42 L426.68,371.69 L426.90,375.28 L427.12,371.24 L427.35,373.17 L427.57,376.32 L427.79,374.55 L428.02,375.35 L428.24,374.99 L428.46,374.60 L428.68,375.90 L428.91,375.76 L429.13,380.61 L429.35,377.66 L429.58,378.73 L429.80,375.85 L430.02,374.25 L430.25,373.12 L430.47,376.41 L430.69,376.02 L430.91,374.61 L431.14,375.71 L431.36,379.56 L431.58,377.76 L431.81,380.37 L432.03,380.06 L432.25,377.58 L432.48,378.41 L432.70,378.49 L432.92,379.36 L433.14,380.06 L433.37,382.15 L433.59,382.74 L433.81,379.00 L434.04,378.85 L434.26,377.50 L434.48,376.73 L434.71,380.08 L434.93,381.30 L435.15,382.22 L435.37,382.51 L435.60,379.89 L435.82,380.40 L436.04,379.13 L436.27,376.51 L436.49,378.02 L436.71,378.40 L436.94,375.92 L437.16,375.95 L437.38,378.36 L437.61,376.72 L437.83,379.03 L438.05,376.84 L438.27,375.93 L438.50,377.99 L438.72,378.59 L438.94,378.41 L439.17,379.00 L439.39,380.44 L439.61,376.37 L439.84,377.56 L440.06,372.28 L440.28,375.39 L440.50,375.31 L440.73,376.05 L440.95,373.03 L441.17,376.58 L441.40,374.86 L441.62,372.70 L441.84,372.48 L442.07,376.13 L442.29,373.46 L442.51,372.83 L442.73,372.22 L442.96,373.62 L443.18,373.38 L443.40,374.94 L443.63,375.28 L443.85,373.78 L444.07,377.00 L444.30,377.10 L444.52,376.65 L444.74,377.73 L444.96,377.57 L445.19,372.90 L445.41,374.53 L445.63,374.88 L445.86,371.79 L446.08,374.55 L446.30,373.70 L446.53,371.08 L446.75,371.77 L446.97,372.67 L447.19,374.18 L447.42,371.89 L447.64,372.47 L447.86,371.86 L448.09,373.78 L448.31,374.54 L448.53,373.08 L448.76,375.62 L448.98,374.77 L449.20,370.41 L449.42,372.11 L449.65,371.67 L449.87,373.05 L450.09,370.38 L450.32,371.13 L450.54,371.15 L450.76,369.68 L450.99,370.80 L451.21,369.13 L451.43,367.13 L451.65,365.27 L451.88,365.83 L452.10,366.69 L452.32,367.72 L452.55,370.97 L452.77,368.01 L452.99,372.52 L453.22,372.32 L453.44,369.32 L453.66,367.88 L453.88,366.90 L454.11,367.67 L454.33,368.55 L454.55,368.76 L454.78,364.31 L455.00,363.22 L455.22,366.67 L455.45,364.29 L455.67,367.10 L455.89,367.93 L456.11,366.80 L456.34,368.41 L456.56,365.82 L456.78,366.81 L457.01,364.51 L457.23,365.33 L457.45,363.29 L457.68,363.02 L457.90,366.25 L458.12,367.59 L458.34,365.87 L458.57,368.67 L458.79,370.22 L459.01,369.08 L459.24,363.09 L459.46,363.95 L459.68,366.23 L459.91,364.52 L460.13,364.86 L460.35,364.90 L460.58,361.70 L460.80,361.18 L461.02,365.33 L461.24,366.31 L461.47,366.31 L461.69,364.81 L461.91,365.35 L462.14,363.95 L462.36,363.56 L462.58,364.29 L462.81,360.99 L463.03,364.59 L463.25,361.60 L463.47,364.21 L463.70,363.16 L463.92,360.51 L464.14,361.57 L464.37,362.90 L464.59,360.75 L464.81,359.63 L465.04,362.58 L465.26,361.86 L465.48,362.77 L465.70,359.79 L465.93,360.00 L466.15,359.14 L466.37,359.84 L466.60,358.00 L466.82,360.01 L467.04,356.23 L467.27,355.42 L467.49,357.05 L467.71,357.03 L467.93,355.54 L468.16,358.92 L468.38,357.40 L468.60,360.30 L468.83,358.47 L469.05,360.10 L469.27,358.37 L469.50,356.35 L469.72,359.90 L469.94,355.81 L470.16,356.32 L470.39,356.35 L470.61,355.86 L470.83,356.74 L471.06,355.54 L471.28,353.67 L471.50,356.07 L471.73,353.43 L471.95,352.23 L472.17,352.44 L472.39,353.15 L472.62,353.43 L472.84,355.60 L473.06,351.12 L473.29,354.10 L473.51,350.73 L473.73,350.91 L473.96,352.74 L474.18,353.71 L474.40,355.25 L474.62,353.42 L474.85,353.76 L475.07,353.47 L475.29,352.50 L475.52,349.10 L475.74,348.99 L475.96,353.43 L476.19,354.87 L476.41,354.19 L476.63,354.83 L476.85,354.26 L477.08,351.55 L477.30,351.05 L477.52,349.81 L477.75,349.97 L477.97,347.51 L478.19,349.27 L478.42,348.95 L478.64,348.72 L478.86,346.57 L479.08,349.74 L479.31,348.00 L479.53,350.32 L479.75,347.79 L479.98,349.87 L480.20,348.80 L480.42,346.31 L480.65,346.43 L480.87,348.52 L481.09,348.12 L481.31,344.31 L481.54,349.08 L481.76,348.10 L481.98,345.06 L482.21,349.31 L482.43,348.73 L482.65,348.90 L482.88,350.02 L483.10,348.63 L483.32,348.42 L483.55,350.06 L483.77,351.21 L483.99,347.88 L484.21,347.54 L484.44,347.96 L484.66,349.29 L484.88,347.29 L485.11,347.14 L485.33,348.15 L485.55,345.61 L485.78,346.78 L486.00,345.24 L486.22,346.45 L486.44,344.34 L486.67,343.46 L486.89,343.25 L487.11,344.77 L487.34,340.82 L487.56,342.10 L487.78,344.05 L488.01,344.89 L488.23,344.00 L488.45,347.32 L488.67,345.49 L488.90,345.15 L489.12,345.89 L489.34,344.09 L489.57,345.64 L489.79,345.42 L490.01,346.41 L490.24,343.75 L490.46,346.41 L490.68,344.05 L490.90,344.94 L491.13,342.45 L491.35,342.20 L491.57,346.14 L491.80,341.62 L492.02,343.45 L492.24,345.82 L492.47,343.81 L492.69,345.77 L492.91,343.14 L493.13,344.40 L493.36,343.41 L493.58,343.69 L493.80,342.25 L494.03,341.40 L494.25,341.26 L494.47,344.44 L494.70,343.86 L494.92,347.00 L495.14,345.58 L495.36,342.88 L495.59,346.92 L495.81,343.71 L496.03,344.73 L496.26,346.26 L496.48,344.04 L496.70,346.38 L496.93,343.60 L497.15,347.14 L497.37,346.44 L497.59,342.80 L497.82,343.46 L498.04,344.25 L498.26,342.17 L498.49,342.92 L498.71,341.37 L498.93,339.70 L499.16,338.35 L499.38,341.71 L499.60,339.55 L499.82,338.37 L500.05,341.49 L500.27,340.81 L500.49,344.86 L500.72,342.38 L500.94,344.67 L501.16,343.57 L501.39,343.57 L501.61,342.27 L501.83,345.16 L502.05,341.82 L502.28,344.37 L502.50,344.30 L502.72,344.27 L502.95,343.60 L503.17,344.55 L503.39,344.59 L503.62,350.06 L503.84,349.71 L504.06,348.37 L504.28,344.90 L504.51,344.64 L504.73,343.82 L504.95,342.41 L505.18,343.18 L505.40,345.22 L505.62,346.40 L505.85,344.89 L506.07,343.20 L506.29,344.86 L506.52,347.64 L506.74,345.66 L506.96,345.26 L507.18,343.68 L507.41,343.75 L507.63,343.11 L507.85,347.46 L508.08,348.78 L508.30,349.06 L508.52,348.08 L508.75,348.46 L508.97,348.90 L509.19,346.92 L509.41,348.26 L509.64,346.08 L509.86,349.63 L510.08,350.54 L510.31,346.83 L510.53,348.47 L510.75,345.15 L510.98,345.92 L511.20,346.71 L511.42,349.45 L511.64,347.15 L511.87,351.00 L512.09,346.78 L512.31,346.53 L512.54,348.40 L512.76,348.99 L512.98,346.10 L513.21,349.07 L513.43,351.65 L513.65,350.09 L513.87,350.51 L514.10,348.87 L514.32,347.54 L514.54,346.70 L514.77,347.95 L514.99,351.39 L515.21,349.80 L515.44,349.11 L515.66,346.21 L515.88,350.36 L516.10,348.98 L516.33,347.87 L516.55,350.81 L516.77,351.48 L517.00,349.61 L517.22,349.89 L517.44,346.31 L517.67,349.65 L517.89,348.71 L518.11,349.07 L518.33,346.19 L518.56,348.34 L518.78,345.92 L519.00,346.27 L519.23,345.98 L519.45,348.45 L519.67,348.42 L519.90,345.09 L520.12,341.03 L520.34,341.32 L520.56,345.00 L520.79,342.85 L521.01,342.17 L521.23,341.43 L521.46,341.34 L521.68,339.20 L521.90,338.33 L522.13,340.34 L522.35,341.75 L522.57,338.92 L522.79,341.38 L523.02,339.76 L523.24,336.49 L523.46,338.45 L523.69,339.06 L523.91,337.69 L524.13,341.21 L524.36,338.26 L524.58,338.54 L524.80,340.33 L525.02,339.65 L525.25,339.97 L525.47,335.96 L525.69,339.04 L525.92,339.67 L526.14,335.36 L526.36,336.22 L526.59,335.25 L526.81,334.29 L527.03,336.89 L527.25,336.36 L527.48,334.68 L527.70,337.33 L527.92,335.78 L528.15,334.88 L528.37,335.00 L528.59,334.98 L528.82,337.79 L529.04,337.36 L529.26,334.83 L529.48,338.89 L529.71,337.41 L529.93,339.92 L530.15,336.04 L530.38,339.59 L530.60,338.11 L530.82,336.96 L531.05,335.82 L531.27,334.71 L531.49,335.54 L531.72,337.27 L531.94,338.70 L532.16,336.12 L532.38,335.26 L532.61,339.82 L532.83,336.03 L533.05,338.02 L533.28,335.71 L533.50,334.52 L533.72,333.22 L533.95,330.51 L534.17,331.07 L534.39,332.15 L534.61,331.11 L534.84,333.13 L535.06,334.26 L535.28,334.87 L535.51,334.19 L535.73,334.98 L535.95,335.08 L536.18,335.49 L536.40,333.92 L536.62,334.27 L536.84,331.57 L537.07,331.43 L537.29,333.58 L537.51,331.77 L537.74,329.56 L537.96,331.15 L538.18,329.98 L538.41,331.14 L538.63,331.33 L538.85,330.99 L539.07,335.30 L539.30,331.58 L539.52,332.99 L539.74,332.46 L539.97,333.17 L540.19,331.64 L540.41,333.46 L540.64,331.07 L540.86,332.76 L541.08,331.55 L541.30,330.57 L541.53,332.46 L541.75,332.77 L541.97,329.14 L542.20,329.03 L542.42,329.71 L542.64,331.26 L542.87,329.54 L543.09,331.96 L543.31,329.52 L543.53,330.50 L543.76,330.80 L543.98,331.70 L544.20,332.01 L544.43,328.22 L544.65,327.94 L544.87,326.03 L545.10,328.52 L545.32,331.42 L545.54,331.06 L545.76,332.16 L545.99,331.85 L546.21,332.54 L546.43,336.07 L546.66,331.47 L546.88,331.96 L547.10,328.28 L547.33,328.96 L547.55,329.74 L547.77,330.45 L547.99,331.77 L548.22,331.60 L548.44,331.54 L548.66,330.71 L548.89,331.30 L549.11,329.22 L549.33,330.19 L549.56,328.67 L549.78,329.28 L550.00,328.98 L550.22,331.90 L550.45,330.01 L550.67,331.43 L550.89,330.60 L551.12,331.89 L551.34,329.09 L551.56,327.74 L551.79,329.63 L552.01,329.75 L552.23,326.22 L552.45,327.56 L552.68,323.54 L552.90,327.41 L553.12,327.28 L553.35,327.59 L553.57,329.57 L553.79,327.77 L554.02,326.36 L554.24,322.92 L554.46,321.08 L554.69,324.32 L554.91,323.30 L555.13,327.44 L555.35,326.43 L555.58,327.80 L555.80,328.90 L556.02,326.77 L556.25,327.21 L556.47,329.93 L556.69,329.02 L556.92,326.44 L557.14,325.64 L557.36,327.41 L557.58,326.12 L557.81,325.43 L558.03,326.28 L558.25,326.67 L558.48,329.01 L558.70,328.81 L558.92,327.95 L559.15,326.33 L559.37,328.60 L559.59,327.66 L559.81,329.17 L560.04,326.22 L560.26,327.33 L560.48,325.09 L560.71,326.92 L560.93,324.08 L561.15,323.43 L561.38,324.67 L561.60,326.84 L561.82,326.76 L562.04,325.56 L562.27,327.74 L562.49,327.16 L562.71,324.24 L562.94,325.02 L563.16,323.29 L563.38,324.46 L563.61,324.78 L563.83,325.31 L564.05,325.41 L564.27,326.37 L564.50,322.19 L564.72,321.46 L564.94,320.45 L565.17,320.29 L565.39,320.01 L565.61,323.37 L565.84,322.90 L566.06,324.57 L566.28,325.54 L566.50,325.08 L566.73,325.15 L566.95,322.88 L567.17,322.71 L567.40,322.23 L567.62,320.88 L567.84,322.76 L568.07,323.66 L568.29,322.52 L568.51,325.68 L568.73,323.61 L568.96,324.84 L569.18,323.27 L569.40,320.94 L569.63,325.25 L569.85,322.32 L570.07,321.84 L570.30,323.61 L570.52,322.47 L570.74,324.15 L570.96,324.40 L571.19,323.32 L571.41,323.98 L571.63,322.22 L571.86,320.96 L572.08,317.11 L572.30,320.19 L572.53,321.24 L572.75,318.48 L572.97,322.09 L573.19,317.54 L573.42,317.38 L573.64,318.28 L573.86,319.71 L574.09,321.34 L574.31,322.00 L574.53,321.74 L574.76,320.05 L574.98,319.49 L575.20,317.37 L575.42,319.55 L575.65,317.82 L575.87,319.29 L576.09,321.65 L576.32,319.07 L576.54,320.40 L576.76,321.21 L576.99,317.74 L577.21,321.24 L577.43,322.49 L577.66,323.17 L577.88,320.83 L578.10,322.13 L578.32,324.59 L578.55,321.09 L578.77,322.20 L578.99,318.65 L579.22,319.21 L579.44,318.79 L579.66,319.48 L579.89,318.75 L580.11,317.04 L580.33,317.25 L580.55,319.98 L580.78,317.80 L581.00,319.42 L581.22,321.15 L581.45,321.90 L581.67,321.90 L581.89,317.67 L582.12,316.99 L582.34,314.90 L582.56,314.93 L582.78,317.26 L583.01,318.19 L583.23,319.18 L583.45,320.50 L583.68,320.00 L583.90,318.50 L584.12,322.24 L584.35,322.35 L584.57,322.69 L584.79,322.63 L585.01,322.69 L585.24,321.34 L585.46,322.61 L585.68,320.56 L585.91,318.58 L586.13,317.90 L586.35,315.44 L586.58,314.39 L586.80,316.14 L587.02,319.83 L587.24,319.64 L587.47,318.50 L587.69,319.00 L587.91,321.07 L588.14,322.20 L588.36,321.79 L588.58,319.80 L588.81,317.92 L589.03,319.57 L589.25,319.68 L589.47,320.49 L589.70,320.52 L589.92,318.43 L590.14,320.79 L590.37,320.00 L590.59,324.53 L590.81,323.16 L591.04,321.29 L591.26,322.05 L591.48,324.74 L591.70,322.97 L591.93,321.63 L592.15,321.40 L592.37,323.12 L592.60,325.69 L592.82,323.39 L593.04,326.31 L593.27,325.16 L593.49,325.66 L593.71,327.64 L593.93,327.22 L594.16,328.47 L594.38,328.16 L594.60,328.27 L594.83,327.65 L595.05,328.74 L595.27,329.18 L595.50,327.31 L595.72,330.64 L595.94,329.80 L596.16,326.61 L596.39,328.79 L596.61,330.58 L596.83,332.41 L597.06,331.39 L597.28,332.48 L597.50,329.20 L597.73,329.25 L597.95,331.71 L598.17,333.66 L598.39,330.49 L598.62,334.06 L598.84,333.26 L599.06,332.91 L599.29,333.33 L599.51,332.69 L599.73,333.94 L599.96,332.05 L600.18,333.42 L600.40,333.92 L600.63,332.84 L600.85,333.90 L601.07,332.87 L601.29,333.67 L601.52,337.79 L601.74,338.25 L601.96,337.46 L602.19,337.55 L602.41,336.29 L602.63,337.48 L602.86,337.88 L603.08,338.69 L603.30,338.30 L603.52,339.55 L603.75,338.94 L603.97,341.37 L604.19,338.45 L604.42,341.32 L604.64,341.98 L604.86,340.51 L605.09,340.29 L605.31,338.71 L605.53,342.68 L605.75,342.27 L605.98,339.35 L606.20,339.50 L606.42,340.66 L606.65,341.25 L606.87,343.12 L607.09,340.23 L607.32,340.60 L607.54,341.89 L607.76,344.35 L607.98,345.23 L608.21,345.53 L608.43,346.65 L608.65,348.70 L608.88,347.74 L609.10,348.05 L609.32,349.25 L609.55,348.83 L609.77,348.41 L609.99,347.27 L610.21,345.46 L610.44,345.74 L610.66,346.98 L610.88,344.07 L611.11,345.21 L611.33,345.42 L611.55,344.60 L611.78,345.23 L612.00,345.85 L612.22,346.84 L612.44,347.50 L612.67,346.52 L612.89,348.17 L613.11,344.94 L613.34,346.70 L613.56,346.86 L613.78,347.80 L614.01,346.67 L614.23,348.51 L614.45,345.64 L614.67,345.16 L614.90,345.07 L615.12,348.48 L615.34,346.77 L615.57,346.10 L615.79,349.44 L616.01,347.86 L616.24,346.24 L616.46,344.27 L616.68,345.39 L616.90,344.36 L617.13,346.29 L617.35,345.55 L617.57,346.10 L617.80,344.88 L618.02,346.26 L618.24,343.65 L618.47,343.57 L618.69,344.20 L618.91,348.15 L619.13,345.06 L619.36,347.35 L619.58,348.87 L619.80,347.69 L620.03,346.53 L620.25,345.89 L620.47,346.92 L620.70,347.18 L620.92,347.37 L621.14,346.08 L621.36,348.06 L621.59,349.87 L621.81,347.71 L622.03,348.84 L622.26,350.08 L622.48,346.01 L622.70,349.11 L622.93,347.27 L623.15,346.63 L623.37,346.21 L623.60,340.89 L623.82,340.29 L624.04,344.30 L624.26,344.44 L624.49,345.91 L624.71,347.59 L624.93,345.23 L625.16,344.02 L625.38,343.30 L625.60,343.02 L625.83,345.64 L626.05,344.39 L626.27,342.94 L626.49,342.25 L626.72,344.22 L626.94,344.44 L627.16,342.86 L627.39,346.59 L627.61,345.05 L627.83,344.25 L628.06,340.51 L628.28,343.94 L628.50,345.04 L628.72,343.90 L628.95,343.30 L629.17,345.47 L629.39,341.40 L629.62,343.16 L629.84,339.94 L630.06,342.06 L630.29,338.95 L630.51,342.72 L630.73,340.93 L630.95,340.89 L631.18,343.73 L631.40,344.30 L631.62,341.82 L631.85,342.23 L632.07,342.21 L632.29,340.29 L632.52,340.83 L632.74,339.82 L632.96,339.59 L633.18,340.30 L633.41,341.74 L633.63,343.92 L633.85,343.50 L634.08,342.94 L634.30,342.14 L634.52,339.26 L634.75,342.42 L634.97,342.64 L635.19,342.13 L635.41,343.97 L635.64,344.51 L635.86,343.40 L636.08,342.09 L636.31,340.24 L636.53,337.45 L636.75,336.68 L636.98,337.70 L637.20,337.35 L637.42,338.02 L637.64,339.80 L637.87,337.27 L638.09,341.11 L638.31,339.30 L638.54,335.74 L638.76,334.90 L638.98,335.98 L639.21,333.68 L639.43,337.65 L639.65,338.57 L639.87,342.18 L640.10,338.93 L640.32,342.11 L640.54,339.38 L640.77,335.36 L640.99,333.73 L641.21,333.26 L641.44,333.60 L641.66,336.86 L641.88,338.64 L642.10,337.37 L642.33,339.35 L642.55,334.95 L642.77,338.67 L643.00,336.40 L643.22,336.46 L643.44,337.56 L643.67,336.15 L643.89,339.06 L644.11,335.97 L644.33,336.99 L644.56,337.84 L644.78,334.84 L645.00,334.58 L645.23,336.71 L645.45,334.43 L645.67,334.09 L645.90,335.18 L646.12,335.71 L646.34,332.27 L646.57,331.26 L646.79,333.51 L647.01,334.57 L647.23,331.30 L647.46,332.94 L647.68,335.80 L647.90,335.04 L648.13,336.60 L648.35,333.57 L648.57,335.75 L648.80,336.22 L649.02,337.12 L649.24,336.09 L649.46,333.39 L649.69,336.96 L649.91,335.53 L650.13,332.63 L650.36,336.60 L650.58,334.95 L650.80,332.33 L651.03,335.75 L651.25,332.37 L651.47,333.35 L651.69,336.87 L651.92,334.69 L652.14,334.45 L652.36,333.87 L652.59,336.53 L652.81,337.60 L653.03,339.43 L653.26,339.41 L653.48,339.22 L653.70,334.44 L653.92,333.08 L654.15,334.76 L654.37,333.32 L654.59,334.68 L654.82,335.98 L655.04,335.93 L655.26,332.98 L655.49,335.15 L655.71,333.16 L655.93,330.85 L656.15,333.47 L656.38,330.64 L656.60,333.48 L656.82,330.48 L657.05,329.86 L657.27,329.37 L657.49,328.36 L657.72,329.15 L657.94,327.68 L658.16,331.11 L658.38,330.48 L658.61,332.13 L658.83,332.44 L659.05,329.87 L659.28,327.38 L659.50,326.43 L659.72,330.11 L659.95,326.58 L660.17,330.57 L660.39,330.83 L660.61,328.43 L660.84,328.01 L661.06,328.92 L661.28,331.41 L661.51,331.53 L661.73,330.32 L661.95,332.53 L662.18,330.13 L662.40,329.78 L662.62,330.82 L662.84,328.44 L663.07,330.22 L663.29,327.90 L663.51,328.19 L663.74,329.97 L663.96,329.59 L664.18,329.43 L664.41,329.66 L664.63,331.76 L664.85,328.45 L665.07,330.00 L665.30,335.72 L665.52,331.92 L665.74,332.83 L665.97,332.91 L666.19,327.97 L666.41,328.72 L666.64,327.16 L666.86,326.81 L667.08,328.57 L667.30,331.58 L667.53,328.84 L667.75,329.89 L667.97,328.84 L668.20,331.44 L668.42,328.74 L668.64,328.15 L668.87,330.54 L669.09,330.39 L669.31,331.07 L669.54,333.46 L669.76,333.80 L669.98,334.91 L670.20,336.96 L670.43,333.63 L670.65,333.86 L670.87,331.64 L671.10,331.55 L671.32,330.19 L671.54,327.77 L671.77,328.94 L671.99,328.59 L672.21,330.02 L672.43,330.50 L672.66,329.84 L672.88,332.91 L673.10,331.47 L673.33,330.24 L673.55,332.63 L673.77,328.36 L674.00,330.12 L674.22,330.65 L674.44,327.58 L674.66,327.06 L674.89,328.21 L675.11,327.43 L675.33,331.63 L675.56,329.38 L675.78,327.50 L676.00,325.71 L676.23,326.24 L676.45,326.00 L676.67,327.08 L676.89,326.97 L677.12,328.10 L677.34,327.20 L677.56,327.83 L677.79,328.10 L678.01,326.58 L678.23,329.62 L678.46,325.80 L678.68,327.25 L678.90,326.39 L679.12,329.03 L679.35,328.69 L679.57,327.36 L679.79,331.17 L680.02,330.37 L680.24,330.33 L680.46,329.65 L680.69,332.90 L680.91,330.33 L681.13,332.68 L681.35,332.19 L681.58,331.17 L681.80,331.10 L682.02,330.31 L682.25,330.14 L682.47,332.59 L682.69,329.93 L682.92,330.47 L683.14,332.19 L683.36,331.24 L683.58,331.25 L683.81,333.17 L684.03,330.66 L684.25,333.56 L684.48,332.66 L684.70,329.43 L684.92,331.34 L685.15,330.00 L685.37,330.58 L685.59,332.62 L685.81,330.50 L686.04,331.30 L686.26,334.54 L686.48,334.03 L686.71,331.23 L686.93,330.66 L687.15,331.42 L687.38,334.13 L687.60,335.74 L687.82,335.92 L688.04,337.14 L688.27,335.31 L688.49,336.26 L688.71,336.73 L688.94,335.95 L689.16,337.19 L689.38,334.58 L689.61,332.70 L689.83,332.58 L690.05,331.45 L690.27,332.81 L690.50,335.11 L690.72,334.71 L690.94,337.20 L691.17,335.78 L691.39,338.34 L691.61,337.27 L691.84,334.84 L692.06,336.19 L692.28,336.72 L692.51,336.34 L692.73,340.11 L692.95,339.23 L693.17,343.64 L693.40,342.21 L693.62,341.46 L693.84,340.20 L694.07,336.85 L694.29,341.75 L694.51,341.69 L694.74,341.33 L694.96,340.92 L695.18,340.12 L695.40,340.74 L695.63,340.05 L695.85,336.09 L696.07,339.18 L696.30,339.87 L696.52,339.76 L696.74,339.17 L696.97,337.31 L697.19,337.81 L697.41,337.78 L697.63,337.34 L697.86,336.36 L698.08,336.96 L698.30,339.00 L698.53,341.09 L698.75,341.43 L698.97,339.29 L699.20,340.11 L699.42,339.11 L699.64,342.38 L699.86,338.51 L700.09,341.47 L700.31,340.03 L700.53,342.84 L700.76,344.33 L700.98,343.85 L701.20,344.81 L701.43,343.97 L701.65,344.97 L701.87,341.21 L702.09,340.81 L702.32,341.19 L702.54,340.81 L702.76,339.68 L702.99,341.55 L703.21,340.07 L703.43,343.41 L703.66,343.77 L703.88,338.80 L704.10,341.47 L704.32,340.36 L704.55,342.15 L704.77,343.22 L704.99,343.55 L705.22,342.75 L705.44,346.68 L705.66,342.65 L705.89,341.07 L706.11,342.35 L706.33,343.12 L706.55,344.18 L706.78,345.08 L707.00,344.80 L707.22,342.38 L707.45,346.28 L707.67,342.84 L707.89,343.54 L708.12,346.40 L708.34,345.71 L708.56,342.06 L708.78,342.02 L709.01,343.94 L709.23,341.93 L709.45,345.15 L709.68,344.02 L709.90,345.20 L710.12,342.80 L710.35,346.00 L710.57,346.55 L710.79,344.66 L711.01,346.35 L711.24,345.85 L711.46,345.66 L711.68,346.11 L711.91,347.35 L712.13,343.92 L712.35,345.38 L712.58,344.07 L712.80,343.59 L713.02,346.00 L713.24,346.72 L713.47,344.29 L713.69,343.36 L713.91,344.15 L714.14,343.24 L714.36,343.79 L714.58,342.42 L714.81,342.47 L715.03,341.32 L715.25,345.62 L715.47,341.39 L715.70,340.74 L715.92,343.92 L716.14,342.92 L716.37,343.27 L716.59,344.47 L716.81,345.89 L717.04,343.64 L717.26,341.90 L717.48,345.37 L717.71,344.17 L717.93,347.02 L718.15,343.78 L718.37,344.51 L718.60,348.35 L718.82,345.87 L719.04,347.29 L719.27,351.26 L719.49,350.49 L719.71,350.18 L719.94,351.82 L720.16,351.00 L720.38,348.92 L720.60,350.84 L720.83,351.60 L721.05,352.92 L721.27,351.29 L721.50,346.72 L721.72,346.86 L721.94,347.23 L722.17,349.99 L722.39,351.44 L722.61,352.30 L722.83,351.30 L723.06,352.93 L723.28,352.33 L723.50,353.08 L723.73,352.99 L723.95,355.88 L724.17,357.45 L724.40,357.63 L724.62,357.35 L724.84,353.92 L725.06,353.82 L725.29,352.65 L725.51,353.19 L725.73,354.36 L725.96,352.84 L726.18,351.74 L726.40,354.38 L726.63,354.90 L726.85,357.10 L727.07,358.88 L727.29,356.94 L727.52,357.19 L727.74,357.28 L727.96,357.51 L728.19,355.53 L728.41,357.25 L728.63,355.61 L728.86,356.24 L729.08,353.33 L729.30,355.35 L729.52,356.26 L729.75,355.82 L729.97,357.73 L730.19,357.86 L730.42,359.47 L730.64,357.09 L730.86,359.78 L731.09,357.77 L731.31,358.17 L731.53,358.25 L731.75,355.98 L731.98,356.01 L732.20,354.70 L732.42,358.52 L732.65,356.57 L732.87,359.29 L733.09,363.13 L733.32,362.24 L733.54,359.47 L733.76,357.58 L733.98,360.34 L734.21,357.32 L734.43,361.18 L734.65,359.24 L734.88,361.25 L735.10,362.92 L735.32,363.62 L735.55,364.85 L735.77,364.65 L735.99,361.74 L736.21,360.81 L736.44,360.08 L736.66,362.39 L736.88,359.65 L737.11,363.09 L737.33,361.46 L737.55,363.53 L737.78,368.89 L738.00,366.62 L738.22,367.28 L738.44,366.58 L738.67,365.35 L738.89,366.82 L739.11,367.62 L739.34,368.86 L739.56,366.56 L739.78,365.90 L740.01,368.50 L740.23,364.80 L740.45,366.58 L740.68,367.08 L740.90,367.89 L741.12,367.66 L741.34,370.61 L741.57,371.76 L741.79,372.50 L742.01,371.06 L742.24,368.50 L742.46,371.49 L742.68,368.96 L742.91,368.19 L743.13,370.80 L743.35,369.97 L743.57,367.52 L743.80,367.36 L744.02,367.77 L744.24,370.17 L744.47,366.86 L744.69,368.57 L744.91,371.01 L745.14,371.25 L745.36,371.00 L745.58,372.48 L745.80,375.11 L746.03,376.19 L746.25,371.56 L746.47,370.74 L746.70,373.01 L746.92,374.81 L747.14,374.03 L747.37,373.77 L747.59,374.85 L747.81,375.00 L748.03,374.69 L748.26,373.82 L748.48,374.77 L748.70,374.53 L748.93,372.83 L749.15,378.93 L749.37,377.10 L749.60,377.46 L749.82,379.21 L750.04,378.35 L750.26,380.62 L750.49,379.48 L750.71,379.92 L750.93,379.84 L751.16,380.60 L751.38,377.86 L751.60,378.00 L751.83,379.33 L752.05,379.06 L752.27,381.22 L752.49,378.22 L752.72,379.51 L752.94,377.94 L753.16,379.98 L753.39,376.13 L753.61,379.99 L753.83,378.33 L754.06,380.74 L754.28,380.78 L754.50,378.53 L754.72,382.07 L754.95,380.74 L755.17,381.54 L755.39,378.03 L755.62,380.96 L755.84,379.66 L756.06,377.57 L756.29,378.80 L756.51,379.30 L756.73,378.49 L756.95,383.16 L757.18,380.22 L757.40,379.95 L757.62,380.18 L757.85,380.72 L758.07,384.39 L758.29,385.31 L758.52,382.92 L758.74,384.09 L758.96,385.99 L759.18,387.27 L759.41,384.77 L759.63,386.53 L759.85,382.94 L760.08,384.35 L760.30,382.34 L760.52,386.36 L760.75,385.31 L760.97,387.25 L761.19,383.46 L761.41,383.41 L761.64,384.08 L761.86,380.64 L762.08,382.44 L762.31,384.62 L762.53,382.37 L762.75,384.34 L762.98,381.58 L763.20,384.66 L763.42,382.03 L763.65,386.90 L763.87,383.71 L764.09,384.57 L764.31,382.25 L764.54,380.12 L764.76,382.87 L764.98,383.35 L765.21,386.10 L765.43,385.21 L765.65,388.78 L765.88,387.85 L766.10,388.26 L766.32,387.87 L766.54,383.85 L766.77,385.69 L766.99,385.91 L767.21,387.04 L767.44,387.63 L767.66,390.41 L767.88,390.46 L768.11,387.57 L768.33,388.18 L768.55,388.81 L768.77,385.29 L769.00,387.23 L769.22,388.07 L769.44,388.55 L769.67,384.77 L769.89,385.17 L770.11,386.33 L770.34,382.43 L770.56,382.84 L770.78,383.38 L771.00,384.21 L771.23,385.93 L771.45,387.26 L771.67,385.54 L771.90,387.30 L772.12,384.42 L772.34,386.37 L772.57,386.27 L772.79,382.97 L773.01,384.90 L773.23,383.71 L773.46,383.87 L773.68,384.13 L773.90,385.83 L774.13,385.80 L774.35,387.86 L774.57,387.57 L774.80,388.19 L775.02,392.12 L775.24,390.40 L775.46,388.60 L775.69,388.02 L775.91,387.52 L776.13,384.12 L776.36,388.69 L776.58,389.06 L776.80,387.05 L777.03,389.20 L777.25,387.91 L777.47,383.45 L777.69,383.71 L777.92,385.25 L778.14,387.38 L778.36,387.45 L778.59,384.60 L778.81,385.86 L779.03,389.52 L779.26,386.65 L779.48,387.81 L779.70,385.64 L779.92,387.21 L780.15,387.92 L780.37,388.62 L780.59,387.57 L780.82,385.06 L781.04,385.14 L781.26,386.56 L781.49,386.49 L781.71,388.71 L781.93,387.24 L782.15,383.94 L782.38,382.94 L782.60,385.27 L782.82,383.84 L783.05,383.01 L783.27,382.24 L783.49,384.81 L783.72,382.59 L783.94,383.50 L784.16,383.29 L784.38,384.06 L784.61,386.11 L784.83,388.42 L785.05,385.48 L785.28,385.64 L785.50,384.43" stroke="#2647cc" stroke-width="2.0"/>
</g>
<line x1="250.5" y1="35.6" x2="785.5" y2="35.6" stroke="#6e6e6e" stroke-width="1.2"/>
<line x1="250.5" y1="35.5" x2="250.5" y2="408" stroke="#a0a0a0" stroke-width="1.2"/>
<line x1="250.5" y1="408.3" x2="786" y2="408.3" stroke="#333" stroke-width="1.1"/>
<line x1="785.8" y1="35" x2="785.8" y2="408.8" stroke="#484848" stroke-width="1.4"/>
<g font-family="Liberation Sans" font-size="9.7" fill="#1e1e1e">
<line x1="246.5" y1="408.00" x2="250.5" y2="408.00" stroke="#333" stroke-width="1.1"/><text x="246.8" y="412.40" text-anchor="end">-2</text><line x1="246.5" y1="361.44" x2="250.5" y2="361.44" stroke="#333" stroke-width="1.1"/><text x="246.8" y="365.84" text-anchor="end">0</text><line x1="246.5" y1="314.88" x2="250.5" y2="314.88" stroke="#333" stroke-width="1.1"/><text x="246.8" y="319.27" text-anchor="end">2</text><line x1="246.5" y1="268.31" x2="250.5" y2="268.31" stroke="#333" stroke-width="1.1"/><text x="246.8" y="272.71" text-anchor="end">4</text><line x1="246.5" y1="221.75" x2="250.5" y2="221.75" stroke="#333" stroke-width="1.1"/><text x="246.8" y="226.15" text-anchor="end">6</text><line x1="246.5" y1="175.19" x2="250.5" y2="175.19" stroke="#333" stroke-width="1.1"/><text x="246.8" y="179.59" text-anchor="end">8</text><line x1="246.5" y1="128.62" x2="250.5" y2="128.62" stroke="#333" stroke-width="1.1"/><text x="246.8" y="133.03" text-anchor="end">10</text><line x1="246.5" y1="82.06" x2="250.5" y2="82.06" stroke="#333" stroke-width="1.1"/><text x="246.8" y="86.46" text-anchor="end">12</text><line x1="246.5" y1="35.50" x2="250.5" y2="35.50" stroke="#333" stroke-width="1.1"/><text x="246.8" y="39.90" text-anchor="end">14</text><line x1="250.50" y1="408" x2="250.50" y2="411.5" stroke="#333" stroke-width="1.1"/><text x="250.50" y="421" text-anchor="middle">0</text><line x1="339.67" y1="408" x2="339.67" y2="411.5" stroke="#333" stroke-width="1.1"/><text x="339.67" y="421" text-anchor="middle">5</text><line x1="428.83" y1="408" x2="428.83" y2="411.5" stroke="#333" stroke-width="1.1"/><text x="428.83" y="421" text-anchor="middle">10</text><line x1="518.00" y1="408" x2="518.00" y2="411.5" stroke="#333" stroke-width="1.1"/><text x="518.00" y="421" text-anchor="middle">15</text><line x1="607.17" y1="408" x2="607.17" y2="411.5" stroke="#333" stroke-width="1.1"/><text x="607.17" y="421" text-anchor="middle">20</text><line x1="696.33" y1="408" x2="696.33" y2="411.5" stroke="#333" stroke-width="1.1"/><text x="696.33" y="421" text-anchor="middle">25</text><line x1="785.50" y1="408" x2="785.50" y2="411.5" stroke="#333" stroke-width="1.1"/><text x="785.50" y="421" text-anchor="middle">30</text>
</g>
<text x="517.5" y="432.7" text-anchor="middle" font-family="Liberation Sans" font-size="11.5" fill="#222">Time</text>
<text transform="translate(231.8,222) rotate(-90)" text-anchor="middle" font-family="Liberation Sans" font-size="11.5" fill="#222">Y Axis</text>
<rect x="579.5" y="38.5" width="203.5" height="89.7" fill="#fff" stroke="#c4c4c4" stroke-width="1"/>
<g font-family="Liberation Sans" font-size="11.85">
<line x1="583" y1="49.60" x2="623" y2="49.60" stroke="#2647cc" stroke-width="1.8"/><text x="626" y="53.90" fill="#2647cc">Controller/Sum_1/out(1)/[1,1]</text><line x1="583" y1="66.30" x2="623" y2="66.30" stroke="#c8200f" stroke-width="1.8"/><text x="626" y="70.60" fill="#c8200f">Controller/Sum_1/out(1)/[2,1]</text><line x1="583" y1="83.00" x2="623" y2="83.00" stroke="#00eeff" stroke-width="1.8"/><text x="626" y="87.30" fill="#00eeff">Controller/K/in(1)/[1,1]</text><line x1="583" y1="99.70" x2="623" y2="99.70" stroke="#ff00ff" stroke-width="1.8"/><text x="626" y="104.00" fill="#ff00ff">Controller/K/in(1)/[2,1]</text><line x1="583" y1="116.40" x2="623" y2="116.40" stroke="#bf180a" stroke-width="1.8"/><text x="626" y="120.70" fill="#bf180a">Controller/K/in(1)/[3,1]</text>
</g>
</svg>
</body></html>
